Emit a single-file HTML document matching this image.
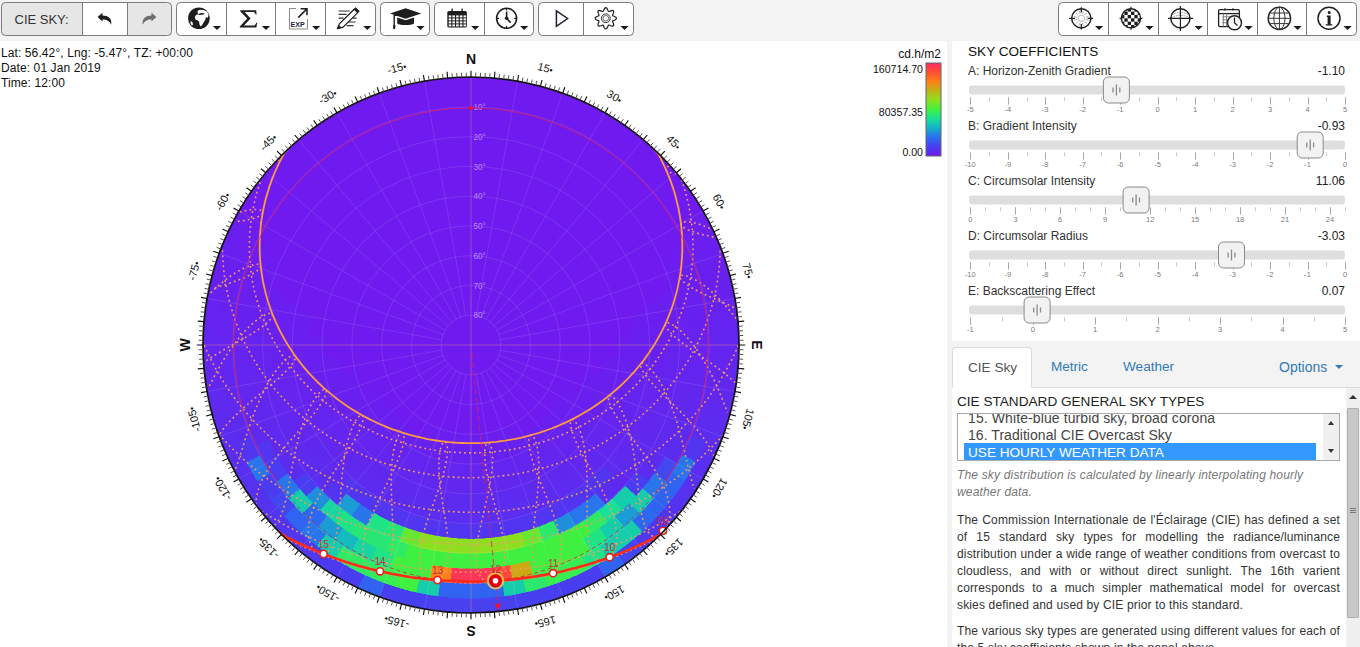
<!DOCTYPE html>
<html><head><meta charset="utf-8">
<style>
*{box-sizing:border-box}
html,body{margin:0;padding:0;width:1360px;height:647px;overflow:hidden;background:#fff;font-family:"Liberation Sans",sans-serif;color:#222}
#tb{position:absolute;left:0;top:0;width:1360px;height:41px;background:#f2f2f2}
.grp{position:absolute;top:2px;height:34px;border:1px solid #7c7c7c;border-radius:4px;background:#fff;overflow:hidden}
.btn{position:absolute;top:0;height:32px;border-left:1px solid #7c7c7c}
.btn.first{border-left:none}
.btn svg{position:absolute;left:0;top:0}
.caret{position:absolute;width:0;height:0;border-left:3.5px solid transparent;border-right:3.5px solid transparent;border-top:4px solid #222;top:25px}
#info{position:absolute;left:1px;top:45.8px;font-size:12px;line-height:15px;color:#111;letter-spacing:0.1px}
#gap{position:absolute;left:947px;top:41px;width:5px;height:606px;background:#f3f3f3}
#panel{position:absolute;left:952px;top:41px;width:408px;height:606px;background:#fff}
#legend{position:absolute;left:860px;top:45px;width:85px;height:115px;font-size:11px;color:#111}

.lbl{position:absolute;font-size:12px;color:#333;white-space:nowrap;line-height:14px}
.val{position:absolute;font-size:12px;color:#222;white-space:nowrap;text-align:right;line-height:14px}
#tabs{position:absolute;left:952px;top:341px;width:408px;height:47px;background:#f3f3f3;border-bottom:1px solid #dcdcdc}
.tab{position:absolute;top:6px;height:41px;font-size:14px;line-height:16px;color:#337ab7;white-space:nowrap}
.tab.act{background:#fff;border:1px solid #dcdcdc;border-bottom:none;border-radius:4px 4px 0 0;color:#555}
#content{position:absolute;left:952px;top:388px;width:394px;height:259px;background:#fff;overflow:hidden}
#sbar{position:absolute;left:1346px;top:388px;width:14px;height:259px;background:#f0f0f0}
#lb{position:absolute;left:5px;top:25px;width:383px;height:48px;border:1px solid #a9a9a9;background:#fff;overflow:hidden}
.it{position:absolute;left:10px;font-size:14px;line-height:17px;color:#444;white-space:nowrap}
.jl{position:absolute;left:5px;width:383px;font-size:12px;line-height:17px;color:#333;text-align:justify;text-align-last:justify;letter-spacing:0.15px;white-space:nowrap}
p.j{position:absolute;left:5px;width:383px;margin:0;font-size:12px;line-height:17px;color:#333;text-align:justify;letter-spacing:0.2px}
</style></head><body>
<svg width="1360" height="41" style="position:absolute;left:0;top:0"><rect x="0" y="0" width="1360" height="41" fill="#f3f3f3"/><clipPath id="g1c"><rect x="1.5" y="2.5" width="170" height="33" rx="4"/></clipPath><g clip-path="url(#g1c)"><rect x="1.5" y="2.5" width="81" height="33" fill="#e6e6e6"/><rect x="82.5" y="2.5" width="45" height="33" fill="#fff"/><rect x="127.5" y="2.5" width="44" height="33" fill="#e6e6e6"/></g><rect x="1.5" y="2.5" width="170" height="33" rx="4" fill="none" stroke="#7c7c7c"/><line x1="82.5" y1="3" x2="82.5" y2="35" stroke="#7c7c7c"/><line x1="127.5" y1="3" x2="127.5" y2="35" stroke="#7c7c7c"/><text x="14.5" y="23.8" font-family="Liberation Sans" font-size="13" fill="#333">CIE SKY:</text><path transform="translate(97.6,12.8)" d="M0,4.3 L4.9,0 V2.6 C10.5,2.6 14.6,5.2 13.6,12 C12.3,8.6 9.6,6.6 4.9,6.6 V8.8 Z" fill="#1e1e1e"/><path transform="translate(156.4,12.8) scale(-1,1)" d="M0,4.3 L4.9,0 V2.6 C10.5,2.6 14.6,5.2 13.6,12 C12.3,8.6 9.6,6.6 4.9,6.6 V8.8 Z" fill="#6e6e6e"/><rect x="176.5" y="2.5" width="199.0" height="33" rx="4" fill="#fff" stroke="#7c7c7c" stroke-width="1"/><line x1="226.5" y1="3" x2="226.5" y2="35" stroke="#7c7c7c" stroke-width="1"/><line x1="275.5" y1="3" x2="275.5" y2="35" stroke="#7c7c7c" stroke-width="1"/><line x1="325.5" y1="3" x2="325.5" y2="35" stroke="#7c7c7c" stroke-width="1"/><circle cx="198.9" cy="18.25" r="10.8" fill="#1e1e1e"/><path d="M197.6,10.8 L200,9.8 L203.5,9.9 L207,11.6 L208.6,14.6 L208,17.4 L205.6,17.6 L205.4,19.8 L203.8,22 L202,25.2 L200.8,26.4 L199.6,24.8 L199,21.6 L197,20 L195.4,19.6 L194.8,17 L195.6,15.4 L197,14.6 L198.6,14.6 L197.6,13 Z" fill="#fff"/><path d="M198,14.2 L201.2,13 L204.6,13.2 L203.6,14.6 L199.4,14.9 Z" fill="#1e1e1e"/><path d="M190.4,21 L192.4,22 L193,24.6 L192,25.4 L190.6,23.4 Z" fill="#fff"/><path d="M212.9,25.9 L221.1,25.9 L217.0,30.1 Z" fill="#1a1a1a"/><path d="M240.2,10.3 H256.2 L256.6,14.6 H255.6 C255.2,12.6 254.2,12 252.4,12 H244.6 L250.6,18.6 L244,25.6 H253 C254.8,25.6 255.6,24.8 256.2,22.8 H257.2 L256.4,27.4 H239.8 V26.6 L247.2,18.6 L240.2,11.2 Z" fill="#1e1e1e"/><path d="M261.9,25.9 L270.1,25.9 L266.0,30.1 Z" fill="#1a1a1a"/><path d="M296,8.5 H289.5 V29 H307.5 V19" fill="none" stroke="#8a8a8a" stroke-width="1"/><path d="M298.2,17.6 L306.4,9.4 M300.6,8.8 H307 V15.2" fill="none" stroke="#1e1e1e" stroke-width="1.5"/><text x="290.6" y="26.6" font-family="Liberation Sans" font-weight="bold" font-size="7.6" fill="#1c2340" textLength="14.2" lengthAdjust="spacingAndGlyphs">EXP</text><path d="M312.1,25.9 L320.3,25.9 L316.2,30.1 Z" fill="#1a1a1a"/><g stroke="#333" stroke-width="1.2" fill="none"><path d="M338.6,11 H349.6 M338.6,14.4 H346.6 M338.6,18.2 H343.6 M352.6,18.2 H356.6 M344.6,22 H355.6 M346.6,25.6 H353.6"/></g><path d="M337.6,28.6 L339.4,23.8 L354.2,9.2 L357.8,12.6 L343,27.2 Z" fill="#fff" stroke="#1e1e1e" stroke-width="1.2"/><path d="M337.6,28.6 L338.6,25.4 L341,27.6 Z M354.2,9.2 L355.6,7.8 L359.2,11.2 L357.8,12.6 Z" fill="#1e1e1e" stroke="#1e1e1e" stroke-width="1"/><path d="M363.2,25.9 L371.4,25.9 L367.3,30.1 Z" fill="#1a1a1a"/><rect x="380.5" y="2.5" width="49.0" height="33" rx="4" fill="#fff" stroke="#7c7c7c" stroke-width="1"/><path d="M390,13.6 L405.6,8.2 L421.3,13.6 L405.6,18.8 Z" fill="#1e1e1e"/><path d="M397.2,17.4 L405.6,20.2 L414,17.4 V23.4 C411,25.4 400.2,25.4 397.2,23.4 Z" fill="#1e1e1e"/><path d="M405,13.8 L394.2,15.6 V27.6" fill="none" stroke="#1e1e1e" stroke-width="1.4"/><path d="M393.2,25 H395.4 L395.2,28.9 H393.2 Z" fill="#1e1e1e"/><path d="M416.4,25.9 L424.6,25.9 L420.5,30.1 Z" fill="#1a1a1a"/><rect x="434.5" y="2.5" width="99.0" height="33" rx="4" fill="#fff" stroke="#7c7c7c" stroke-width="1"/><line x1="484.5" y1="3" x2="484.5" y2="35" stroke="#7c7c7c" stroke-width="1"/><rect x="447.3" y="11" width="19.6" height="16.6" rx="1.6" fill="#1e1e1e"/><rect x="448.7" y="15.4" width="2.6" height="2" fill="#fff"/><rect x="452.4" y="15.4" width="2.6" height="2" fill="#fff"/><rect x="456.1" y="15.4" width="2.6" height="2" fill="#fff"/><rect x="459.8" y="15.4" width="2.6" height="2" fill="#fff"/><rect x="463.5" y="15.4" width="2.6" height="2" fill="#fff"/><rect x="448.7" y="18.4" width="2.6" height="2" fill="#fff"/><rect x="452.4" y="18.4" width="2.6" height="2" fill="#fff"/><rect x="456.1" y="18.4" width="2.6" height="2" fill="#fff"/><rect x="459.8" y="18.4" width="2.6" height="2" fill="#fff"/><rect x="463.5" y="18.4" width="2.6" height="2" fill="#fff"/><rect x="448.7" y="21.4" width="2.6" height="2" fill="#fff"/><rect x="452.4" y="21.4" width="2.6" height="2" fill="#fff"/><rect x="456.1" y="21.4" width="2.6" height="2" fill="#fff"/><rect x="459.8" y="21.4" width="2.6" height="2" fill="#fff"/><rect x="463.5" y="21.4" width="2.6" height="2" fill="#fff"/><rect x="448.7" y="24.4" width="2.6" height="2" fill="#fff"/><rect x="452.4" y="24.4" width="2.6" height="2" fill="#fff"/><rect x="456.1" y="24.4" width="2.6" height="2" fill="#fff"/><rect x="459.8" y="24.4" width="2.6" height="2" fill="#fff"/><rect x="463.5" y="24.4" width="2.6" height="2" fill="#fff"/><rect x="451.4" y="8.6" width="1.4" height="4.4" fill="#1e1e1e"/><rect x="461.4" y="8.6" width="1.4" height="4.4" fill="#1e1e1e"/><path d="M471.1,25.9 L479.3,25.9 L475.2,30.1 Z" fill="#1a1a1a"/><circle cx="506.6" cy="18.3" r="10" fill="none" stroke="#1e1e1e" stroke-width="1.6"/><path d="M506.6,8.6 V10.6 M506.6,26 V28 M497,18.3 H499 M514.2,18.3 H516.2" stroke="#1e1e1e" stroke-width="1.2"/><path d="M506.6,11.6 V18.3 L510.6,22.6" fill="none" stroke="#1e1e1e" stroke-width="1.6"/><circle cx="506.6" cy="18.3" r="1.8" fill="#1e1e1e"/><path d="M520.1,25.9 L528.3,25.9 L524.2,30.1 Z" fill="#1a1a1a"/><rect x="538.5" y="2.5" width="95.0" height="33" rx="4" fill="#fff" stroke="#7c7c7c" stroke-width="1"/><line x1="583.5" y1="3" x2="583.5" y2="35" stroke="#7c7c7c" stroke-width="1"/><path d="M556.4,10.8 L567.6,18.5 L556.4,26.4 Z" fill="none" stroke="#1e2030" stroke-width="1.5" stroke-linejoin="miter"/><path d="M605.80,7.70 L606.31,7.83 L606.79,8.22 L607.21,8.79 L607.56,9.47 L607.84,10.16 L608.08,10.77 L608.33,11.22 L608.63,11.46 L609.02,11.50 L609.51,11.36 L610.11,11.11 L610.80,10.82 L611.53,10.58 L612.23,10.47 L612.84,10.54 L613.30,10.80 L613.56,11.26 L613.63,11.87 L613.52,12.57 L613.28,13.30 L612.99,13.99 L612.74,14.59 L612.60,15.08 L612.64,15.47 L612.88,15.77 L613.33,16.02 L613.94,16.26 L614.63,16.54 L615.31,16.89 L615.88,17.31 L616.27,17.79 L616.40,18.30 L616.27,18.81 L615.88,19.29 L615.31,19.71 L614.63,20.06 L613.94,20.34 L613.33,20.58 L612.88,20.83 L612.64,21.13 L612.60,21.52 L612.74,22.01 L612.99,22.61 L613.28,23.30 L613.52,24.03 L613.63,24.73 L613.56,25.34 L613.30,25.80 L612.84,26.06 L612.23,26.13 L611.53,26.02 L610.80,25.78 L610.11,25.49 L609.51,25.24 L609.02,25.10 L608.63,25.14 L608.33,25.38 L608.08,25.83 L607.84,26.44 L607.56,27.13 L607.21,27.81 L606.79,28.38 L606.31,28.77 L605.80,28.90 L605.29,28.77 L604.81,28.38 L604.39,27.81 L604.04,27.13 L603.76,26.44 L603.52,25.83 L603.27,25.38 L602.97,25.14 L602.58,25.10 L602.09,25.24 L601.49,25.49 L600.80,25.78 L600.07,26.02 L599.37,26.13 L598.76,26.06 L598.30,25.80 L598.04,25.34 L597.97,24.73 L598.08,24.03 L598.32,23.30 L598.61,22.61 L598.86,22.01 L599.00,21.52 L598.96,21.13 L598.72,20.83 L598.27,20.58 L597.66,20.34 L596.97,20.06 L596.29,19.71 L595.72,19.29 L595.33,18.81 L595.20,18.30 L595.33,17.79 L595.72,17.31 L596.29,16.89 L596.97,16.54 L597.66,16.26 L598.27,16.02 L598.72,15.77 L598.96,15.47 L599.00,15.08 L598.86,14.59 L598.61,13.99 L598.32,13.30 L598.08,12.57 L597.97,11.87 L598.04,11.26 L598.30,10.80 L598.76,10.54 L599.37,10.47 L600.07,10.58 L600.80,10.82 L601.49,11.11 L602.09,11.36 L602.58,11.50 L602.97,11.46 L603.27,11.22 L603.52,10.77 L603.76,10.16 L604.04,9.47 L604.39,8.79 L604.81,8.22 L605.29,7.83Z" fill="none" stroke="#1e1e1e" stroke-width="1.2"/><circle cx="605.8" cy="18.3" r="4.4" fill="none" stroke="#333" stroke-width="1"/><circle cx="605.8" cy="18.3" r="2.8" fill="none" stroke="#555" stroke-width="0.9"/><path d="M620.4,25.9 L628.6,25.9 L624.5,30.1 Z" fill="#1a1a1a"/><rect x="1058.5" y="2.5" width="298.0" height="33" rx="4" fill="#fff" stroke="#7c7c7c" stroke-width="1"/><line x1="1108.5" y1="3" x2="1108.5" y2="35" stroke="#7c7c7c" stroke-width="1"/><line x1="1158.5" y1="3" x2="1158.5" y2="35" stroke="#7c7c7c" stroke-width="1"/><line x1="1207.5" y1="3" x2="1207.5" y2="35" stroke="#7c7c7c" stroke-width="1"/><line x1="1257.5" y1="3" x2="1257.5" y2="35" stroke="#7c7c7c" stroke-width="1"/><line x1="1306.5" y1="3" x2="1306.5" y2="35" stroke="#7c7c7c" stroke-width="1"/><path d="M1082.49,13.86 L1083.22,11.15 M1084.55,15.05 L1086.53,13.07 M1085.74,17.11 L1088.45,16.38 M1085.74,19.49 L1088.45,20.22 M1084.55,21.55 L1086.53,23.53 M1082.49,22.74 L1083.22,25.45 M1080.11,22.74 L1079.38,25.45 M1078.05,21.55 L1076.07,23.53 M1076.86,19.49 L1074.15,20.22 M1076.86,17.11 L1074.15,16.38 M1078.05,15.05 L1076.07,13.07 M1080.11,13.86 L1079.38,11.15" stroke="#999" stroke-width="0.8"/><circle cx="1081.3" cy="18.3" r="3.2" fill="none" stroke="#aaa" stroke-width="0.9"/><circle cx="1081.3" cy="18.3" r="9.6" fill="none" stroke="#222" stroke-width="1.5"/><path d="M1081.3,7.2 V12.6 M1081.3,24 V29.4 M1069.2,18.3 H1075 M1087.6,18.3 H1093" stroke="#222" stroke-width="1.3"/><path d="M1095.0,25.9 L1103.2,25.9 L1099.1,30.1 Z" fill="#1a1a1a"/><clipPath id="chk"><circle cx="1131.0" cy="18.3" r="9.6"/></clipPath><g clip-path="url(#chk)"><rect x="1121.0" y="8.3" width="20" height="20" fill="#fff"/><rect x="1121.00" y="8.30" width="3.34" height="3.34" fill="#1e1e1e"/><rect x="1127.68" y="8.30" width="3.34" height="3.34" fill="#1e1e1e"/><rect x="1134.36" y="8.30" width="3.34" height="3.34" fill="#1e1e1e"/><rect x="1124.34" y="11.64" width="3.34" height="3.34" fill="#1e1e1e"/><rect x="1131.02" y="11.64" width="3.34" height="3.34" fill="#1e1e1e"/><rect x="1137.70" y="11.64" width="3.34" height="3.34" fill="#1e1e1e"/><rect x="1121.00" y="14.98" width="3.34" height="3.34" fill="#1e1e1e"/><rect x="1127.68" y="14.98" width="3.34" height="3.34" fill="#1e1e1e"/><rect x="1134.36" y="14.98" width="3.34" height="3.34" fill="#1e1e1e"/><rect x="1124.34" y="18.32" width="3.34" height="3.34" fill="#1e1e1e"/><rect x="1131.02" y="18.32" width="3.34" height="3.34" fill="#1e1e1e"/><rect x="1137.70" y="18.32" width="3.34" height="3.34" fill="#1e1e1e"/><rect x="1121.00" y="21.66" width="3.34" height="3.34" fill="#1e1e1e"/><rect x="1127.68" y="21.66" width="3.34" height="3.34" fill="#1e1e1e"/><rect x="1134.36" y="21.66" width="3.34" height="3.34" fill="#1e1e1e"/><rect x="1124.34" y="25.00" width="3.34" height="3.34" fill="#1e1e1e"/><rect x="1131.02" y="25.00" width="3.34" height="3.34" fill="#1e1e1e"/><rect x="1137.70" y="25.00" width="3.34" height="3.34" fill="#1e1e1e"/></g><circle cx="1131.0" cy="18.3" r="9.6" fill="none" stroke="#222" stroke-width="1.4"/><path d="M1131.0,6.8 V9 M1131.0,27.6 V29.8 M1119.6,18.3 H1122 M1140,18.3 H1142.4" stroke="#222" stroke-width="1.2"/><path d="M1145.4,25.9 L1153.6,25.9 L1149.5,30.1 Z" fill="#1a1a1a"/><path d="M1171.8000000000002,15 Q1180.4,9.4 1189.0,15 M1171.2,18 Q1180.4,12.4 1189.6000000000001,18" fill="none" stroke="#888" stroke-width="0.9" stroke-dasharray="1.6,1"/><circle cx="1180.4" cy="18.3" r="9.6" fill="none" stroke="#222" stroke-width="1.5"/><path d="M1180.4,6 V31 M1168,18.3 H1193" stroke="#222" stroke-width="1.2"/><path d="M1194.5,25.9 L1202.7,25.9 L1198.6,30.1 Z" fill="#1a1a1a"/><rect x="1218.6" y="9.6" width="20.8" height="17" rx="1.4" fill="none" stroke="#222" stroke-width="1.3"/><path d="M1218.6,13.6 H1239.4" stroke="#222" stroke-width="1.3"/><path d="M1222.2,16.8 H1231 M1222.2,19.8 H1229 M1222.2,22.8 H1228 M1223.4,13.6 V26.4 M1226.6,13.6 V26.4" stroke="#777" stroke-width="0.9"/><path d="M1225,8.2 V10.6 M1233,8.2 V10.6" stroke="#222" stroke-width="1.3"/><circle cx="1234.5" cy="22.8" r="7" fill="#fff" stroke="#222" stroke-width="1.4"/><path d="M1234.5,17.6 V22.8 L1237.4,25.4" fill="none" stroke="#222" stroke-width="1.3"/><path d="M1244.5,25.9 L1252.7,25.9 L1248.6,30.1 Z" fill="#1a1a1a"/><circle cx="1279.4" cy="18.3" r="11.2" fill="none" stroke="#222" stroke-width="1.4"/><ellipse cx="1279.4" cy="18.3" rx="5.6" ry="11.2" fill="none" stroke="#333" stroke-width="1"/><path d="M1279.4,7.1 V29.5 M1268.2,18.3 H1290.6 M1270.4,13 H1288.4 M1270.4,23.6 H1288.4" stroke="#333" stroke-width="1"/><path d="M1293.5,25.9 L1301.7,25.9 L1297.6,30.1 Z" fill="#1a1a1a"/><circle cx="1329.0" cy="18.3" r="11" fill="none" stroke="#222" stroke-width="1.5"/><circle cx="1329.2" cy="12.4" r="1.5" fill="#1e1e1e"/><path d="M1326.8,15.6 H1330.6 V24.2 H1332.2 V25.6 H1325.8 V24.2 H1327.6 V17 H1326.8 Z" fill="#1e1e1e"/><path d="M1343.5,25.9 L1351.7,25.9 L1347.6,30.1 Z" fill="#1a1a1a"/></svg>
<div id="info">Lat: 56.42°, Lng: -5.47°, TZ: +00:00<br>Date: 01 Jan 2019<br>Time: 12:00</div>
<svg width="1360" height="647" style="position:absolute;left:0;top:0">
<defs><clipPath id="dc"><circle cx="471.0" cy="345.0" r="268.0"/></clipPath></defs>
<circle cx="471.0" cy="345.0" r="268.0" fill="#6f1aef"/>
<g clip-path="url(#dc)" shape-rendering="crispEdges">
<path d="M703.1,211.0 L706.0,216.1 L708.7,221.3 L711.4,226.5 L713.9,231.7 L700.4,238.0 L698.0,233.1 L695.5,228.1 L692.9,223.3 L690.2,218.4Z" fill="#6b1eef" stroke="#6b1eef" stroke-width="0.6"/>
<path d="M713.9,231.7 L716.3,237.1 L718.6,242.4 L720.8,247.9 L722.8,253.3 L708.8,258.4 L706.9,253.3 L704.8,248.1 L702.7,243.1 L700.4,238.0Z" fill="#691fef" stroke="#691fef" stroke-width="0.6"/>
<path d="M722.8,253.3 L724.8,258.9 L726.6,264.4 L728.3,270.0 L729.9,275.6 L715.5,279.5 L714.0,274.2 L712.4,268.9 L710.7,263.6 L708.8,258.4Z" fill="#6920ef" stroke="#6920ef" stroke-width="0.6"/>
<path d="M729.9,275.6 L731.3,281.3 L732.6,287.0 L733.9,292.7 L734.9,298.5 L720.3,301.0 L719.2,295.6 L718.1,290.2 L716.9,284.8 L715.5,279.5Z" fill="#6721ef" stroke="#6721ef" stroke-width="0.6"/>
<path d="M734.9,298.5 L735.9,304.2 L736.7,310.0 L737.4,315.8 L738.0,321.6 L723.1,322.9 L722.6,317.4 L721.9,312.0 L721.2,306.5 L720.3,301.0Z" fill="#6622ef" stroke="#6622ef" stroke-width="0.6"/>
<path d="M738.0,321.6 L738.4,327.5 L738.7,333.3 L738.9,339.2 L739.0,345.0 L724.1,345.0 L724.1,339.5 L723.9,334.0 L723.6,328.4 L723.1,322.9Z" fill="#6424ef" stroke="#6424ef" stroke-width="0.6"/>
<path d="M739.0,345.0 L738.9,350.8 L738.7,356.7 L738.4,362.5 L738.0,368.4 L723.1,367.1 L723.6,361.6 L723.9,356.0 L724.1,350.5 L724.1,345.0Z" fill="#6325ef" stroke="#6325ef" stroke-width="0.6"/>
<path d="M738.0,368.4 L737.4,374.2 L736.7,380.0 L735.9,385.8 L734.9,391.5 L720.3,389.0 L721.2,383.5 L721.9,378.0 L722.6,372.6 L723.1,367.1Z" fill="#6127ef" stroke="#6127ef" stroke-width="0.6"/>
<path d="M734.9,391.5 L733.9,397.3 L732.6,403.0 L731.3,408.7 L729.9,414.4 L715.5,410.5 L716.9,405.2 L718.1,399.8 L719.2,394.4 L720.3,389.0Z" fill="#5f29ef" stroke="#5f29ef" stroke-width="0.6"/>
<path d="M729.9,414.4 L728.3,420.0 L726.6,425.6 L724.8,431.1 L722.8,436.7 L708.8,431.6 L710.7,426.4 L712.4,421.1 L714.0,415.8 L715.5,410.5Z" fill="#5d2bef" stroke="#5d2bef" stroke-width="0.6"/>
<path d="M722.8,436.7 L720.8,442.1 L718.6,447.6 L716.3,452.9 L713.9,458.3 L700.4,452.0 L702.7,446.9 L704.8,441.9 L706.9,436.7 L708.8,431.6Z" fill="#5b2df0" stroke="#5b2df0" stroke-width="0.6"/>
<path d="M713.9,458.3 L711.4,463.5 L708.7,468.7 L706.0,473.9 L703.1,479.0 L690.2,471.6 L692.9,466.7 L695.5,461.9 L698.0,456.9 L700.4,452.0Z" fill="#582ff0" stroke="#582ff0" stroke-width="0.6"/>
<path d="M703.1,479.0 L700.1,484.0 L697.0,489.0 L693.8,493.9 L690.5,498.7 L678.3,490.2 L681.5,485.6 L684.5,481.0 L687.4,476.3 L690.2,471.6Z" fill="#5631f0" stroke="#5631f0" stroke-width="0.6"/>
<path d="M690.5,498.7 L687.1,503.5 L683.6,508.1 L680.0,512.7 L676.3,517.3 L664.9,507.7 L668.4,503.4 L671.8,499.1 L675.1,494.7 L678.3,490.2Z" fill="#5433f0" stroke="#5433f0" stroke-width="0.6"/>
<path d="M676.3,517.3 L672.5,521.7 L668.6,526.1 L664.6,530.3 L660.5,534.5 L650.0,524.0 L653.8,520.0 L657.6,516.0 L661.3,511.9 L664.9,507.7Z" fill="#5235f0" stroke="#5235f0" stroke-width="0.6"/>
<path d="M660.5,534.5 L656.3,538.6 L652.1,542.6 L647.7,546.5 L643.3,550.3 L633.7,538.9 L637.9,535.3 L642.0,531.6 L646.0,527.8 L650.0,524.0Z" fill="#5037f0" stroke="#5037f0" stroke-width="0.6"/>
<path d="M643.3,550.3 L638.7,554.0 L634.1,557.6 L629.5,561.1 L624.7,564.5 L616.2,552.3 L620.7,549.1 L625.1,545.8 L629.4,542.4 L633.7,538.9Z" fill="#4446f0" stroke="#4446f0" stroke-width="0.6"/>
<path d="M624.7,564.5 L619.9,567.8 L615.0,571.0 L610.0,574.1 L605.0,577.1 L597.6,564.2 L602.3,561.4 L607.0,558.5 L611.6,555.5 L616.2,552.3Z" fill="#3064f0" stroke="#3064f0" stroke-width="0.6"/>
<path d="M605.0,577.1 L599.9,580.0 L594.7,582.7 L589.5,585.4 L584.3,587.9 L578.0,574.4 L582.9,572.0 L587.9,569.5 L592.7,566.9 L597.6,564.2Z" fill="#4a3cf0" stroke="#4a3cf0" stroke-width="0.6"/>
<path d="M584.3,587.9 L578.9,590.3 L573.6,592.6 L568.1,594.8 L562.7,596.8 L557.6,582.8 L562.7,580.9 L567.9,578.8 L572.9,576.7 L578.0,574.4Z" fill="#493df0" stroke="#493df0" stroke-width="0.6"/>
<path d="M562.7,596.8 L557.1,598.8 L551.6,600.6 L546.0,602.3 L540.4,603.9 L536.5,589.5 L541.8,588.0 L547.1,586.4 L552.4,584.7 L557.6,582.8Z" fill="#483ff0" stroke="#483ff0" stroke-width="0.6"/>
<path d="M540.4,603.9 L534.7,605.3 L529.0,606.6 L523.3,607.9 L517.5,608.9 L515.0,594.3 L520.4,593.2 L525.8,592.1 L531.2,590.9 L536.5,589.5Z" fill="#4740f0" stroke="#4740f0" stroke-width="0.6"/>
<path d="M517.5,608.9 L511.8,609.9 L506.0,610.7 L500.2,611.4 L494.4,612.0 L493.1,597.1 L498.6,596.6 L504.0,595.9 L509.5,595.2 L515.0,594.3Z" fill="#4741f0" stroke="#4741f0" stroke-width="0.6"/>
<path d="M494.4,612.0 L488.5,612.4 L482.7,612.7 L476.8,612.9 L471.0,613.0 L471.0,598.1 L476.5,598.1 L482.0,597.9 L487.6,597.6 L493.1,597.1Z" fill="#4741f0" stroke="#4741f0" stroke-width="0.6"/>
<path d="M471.0,613.0 L465.2,612.9 L459.3,612.7 L453.5,612.4 L447.6,612.0 L448.9,597.1 L454.4,597.6 L460.0,597.9 L465.5,598.1 L471.0,598.1Z" fill="#4741f0" stroke="#4741f0" stroke-width="0.6"/>
<path d="M447.6,612.0 L441.8,611.4 L436.0,610.7 L430.2,609.9 L424.5,608.9 L427.0,594.3 L432.5,595.2 L438.0,595.9 L443.4,596.6 L448.9,597.1Z" fill="#4741f0" stroke="#4741f0" stroke-width="0.6"/>
<path d="M424.5,608.9 L418.7,607.9 L413.0,606.6 L407.3,605.3 L401.6,603.9 L405.5,589.5 L410.8,590.9 L416.2,592.1 L421.6,593.2 L427.0,594.3Z" fill="#4740f0" stroke="#4740f0" stroke-width="0.6"/>
<path d="M401.6,603.9 L396.0,602.3 L390.4,600.6 L384.9,598.8 L379.3,596.8 L384.4,582.8 L389.6,584.7 L394.9,586.4 L400.2,588.0 L405.5,589.5Z" fill="#483ff0" stroke="#483ff0" stroke-width="0.6"/>
<path d="M379.3,596.8 L373.9,594.8 L368.4,592.6 L363.1,590.3 L357.7,587.9 L364.0,574.4 L369.1,576.7 L374.1,578.8 L379.3,580.9 L384.4,582.8Z" fill="#3064f0" stroke="#3064f0" stroke-width="0.6"/>
<path d="M357.7,587.9 L352.5,585.4 L347.3,582.7 L342.1,580.0 L337.0,577.1 L344.4,564.2 L349.3,566.9 L354.1,569.5 L359.1,572.0 L364.0,574.4Z" fill="#4a3cf0" stroke="#4a3cf0" stroke-width="0.6"/>
<path d="M337.0,577.1 L332.0,574.1 L327.0,571.0 L322.1,567.8 L317.3,564.5 L325.8,552.3 L330.4,555.5 L335.0,558.5 L339.7,561.4 L344.4,564.2Z" fill="#4c3af0" stroke="#4c3af0" stroke-width="0.6"/>
<path d="M317.3,564.5 L312.5,561.1 L307.9,557.6 L303.3,554.0 L298.7,550.3 L308.3,538.9 L312.6,542.4 L316.9,545.8 L321.3,549.1 L325.8,552.3Z" fill="#4e39f0" stroke="#4e39f0" stroke-width="0.6"/>
<path d="M298.7,550.3 L294.3,546.5 L289.9,542.6 L285.7,538.6 L281.5,534.5 L292.0,524.0 L296.0,527.8 L300.0,531.6 L304.1,535.3 L308.3,538.9Z" fill="#5037f0" stroke="#5037f0" stroke-width="0.6"/>
<path d="M281.5,534.5 L277.4,530.3 L273.4,526.1 L269.5,521.7 L265.7,517.3 L277.1,507.7 L280.7,511.9 L284.4,516.0 L288.2,520.0 L292.0,524.0Z" fill="#5235f0" stroke="#5235f0" stroke-width="0.6"/>
<path d="M265.7,517.3 L262.0,512.7 L258.4,508.1 L254.9,503.5 L251.5,498.7 L263.7,490.2 L266.9,494.7 L270.2,499.1 L273.6,503.4 L277.1,507.7Z" fill="#5433f0" stroke="#5433f0" stroke-width="0.6"/>
<path d="M251.5,498.7 L248.2,493.9 L245.0,489.0 L241.9,484.0 L238.9,479.0 L251.8,471.6 L254.6,476.3 L257.5,481.0 L260.5,485.6 L263.7,490.2Z" fill="#5631f0" stroke="#5631f0" stroke-width="0.6"/>
<path d="M238.9,479.0 L236.0,473.9 L233.3,468.7 L230.6,463.5 L228.1,458.3 L241.6,452.0 L244.0,456.9 L246.5,461.9 L249.1,466.7 L251.8,471.6Z" fill="#582ff0" stroke="#582ff0" stroke-width="0.6"/>
<path d="M228.1,458.3 L225.7,452.9 L223.4,447.6 L221.2,442.1 L219.2,436.7 L233.2,431.6 L235.1,436.7 L237.2,441.9 L239.3,446.9 L241.6,452.0Z" fill="#5b2df0" stroke="#5b2df0" stroke-width="0.6"/>
<path d="M219.2,436.7 L217.2,431.1 L215.4,425.6 L213.7,420.0 L212.1,414.4 L226.5,410.5 L228.0,415.8 L229.6,421.1 L231.3,426.4 L233.2,431.6Z" fill="#5d2bef" stroke="#5d2bef" stroke-width="0.6"/>
<path d="M212.1,414.4 L210.7,408.7 L209.4,403.0 L208.1,397.3 L207.1,391.5 L221.7,389.0 L222.8,394.4 L223.9,399.8 L225.1,405.2 L226.5,410.5Z" fill="#5f29ef" stroke="#5f29ef" stroke-width="0.6"/>
<path d="M207.1,391.5 L206.1,385.8 L205.3,380.0 L204.6,374.2 L204.0,368.4 L218.9,367.1 L219.4,372.6 L220.1,378.0 L220.8,383.5 L221.7,389.0Z" fill="#6127ef" stroke="#6127ef" stroke-width="0.6"/>
<path d="M204.0,368.4 L203.6,362.5 L203.3,356.7 L203.1,350.8 L203.0,345.0 L217.9,345.0 L217.9,350.5 L218.1,356.0 L218.4,361.6 L218.9,367.1Z" fill="#6325ef" stroke="#6325ef" stroke-width="0.6"/>
<path d="M203.0,345.0 L203.1,339.2 L203.3,333.3 L203.6,327.5 L204.0,321.6 L218.9,322.9 L218.4,328.4 L218.1,334.0 L217.9,339.5 L217.9,345.0Z" fill="#6424ef" stroke="#6424ef" stroke-width="0.6"/>
<path d="M204.0,321.6 L204.6,315.8 L205.3,310.0 L206.1,304.2 L207.1,298.5 L221.7,301.0 L220.8,306.5 L220.1,312.0 L219.4,317.4 L218.9,322.9Z" fill="#6622ef" stroke="#6622ef" stroke-width="0.6"/>
<path d="M207.1,298.5 L208.1,292.7 L209.4,287.0 L210.7,281.3 L212.1,275.6 L226.5,279.5 L225.1,284.8 L223.9,290.2 L222.8,295.6 L221.7,301.0Z" fill="#6721ef" stroke="#6721ef" stroke-width="0.6"/>
<path d="M212.1,275.6 L213.7,270.0 L215.4,264.4 L217.2,258.9 L219.2,253.3 L233.2,258.4 L231.3,263.6 L229.6,268.9 L228.0,274.2 L226.5,279.5Z" fill="#6920ef" stroke="#6920ef" stroke-width="0.6"/>
<path d="M219.2,253.3 L221.2,247.9 L223.4,242.4 L225.7,237.1 L228.1,231.7 L241.6,238.0 L239.3,243.1 L237.2,248.1 L235.1,253.3 L233.2,258.4Z" fill="#691fef" stroke="#691fef" stroke-width="0.6"/>
<path d="M228.1,231.7 L230.6,226.5 L233.3,221.3 L236.0,216.1 L238.9,211.0 L251.8,218.4 L249.1,223.3 L246.5,228.1 L244.0,233.1 L241.6,238.0Z" fill="#6b1eef" stroke="#6b1eef" stroke-width="0.6"/>
<path d="M695.5,228.1 L698.0,233.1 L700.4,238.0 L702.7,243.1 L704.8,248.1 L691.1,253.8 L689.0,249.1 L686.9,244.3 L684.7,239.6 L682.3,235.0Z" fill="#6b1eef" stroke="#6b1eef" stroke-width="0.6"/>
<path d="M704.8,248.1 L706.9,253.3 L708.8,258.4 L710.7,263.6 L712.4,268.9 L698.2,273.4 L696.6,268.4 L694.9,263.5 L693.0,258.7 L691.1,253.8Z" fill="#691fef" stroke="#691fef" stroke-width="0.6"/>
<path d="M712.4,268.9 L714.0,274.2 L715.5,279.5 L716.9,284.8 L718.1,290.2 L703.6,293.4 L702.4,288.4 L701.1,283.3 L699.7,278.3 L698.2,273.4Z" fill="#6920ef" stroke="#6920ef" stroke-width="0.6"/>
<path d="M718.1,290.2 L719.2,295.6 L720.3,301.0 L721.2,306.5 L721.9,312.0 L707.2,313.9 L706.4,308.8 L705.6,303.6 L704.6,298.5 L703.6,293.4Z" fill="#6721ef" stroke="#6721ef" stroke-width="0.6"/>
<path d="M721.9,312.0 L722.6,317.4 L723.1,322.9 L723.6,328.4 L723.9,334.0 L709.0,334.6 L708.7,329.4 L708.3,324.2 L707.8,319.1 L707.2,313.9Z" fill="#6622ef" stroke="#6622ef" stroke-width="0.6"/>
<path d="M723.9,334.0 L724.1,339.5 L724.1,345.0 L724.1,350.5 L723.9,356.0 L709.0,355.4 L709.2,350.2 L709.2,345.0 L709.2,339.8 L709.0,334.6Z" fill="#6524ef" stroke="#6524ef" stroke-width="0.6"/>
<path d="M723.9,356.0 L723.6,361.6 L723.1,367.1 L722.6,372.6 L721.9,378.0 L707.2,376.1 L707.8,370.9 L708.3,365.8 L708.7,360.6 L709.0,355.4Z" fill="#6325ef" stroke="#6325ef" stroke-width="0.6"/>
<path d="M721.9,378.0 L721.2,383.5 L720.3,389.0 L719.2,394.4 L718.1,399.8 L703.6,396.6 L704.6,391.5 L705.6,386.4 L706.4,381.2 L707.2,376.1Z" fill="#6127ef" stroke="#6127ef" stroke-width="0.6"/>
<path d="M718.1,399.8 L716.9,405.2 L715.5,410.5 L714.0,415.8 L712.4,421.1 L698.2,416.6 L699.7,411.7 L701.1,406.7 L702.4,401.6 L703.6,396.6Z" fill="#5f29ef" stroke="#5f29ef" stroke-width="0.6"/>
<path d="M712.4,421.1 L710.7,426.4 L708.8,431.6 L706.9,436.7 L704.8,441.9 L691.1,436.2 L693.0,431.3 L694.9,426.5 L696.6,421.6 L698.2,416.6Z" fill="#5d2aef" stroke="#5d2aef" stroke-width="0.6"/>
<path d="M704.8,441.9 L702.7,446.9 L700.4,452.0 L698.0,456.9 L695.5,461.9 L682.3,455.0 L684.7,450.4 L686.9,445.7 L689.0,440.9 L691.1,436.2Z" fill="#5135f0" stroke="#5135f0" stroke-width="0.6"/>
<path d="M695.5,461.9 L692.9,466.7 L690.2,471.6 L687.4,476.3 L684.5,481.0 L671.9,473.0 L674.7,468.6 L677.3,464.1 L679.9,459.6 L682.3,455.0Z" fill="#2875ec" stroke="#2875ec" stroke-width="0.6"/>
<path d="M684.5,481.0 L681.5,485.6 L678.3,490.2 L675.1,494.7 L671.8,499.1 L660.0,490.0 L663.1,485.9 L666.1,481.6 L669.1,477.3 L671.9,473.0Z" fill="#3064f0" stroke="#3064f0" stroke-width="0.6"/>
<path d="M671.8,499.1 L668.4,503.4 L664.9,507.7 L661.3,511.9 L657.6,516.0 L646.6,505.9 L650.1,502.1 L653.5,498.1 L656.8,494.1 L660.0,490.0Z" fill="#3064f0" stroke="#3064f0" stroke-width="0.6"/>
<path d="M657.6,516.0 L653.8,520.0 L650.0,524.0 L646.0,527.8 L642.0,531.6 L631.9,520.6 L635.7,517.1 L639.4,513.4 L643.1,509.7 L646.6,505.9Z" fill="#2d69f0" stroke="#2d69f0" stroke-width="0.6"/>
<path d="M642.0,531.6 L637.9,535.3 L633.7,538.9 L629.4,542.4 L625.1,545.8 L616.0,534.0 L620.1,530.8 L624.1,527.5 L628.1,524.1 L631.9,520.6Z" fill="#16cdab" stroke="#16cdab" stroke-width="0.6"/>
<path d="M625.1,545.8 L620.7,549.1 L616.2,552.3 L611.6,555.5 L607.0,558.5 L599.0,545.9 L603.3,543.1 L607.6,540.1 L611.9,537.1 L616.0,534.0Z" fill="#16cdab" stroke="#16cdab" stroke-width="0.6"/>
<path d="M607.0,558.5 L602.3,561.4 L597.6,564.2 L592.7,566.9 L587.9,569.5 L581.0,556.3 L585.6,553.9 L590.1,551.3 L594.6,548.7 L599.0,545.9Z" fill="#20e386" stroke="#20e386" stroke-width="0.6"/>
<path d="M587.9,569.5 L582.9,572.0 L578.0,574.4 L572.9,576.7 L567.9,578.8 L562.2,565.1 L566.9,563.0 L571.7,560.9 L576.4,558.7 L581.0,556.3Z" fill="#38ed52" stroke="#38ed52" stroke-width="0.6"/>
<path d="M567.9,578.8 L562.7,580.9 L557.6,582.8 L552.4,584.7 L547.1,586.4 L542.6,572.2 L547.6,570.6 L552.5,568.9 L557.3,567.0 L562.2,565.1Z" fill="#38ed52" stroke="#38ed52" stroke-width="0.6"/>
<path d="M547.1,586.4 L541.8,588.0 L536.5,589.5 L531.2,590.9 L525.8,592.1 L522.6,577.6 L527.6,576.4 L532.7,575.1 L537.7,573.7 L542.6,572.2Z" fill="#2ce86c" stroke="#2ce86c" stroke-width="0.6"/>
<path d="M525.8,592.1 L520.4,593.2 L515.0,594.3 L509.5,595.2 L504.0,595.9 L502.1,581.2 L507.2,580.4 L512.4,579.6 L517.5,578.6 L522.6,577.6Z" fill="#16cdab" stroke="#16cdab" stroke-width="0.6"/>
<path d="M504.0,595.9 L498.6,596.6 L493.1,597.1 L487.6,597.6 L482.0,597.9 L481.4,583.0 L486.6,582.7 L491.8,582.3 L496.9,581.8 L502.1,581.2Z" fill="#3064f0" stroke="#3064f0" stroke-width="0.6"/>
<path d="M482.0,597.9 L476.5,598.1 L471.0,598.1 L465.5,598.1 L460.0,597.9 L460.6,583.0 L465.8,583.2 L471.0,583.2 L476.2,583.2 L481.4,583.0Z" fill="#3064f0" stroke="#3064f0" stroke-width="0.6"/>
<path d="M460.0,597.9 L454.4,597.6 L448.9,597.1 L443.4,596.6 L438.0,595.9 L439.9,581.2 L445.1,581.8 L450.2,582.3 L455.4,582.7 L460.6,583.0Z" fill="#3064f0" stroke="#3064f0" stroke-width="0.6"/>
<path d="M438.0,595.9 L432.5,595.2 L427.0,594.3 L421.6,593.2 L416.2,592.1 L419.4,577.6 L424.5,578.6 L429.6,579.6 L434.8,580.4 L439.9,581.2Z" fill="#16cdab" stroke="#16cdab" stroke-width="0.6"/>
<path d="M416.2,592.1 L410.8,590.9 L405.5,589.5 L400.2,588.0 L394.9,586.4 L399.4,572.2 L404.3,573.7 L409.3,575.1 L414.4,576.4 L419.4,577.6Z" fill="#40f040" stroke="#40f040" stroke-width="0.6"/>
<path d="M394.9,586.4 L389.6,584.7 L384.4,582.8 L379.3,580.9 L374.1,578.8 L379.8,565.1 L384.7,567.0 L389.5,568.9 L394.4,570.6 L399.4,572.2Z" fill="#38ed52" stroke="#38ed52" stroke-width="0.6"/>
<path d="M374.1,578.8 L369.1,576.7 L364.0,574.4 L359.1,572.0 L354.1,569.5 L361.0,556.3 L365.6,558.7 L370.3,560.9 L375.1,563.0 L379.8,565.1Z" fill="#30ea63" stroke="#30ea63" stroke-width="0.6"/>
<path d="M354.1,569.5 L349.3,566.9 L344.4,564.2 L339.7,561.4 L335.0,558.5 L343.0,545.9 L347.4,548.7 L351.9,551.3 L356.4,553.9 L361.0,556.3Z" fill="#30ea63" stroke="#30ea63" stroke-width="0.6"/>
<path d="M335.0,558.5 L330.4,555.5 L325.8,552.3 L321.3,549.1 L316.9,545.8 L326.0,534.0 L330.1,537.1 L334.4,540.1 L338.7,543.1 L343.0,545.9Z" fill="#16cdab" stroke="#16cdab" stroke-width="0.6"/>
<path d="M316.9,545.8 L312.6,542.4 L308.3,538.9 L304.1,535.3 L300.0,531.6 L310.1,520.6 L313.9,524.1 L317.9,527.5 L321.9,530.8 L326.0,534.0Z" fill="#2875ec" stroke="#2875ec" stroke-width="0.6"/>
<path d="M300.0,531.6 L296.0,527.8 L292.0,524.0 L288.2,520.0 L284.4,516.0 L295.4,505.9 L298.9,509.7 L302.6,513.4 L306.3,517.1 L310.1,520.6Z" fill="#3064f0" stroke="#3064f0" stroke-width="0.6"/>
<path d="M284.4,516.0 L280.7,511.9 L277.1,507.7 L273.6,503.4 L270.2,499.1 L282.0,490.0 L285.2,494.1 L288.5,498.1 L291.9,502.1 L295.4,505.9Z" fill="#4446f0" stroke="#4446f0" stroke-width="0.6"/>
<path d="M270.2,499.1 L266.9,494.7 L263.7,490.2 L260.5,485.6 L257.5,481.0 L270.1,473.0 L272.9,477.3 L275.9,481.6 L278.9,485.9 L282.0,490.0Z" fill="#4a3cf0" stroke="#4a3cf0" stroke-width="0.6"/>
<path d="M257.5,481.0 L254.6,476.3 L251.8,471.6 L249.1,466.7 L246.5,461.9 L259.7,455.0 L262.1,459.6 L264.7,464.1 L267.3,468.6 L270.1,473.0Z" fill="#2875ec" stroke="#2875ec" stroke-width="0.6"/>
<path d="M246.5,461.9 L244.0,456.9 L241.6,452.0 L239.3,446.9 L237.2,441.9 L250.9,436.2 L253.0,440.9 L255.1,445.7 L257.3,450.4 L259.7,455.0Z" fill="#5135f0" stroke="#5135f0" stroke-width="0.6"/>
<path d="M237.2,441.9 L235.1,436.7 L233.2,431.6 L231.3,426.4 L229.6,421.1 L243.8,416.6 L245.4,421.6 L247.1,426.5 L249.0,431.3 L250.9,436.2Z" fill="#5d2aef" stroke="#5d2aef" stroke-width="0.6"/>
<path d="M229.6,421.1 L228.0,415.8 L226.5,410.5 L225.1,405.2 L223.9,399.8 L238.4,396.6 L239.6,401.6 L240.9,406.7 L242.3,411.7 L243.8,416.6Z" fill="#5f29ef" stroke="#5f29ef" stroke-width="0.6"/>
<path d="M223.9,399.8 L222.8,394.4 L221.7,389.0 L220.8,383.5 L220.1,378.0 L234.8,376.1 L235.6,381.2 L236.4,386.4 L237.4,391.5 L238.4,396.6Z" fill="#6127ef" stroke="#6127ef" stroke-width="0.6"/>
<path d="M220.1,378.0 L219.4,372.6 L218.9,367.1 L218.4,361.6 L218.1,356.0 L233.0,355.4 L233.3,360.6 L233.7,365.8 L234.2,370.9 L234.8,376.1Z" fill="#6325ef" stroke="#6325ef" stroke-width="0.6"/>
<path d="M218.1,356.0 L217.9,350.5 L217.9,345.0 L217.9,339.5 L218.1,334.0 L233.0,334.6 L232.8,339.8 L232.8,345.0 L232.8,350.2 L233.0,355.4Z" fill="#6524ef" stroke="#6524ef" stroke-width="0.6"/>
<path d="M218.1,334.0 L218.4,328.4 L218.9,322.9 L219.4,317.4 L220.1,312.0 L234.8,313.9 L234.2,319.1 L233.7,324.2 L233.3,329.4 L233.0,334.6Z" fill="#6622ef" stroke="#6622ef" stroke-width="0.6"/>
<path d="M220.1,312.0 L220.8,306.5 L221.7,301.0 L222.8,295.6 L223.9,290.2 L238.4,293.4 L237.4,298.5 L236.4,303.6 L235.6,308.8 L234.8,313.9Z" fill="#6721ef" stroke="#6721ef" stroke-width="0.6"/>
<path d="M223.9,290.2 L225.1,284.8 L226.5,279.5 L228.0,274.2 L229.6,268.9 L243.8,273.4 L242.3,278.3 L240.9,283.3 L239.6,288.4 L238.4,293.4Z" fill="#6920ef" stroke="#6920ef" stroke-width="0.6"/>
<path d="M229.6,268.9 L231.3,263.6 L233.2,258.4 L235.1,253.3 L237.2,248.1 L250.9,253.8 L249.0,258.7 L247.1,263.5 L245.4,268.4 L243.8,273.4Z" fill="#691fef" stroke="#691fef" stroke-width="0.6"/>
<path d="M237.2,248.1 L239.3,243.1 L241.6,238.0 L244.0,233.1 L246.5,228.1 L259.7,235.0 L257.3,239.6 L255.1,244.3 L253.0,249.1 L250.9,253.8Z" fill="#6b1eef" stroke="#6b1eef" stroke-width="0.6"/>
<path d="M686.9,244.3 L689.0,249.1 L691.1,253.8 L693.0,258.7 L694.9,263.5 L680.9,268.6 L679.1,264.1 L677.3,259.5 L675.4,255.1 L673.4,250.6Z" fill="#6b1eef" stroke="#6b1eef" stroke-width="0.6"/>
<path d="M694.9,263.5 L696.6,268.4 L698.2,273.4 L699.7,278.3 L701.1,283.3 L686.7,287.2 L685.4,282.5 L684.0,277.8 L682.5,273.2 L680.9,268.6Z" fill="#691fef" stroke="#691fef" stroke-width="0.6"/>
<path d="M701.1,283.3 L702.4,288.4 L703.6,293.4 L704.6,298.5 L705.6,303.6 L690.9,306.2 L690.0,301.4 L689.0,296.7 L687.9,291.9 L686.7,287.2Z" fill="#6920ef" stroke="#6920ef" stroke-width="0.6"/>
<path d="M705.6,303.6 L706.4,308.8 L707.2,313.9 L707.8,319.1 L708.3,324.2 L693.5,325.5 L693.0,320.7 L692.4,315.8 L691.7,311.0 L690.9,306.2Z" fill="#6721ef" stroke="#6721ef" stroke-width="0.6"/>
<path d="M708.3,324.2 L708.7,329.4 L709.0,334.6 L709.2,339.8 L709.2,345.0 L694.3,345.0 L694.3,340.1 L694.1,335.3 L693.9,330.4 L693.5,325.5Z" fill="#6622ef" stroke="#6622ef" stroke-width="0.6"/>
<path d="M709.2,345.0 L709.2,350.2 L709.0,355.4 L708.7,360.6 L708.3,365.8 L693.5,364.5 L693.9,359.6 L694.1,354.7 L694.3,349.9 L694.3,345.0Z" fill="#6524ef" stroke="#6524ef" stroke-width="0.6"/>
<path d="M708.3,365.8 L707.8,370.9 L707.2,376.1 L706.4,381.2 L705.6,386.4 L690.9,383.8 L691.7,379.0 L692.4,374.2 L693.0,369.3 L693.5,364.5Z" fill="#6325ef" stroke="#6325ef" stroke-width="0.6"/>
<path d="M705.6,386.4 L704.6,391.5 L703.6,396.6 L702.4,401.6 L701.1,406.7 L686.7,402.8 L687.9,398.1 L689.0,393.3 L690.0,388.6 L690.9,383.8Z" fill="#6127ef" stroke="#6127ef" stroke-width="0.6"/>
<path d="M701.1,406.7 L699.7,411.7 L698.2,416.6 L696.6,421.6 L694.9,426.5 L680.9,421.4 L682.5,416.8 L684.0,412.2 L685.4,407.5 L686.7,402.8Z" fill="#6028ef" stroke="#6028ef" stroke-width="0.6"/>
<path d="M694.9,426.5 L693.0,431.3 L691.1,436.2 L689.0,440.9 L686.9,445.7 L673.4,439.4 L675.4,434.9 L677.3,430.5 L679.1,425.9 L680.9,421.4Z" fill="#5e2aef" stroke="#5e2aef" stroke-width="0.6"/>
<path d="M686.9,445.7 L684.7,450.4 L682.3,455.0 L679.9,459.6 L677.3,464.1 L664.4,456.7 L666.8,452.4 L669.1,448.1 L671.3,443.8 L673.4,439.4Z" fill="#5c2bf0" stroke="#5c2bf0" stroke-width="0.6"/>
<path d="M677.3,464.1 L674.7,468.6 L671.9,473.0 L669.1,477.3 L666.1,481.6 L653.9,473.1 L656.7,469.1 L659.4,465.0 L661.9,460.9 L664.4,456.7Z" fill="#4446f0" stroke="#4446f0" stroke-width="0.6"/>
<path d="M666.1,481.6 L663.1,485.9 L660.0,490.0 L656.8,494.1 L653.5,498.1 L642.1,488.6 L645.2,484.8 L648.2,481.0 L651.1,477.1 L653.9,473.1Z" fill="#2875ec" stroke="#2875ec" stroke-width="0.6"/>
<path d="M653.5,498.1 L650.1,502.1 L646.6,505.9 L643.1,509.7 L639.4,513.4 L628.9,502.9 L632.3,499.4 L635.7,495.9 L638.9,492.3 L642.1,488.6Z" fill="#16cdab" stroke="#16cdab" stroke-width="0.6"/>
<path d="M639.4,513.4 L635.7,517.1 L631.9,520.6 L628.1,524.1 L624.1,527.5 L614.6,516.1 L618.3,512.9 L621.9,509.7 L625.4,506.3 L628.9,502.9Z" fill="#1b9cd4" stroke="#1b9cd4" stroke-width="0.6"/>
<path d="M624.1,527.5 L620.1,530.8 L616.0,534.0 L611.9,537.1 L607.6,540.1 L599.1,527.9 L603.1,525.1 L607.0,522.2 L610.8,519.2 L614.6,516.1Z" fill="#16cdab" stroke="#16cdab" stroke-width="0.6"/>
<path d="M607.6,540.1 L603.3,543.1 L599.0,545.9 L594.6,548.7 L590.1,551.3 L582.7,538.4 L586.9,535.9 L591.0,533.4 L595.1,530.7 L599.1,527.9Z" fill="#20e386" stroke="#20e386" stroke-width="0.6"/>
<path d="M590.1,551.3 L585.6,553.9 L581.0,556.3 L576.4,558.7 L571.7,560.9 L565.4,547.4 L569.8,545.3 L574.1,543.1 L578.4,540.8 L582.7,538.4Z" fill="#40f040" stroke="#40f040" stroke-width="0.6"/>
<path d="M571.7,560.9 L566.9,563.0 L562.2,565.1 L557.3,567.0 L552.5,568.9 L547.4,554.9 L551.9,553.1 L556.5,551.3 L560.9,549.4 L565.4,547.4Z" fill="#40f040" stroke="#40f040" stroke-width="0.6"/>
<path d="M552.5,568.9 L547.6,570.6 L542.6,572.2 L537.7,573.7 L532.7,575.1 L528.8,560.7 L533.5,559.4 L538.2,558.0 L542.8,556.5 L547.4,554.9Z" fill="#40f040" stroke="#40f040" stroke-width="0.6"/>
<path d="M532.7,575.1 L527.6,576.4 L522.6,577.6 L517.5,578.6 L512.4,579.6 L509.8,564.9 L514.6,564.0 L519.3,563.0 L524.1,561.9 L528.8,560.7Z" fill="#cdaa15" stroke="#cdaa15" stroke-width="0.6"/>
<path d="M512.4,579.6 L507.2,580.4 L502.1,581.2 L496.9,581.8 L491.8,582.3 L490.5,567.5 L495.3,567.0 L500.2,566.4 L505.0,565.7 L509.8,564.9Z" fill="#ff483c" stroke="#ff483c" stroke-width="0.6"/>
<path d="M491.8,582.3 L486.6,582.7 L481.4,583.0 L476.2,583.2 L471.0,583.2 L471.0,568.3 L475.9,568.3 L480.7,568.1 L485.6,567.9 L490.5,567.5Z" fill="#ff3559" stroke="#ff3559" stroke-width="0.6"/>
<path d="M471.0,583.2 L465.8,583.2 L460.6,583.0 L455.4,582.7 L450.2,582.3 L451.5,567.5 L456.4,567.9 L461.3,568.1 L466.1,568.3 L471.0,568.3Z" fill="#ff3559" stroke="#ff3559" stroke-width="0.6"/>
<path d="M450.2,582.3 L445.1,581.8 L439.9,581.2 L434.8,580.4 L429.6,579.6 L432.2,564.9 L437.0,565.7 L441.8,566.4 L446.7,567.0 L451.5,567.5Z" fill="#ff8018" stroke="#ff8018" stroke-width="0.6"/>
<path d="M429.6,579.6 L424.5,578.6 L419.4,577.6 L414.4,576.4 L409.3,575.1 L413.2,560.7 L417.9,561.9 L422.7,563.0 L427.4,564.0 L432.2,564.9Z" fill="#40f040" stroke="#40f040" stroke-width="0.6"/>
<path d="M409.3,575.1 L404.3,573.7 L399.4,572.2 L394.4,570.6 L389.5,568.9 L394.6,554.9 L399.2,556.5 L403.8,558.0 L408.5,559.4 L413.2,560.7Z" fill="#40f040" stroke="#40f040" stroke-width="0.6"/>
<path d="M389.5,568.9 L384.7,567.0 L379.8,565.1 L375.1,563.0 L370.3,560.9 L376.6,547.4 L381.1,549.4 L385.5,551.3 L390.1,553.1 L394.6,554.9Z" fill="#20e386" stroke="#20e386" stroke-width="0.6"/>
<path d="M370.3,560.9 L365.6,558.7 L361.0,556.3 L356.4,553.9 L351.9,551.3 L359.3,538.4 L363.6,540.8 L367.9,543.1 L372.2,545.3 L376.6,547.4Z" fill="#17d6a2" stroke="#17d6a2" stroke-width="0.6"/>
<path d="M351.9,551.3 L347.4,548.7 L343.0,545.9 L338.7,543.1 L334.4,540.1 L342.9,527.9 L346.9,530.7 L351.0,533.4 L355.1,535.9 L359.3,538.4Z" fill="#15babe" stroke="#15babe" stroke-width="0.6"/>
<path d="M334.4,540.1 L330.1,537.1 L326.0,534.0 L321.9,530.8 L317.9,527.5 L327.4,516.1 L331.2,519.2 L335.0,522.2 L338.9,525.1 L342.9,527.9Z" fill="#1b9cd4" stroke="#1b9cd4" stroke-width="0.6"/>
<path d="M317.9,527.5 L313.9,524.1 L310.1,520.6 L306.3,517.1 L302.6,513.4 L313.1,502.9 L316.6,506.3 L320.1,509.7 L323.7,512.9 L327.4,516.1Z" fill="#2d69f0" stroke="#2d69f0" stroke-width="0.6"/>
<path d="M302.6,513.4 L298.9,509.7 L295.4,505.9 L291.9,502.1 L288.5,498.1 L299.9,488.6 L303.1,492.3 L306.3,495.9 L309.7,499.4 L313.1,502.9Z" fill="#16cdab" stroke="#16cdab" stroke-width="0.6"/>
<path d="M288.5,498.1 L285.2,494.1 L282.0,490.0 L278.9,485.9 L275.9,481.6 L288.1,473.1 L290.9,477.1 L293.8,481.0 L296.8,484.8 L299.9,488.6Z" fill="#2875ec" stroke="#2875ec" stroke-width="0.6"/>
<path d="M275.9,481.6 L272.9,477.3 L270.1,473.0 L267.3,468.6 L264.7,464.1 L277.6,456.7 L280.1,460.9 L282.6,465.0 L285.3,469.1 L288.1,473.1Z" fill="#4a3cf0" stroke="#4a3cf0" stroke-width="0.6"/>
<path d="M264.7,464.1 L262.1,459.6 L259.7,455.0 L257.3,450.4 L255.1,445.7 L268.6,439.4 L270.7,443.8 L272.9,448.1 L275.2,452.4 L277.6,456.7Z" fill="#5135f0" stroke="#5135f0" stroke-width="0.6"/>
<path d="M255.1,445.7 L253.0,440.9 L250.9,436.2 L249.0,431.3 L247.1,426.5 L261.1,421.4 L262.9,425.9 L264.7,430.5 L266.6,434.9 L268.6,439.4Z" fill="#5e2aef" stroke="#5e2aef" stroke-width="0.6"/>
<path d="M247.1,426.5 L245.4,421.6 L243.8,416.6 L242.3,411.7 L240.9,406.7 L255.3,402.8 L256.6,407.5 L258.0,412.2 L259.5,416.8 L261.1,421.4Z" fill="#6028ef" stroke="#6028ef" stroke-width="0.6"/>
<path d="M240.9,406.7 L239.6,401.6 L238.4,396.6 L237.4,391.5 L236.4,386.4 L251.1,383.8 L252.0,388.6 L253.0,393.3 L254.1,398.1 L255.3,402.8Z" fill="#6127ef" stroke="#6127ef" stroke-width="0.6"/>
<path d="M236.4,386.4 L235.6,381.2 L234.8,376.1 L234.2,370.9 L233.7,365.8 L248.5,364.5 L249.0,369.3 L249.6,374.2 L250.3,379.0 L251.1,383.8Z" fill="#6325ef" stroke="#6325ef" stroke-width="0.6"/>
<path d="M233.7,365.8 L233.3,360.6 L233.0,355.4 L232.8,350.2 L232.8,345.0 L247.7,345.0 L247.7,349.9 L247.9,354.7 L248.1,359.6 L248.5,364.5Z" fill="#6524ef" stroke="#6524ef" stroke-width="0.6"/>
<path d="M232.8,345.0 L232.8,339.8 L233.0,334.6 L233.3,329.4 L233.7,324.2 L248.5,325.5 L248.1,330.4 L247.9,335.3 L247.7,340.1 L247.7,345.0Z" fill="#6622ef" stroke="#6622ef" stroke-width="0.6"/>
<path d="M233.7,324.2 L234.2,319.1 L234.8,313.9 L235.6,308.8 L236.4,303.6 L251.1,306.2 L250.3,311.0 L249.6,315.8 L249.0,320.7 L248.5,325.5Z" fill="#6721ef" stroke="#6721ef" stroke-width="0.6"/>
<path d="M236.4,303.6 L237.4,298.5 L238.4,293.4 L239.6,288.4 L240.9,283.3 L255.3,287.2 L254.1,291.9 L253.0,296.7 L252.0,301.4 L251.1,306.2Z" fill="#6920ef" stroke="#6920ef" stroke-width="0.6"/>
<path d="M240.9,283.3 L242.3,278.3 L243.8,273.4 L245.4,268.4 L247.1,263.5 L261.1,268.6 L259.5,273.2 L258.0,277.8 L256.6,282.5 L255.3,287.2Z" fill="#691fef" stroke="#691fef" stroke-width="0.6"/>
<path d="M247.1,263.5 L249.0,258.7 L250.9,253.8 L253.0,249.1 L255.1,244.3 L268.6,250.6 L266.6,255.1 L264.7,259.5 L262.9,264.1 L261.1,268.6Z" fill="#6b1eef" stroke="#6b1eef" stroke-width="0.6"/>
<path d="M677.3,259.5 L679.1,264.1 L680.9,268.6 L682.5,273.2 L684.0,277.8 L669.8,282.3 L668.4,278.0 L666.9,273.7 L665.3,269.5 L663.6,265.2Z" fill="#6b1eef" stroke="#6b1eef" stroke-width="0.6"/>
<path d="M684.0,277.8 L685.4,282.5 L686.7,287.2 L687.9,291.9 L689.0,296.7 L674.5,299.9 L673.5,295.5 L672.3,291.1 L671.1,286.7 L669.8,282.3Z" fill="#6a1fef" stroke="#6a1fef" stroke-width="0.6"/>
<path d="M689.0,296.7 L690.0,301.4 L690.9,306.2 L691.7,311.0 L692.4,315.8 L677.7,317.8 L677.0,313.3 L676.3,308.8 L675.4,304.3 L674.5,299.9Z" fill="#6920ef" stroke="#6920ef" stroke-width="0.6"/>
<path d="M692.4,315.8 L693.0,320.7 L693.5,325.5 L693.9,330.4 L694.1,335.3 L679.2,335.9 L679.0,331.4 L678.7,326.8 L678.2,322.3 L677.7,317.8Z" fill="#6821ef" stroke="#6821ef" stroke-width="0.6"/>
<path d="M694.1,335.3 L694.3,340.1 L694.3,345.0 L694.3,349.9 L694.1,354.7 L679.2,354.1 L679.4,349.5 L679.4,345.0 L679.4,340.5 L679.2,335.9Z" fill="#6622ef" stroke="#6622ef" stroke-width="0.6"/>
<path d="M694.1,354.7 L693.9,359.6 L693.5,364.5 L693.0,369.3 L692.4,374.2 L677.7,372.2 L678.2,367.7 L678.7,363.2 L679.0,358.6 L679.2,354.1Z" fill="#6523ef" stroke="#6523ef" stroke-width="0.6"/>
<path d="M692.4,374.2 L691.7,379.0 L690.9,383.8 L690.0,388.6 L689.0,393.3 L674.5,390.1 L675.4,385.7 L676.3,381.2 L677.0,376.7 L677.7,372.2Z" fill="#6425ef" stroke="#6425ef" stroke-width="0.6"/>
<path d="M689.0,393.3 L687.9,398.1 L686.7,402.8 L685.4,407.5 L684.0,412.2 L669.8,407.7 L671.1,403.3 L672.3,398.9 L673.5,394.5 L674.5,390.1Z" fill="#6226ef" stroke="#6226ef" stroke-width="0.6"/>
<path d="M684.0,412.2 L682.5,416.8 L680.9,421.4 L679.1,425.9 L677.3,430.5 L663.6,424.8 L665.3,420.5 L666.9,416.3 L668.4,412.0 L669.8,407.7Z" fill="#6028ef" stroke="#6028ef" stroke-width="0.6"/>
<path d="M677.3,430.5 L675.4,434.9 L673.4,439.4 L671.3,443.8 L669.1,448.1 L655.9,441.2 L657.9,437.2 L659.9,433.1 L661.8,429.0 L663.6,424.8Z" fill="#5f29ef" stroke="#5f29ef" stroke-width="0.6"/>
<path d="M669.1,448.1 L666.8,452.4 L664.4,456.7 L661.9,460.9 L659.4,465.0 L646.8,457.0 L649.2,453.1 L651.5,449.2 L653.7,445.3 L655.9,441.2Z" fill="#5d2bef" stroke="#5d2bef" stroke-width="0.6"/>
<path d="M659.4,465.0 L656.7,469.1 L653.9,473.1 L651.1,477.1 L648.2,481.0 L636.4,471.9 L639.1,468.3 L641.7,464.6 L644.3,460.8 L646.8,457.0Z" fill="#5c2bf0" stroke="#5c2bf0" stroke-width="0.6"/>
<path d="M648.2,481.0 L645.2,484.8 L642.1,488.6 L638.9,492.3 L635.7,495.9 L624.7,485.8 L627.7,482.4 L630.7,479.0 L633.6,475.5 L636.4,471.9Z" fill="#4a3cf0" stroke="#4a3cf0" stroke-width="0.6"/>
<path d="M635.7,495.9 L632.3,499.4 L628.9,502.9 L625.4,506.3 L621.9,509.7 L611.8,498.7 L615.1,495.6 L618.4,492.4 L621.6,489.1 L624.7,485.8Z" fill="#16cdab" stroke="#16cdab" stroke-width="0.6"/>
<path d="M621.9,509.7 L618.3,512.9 L614.6,516.1 L610.8,519.2 L607.0,522.2 L597.9,510.4 L601.5,507.6 L605.0,504.7 L608.4,501.7 L611.8,498.7Z" fill="#18e098" stroke="#18e098" stroke-width="0.6"/>
<path d="M607.0,522.2 L603.1,525.1 L599.1,527.9 L595.1,530.7 L591.0,533.4 L583.0,520.8 L586.8,518.3 L590.6,515.7 L594.3,513.1 L597.9,510.4Z" fill="#30ea63" stroke="#30ea63" stroke-width="0.6"/>
<path d="M591.0,533.4 L586.9,535.9 L582.7,538.4 L578.4,540.8 L574.1,543.1 L567.2,529.9 L571.3,527.7 L575.2,525.5 L579.1,523.2 L583.0,520.8Z" fill="#40f040" stroke="#40f040" stroke-width="0.6"/>
<path d="M574.1,543.1 L569.8,545.3 L565.4,547.4 L560.9,549.4 L556.5,551.3 L550.8,537.6 L555.0,535.8 L559.1,533.9 L563.2,531.9 L567.2,529.9Z" fill="#40f040" stroke="#40f040" stroke-width="0.6"/>
<path d="M556.5,551.3 L551.9,553.1 L547.4,554.9 L542.8,556.5 L538.2,558.0 L533.7,543.8 L538.0,542.4 L542.3,540.9 L546.5,539.3 L550.8,537.6Z" fill="#40f040" stroke="#40f040" stroke-width="0.6"/>
<path d="M538.2,558.0 L533.5,559.4 L528.8,560.7 L524.1,561.9 L519.3,563.0 L516.1,548.5 L520.5,547.5 L524.9,546.3 L529.3,545.1 L533.7,543.8Z" fill="#40f040" stroke="#40f040" stroke-width="0.6"/>
<path d="M519.3,563.0 L514.6,564.0 L509.8,564.9 L505.0,565.7 L500.2,566.4 L498.2,551.7 L502.7,551.0 L507.2,550.3 L511.7,549.4 L516.1,548.5Z" fill="#40f040" stroke="#40f040" stroke-width="0.6"/>
<path d="M500.2,566.4 L495.3,567.0 L490.5,567.5 L485.6,567.9 L480.7,568.1 L480.1,553.2 L484.6,553.0 L489.2,552.7 L493.7,552.2 L498.2,551.7Z" fill="#40f040" stroke="#40f040" stroke-width="0.6"/>
<path d="M480.7,568.1 L475.9,568.3 L471.0,568.3 L466.1,568.3 L461.3,568.1 L461.9,553.2 L466.5,553.4 L471.0,553.4 L475.5,553.4 L480.1,553.2Z" fill="#40f040" stroke="#40f040" stroke-width="0.6"/>
<path d="M461.3,568.1 L456.4,567.9 L451.5,567.5 L446.7,567.0 L441.8,566.4 L443.8,551.7 L448.3,552.2 L452.8,552.7 L457.4,553.0 L461.9,553.2Z" fill="#40f040" stroke="#40f040" stroke-width="0.6"/>
<path d="M441.8,566.4 L437.0,565.7 L432.2,564.9 L427.4,564.0 L422.7,563.0 L425.9,548.5 L430.3,549.4 L434.8,550.3 L439.3,551.0 L443.8,551.7Z" fill="#40f040" stroke="#40f040" stroke-width="0.6"/>
<path d="M422.7,563.0 L417.9,561.9 L413.2,560.7 L408.5,559.4 L403.8,558.0 L408.3,543.8 L412.7,545.1 L417.1,546.3 L421.5,547.5 L425.9,548.5Z" fill="#40f040" stroke="#40f040" stroke-width="0.6"/>
<path d="M403.8,558.0 L399.2,556.5 L394.6,554.9 L390.1,553.1 L385.5,551.3 L391.2,537.6 L395.5,539.3 L399.7,540.9 L404.0,542.4 L408.3,543.8Z" fill="#30ea63" stroke="#30ea63" stroke-width="0.6"/>
<path d="M385.5,551.3 L381.1,549.4 L376.6,547.4 L372.2,545.3 L367.9,543.1 L374.8,529.9 L378.8,531.9 L382.9,533.9 L387.0,535.8 L391.2,537.6Z" fill="#28e675" stroke="#28e675" stroke-width="0.6"/>
<path d="M367.9,543.1 L363.6,540.8 L359.3,538.4 L355.1,535.9 L351.0,533.4 L359.0,520.8 L362.9,523.2 L366.8,525.5 L370.7,527.7 L374.8,529.9Z" fill="#28e675" stroke="#28e675" stroke-width="0.6"/>
<path d="M351.0,533.4 L346.9,530.7 L342.9,527.9 L338.9,525.1 L335.0,522.2 L344.1,510.4 L347.7,513.1 L351.4,515.7 L355.2,518.3 L359.0,520.8Z" fill="#20e386" stroke="#20e386" stroke-width="0.6"/>
<path d="M335.0,522.2 L331.2,519.2 L327.4,516.1 L323.7,512.9 L320.1,509.7 L330.2,498.7 L333.6,501.7 L337.0,504.7 L340.5,507.6 L344.1,510.4Z" fill="#17d6a2" stroke="#17d6a2" stroke-width="0.6"/>
<path d="M320.1,509.7 L316.6,506.3 L313.1,502.9 L309.7,499.4 L306.3,495.9 L317.3,485.8 L320.4,489.1 L323.6,492.4 L326.9,495.6 L330.2,498.7Z" fill="#1f8fdc" stroke="#1f8fdc" stroke-width="0.6"/>
<path d="M306.3,495.9 L303.1,492.3 L299.9,488.6 L296.8,484.8 L293.8,481.0 L305.6,471.9 L308.4,475.5 L311.3,479.0 L314.3,482.4 L317.3,485.8Z" fill="#4a3cf0" stroke="#4a3cf0" stroke-width="0.6"/>
<path d="M293.8,481.0 L290.9,477.1 L288.1,473.1 L285.3,469.1 L282.6,465.0 L295.2,457.0 L297.7,460.8 L300.3,464.6 L302.9,468.3 L305.6,471.9Z" fill="#5c2bf0" stroke="#5c2bf0" stroke-width="0.6"/>
<path d="M282.6,465.0 L280.1,460.9 L277.6,456.7 L275.2,452.4 L272.9,448.1 L286.1,441.2 L288.3,445.3 L290.5,449.2 L292.8,453.1 L295.2,457.0Z" fill="#5d2bef" stroke="#5d2bef" stroke-width="0.6"/>
<path d="M272.9,448.1 L270.7,443.8 L268.6,439.4 L266.6,434.9 L264.7,430.5 L278.4,424.8 L280.2,429.0 L282.1,433.1 L284.1,437.2 L286.1,441.2Z" fill="#5f29ef" stroke="#5f29ef" stroke-width="0.6"/>
<path d="M264.7,430.5 L262.9,425.9 L261.1,421.4 L259.5,416.8 L258.0,412.2 L272.2,407.7 L273.6,412.0 L275.1,416.3 L276.7,420.5 L278.4,424.8Z" fill="#6028ef" stroke="#6028ef" stroke-width="0.6"/>
<path d="M258.0,412.2 L256.6,407.5 L255.3,402.8 L254.1,398.1 L253.0,393.3 L267.5,390.1 L268.5,394.5 L269.7,398.9 L270.9,403.3 L272.2,407.7Z" fill="#6226ef" stroke="#6226ef" stroke-width="0.6"/>
<path d="M253.0,393.3 L252.0,388.6 L251.1,383.8 L250.3,379.0 L249.6,374.2 L264.3,372.2 L265.0,376.7 L265.7,381.2 L266.6,385.7 L267.5,390.1Z" fill="#6425ef" stroke="#6425ef" stroke-width="0.6"/>
<path d="M249.6,374.2 L249.0,369.3 L248.5,364.5 L248.1,359.6 L247.9,354.7 L262.8,354.1 L263.0,358.6 L263.3,363.2 L263.8,367.7 L264.3,372.2Z" fill="#6523ef" stroke="#6523ef" stroke-width="0.6"/>
<path d="M247.9,354.7 L247.7,349.9 L247.7,345.0 L247.7,340.1 L247.9,335.3 L262.8,335.9 L262.6,340.5 L262.6,345.0 L262.6,349.5 L262.8,354.1Z" fill="#6622ef" stroke="#6622ef" stroke-width="0.6"/>
<path d="M247.9,335.3 L248.1,330.4 L248.5,325.5 L249.0,320.7 L249.6,315.8 L264.3,317.8 L263.8,322.3 L263.3,326.8 L263.0,331.4 L262.8,335.9Z" fill="#6821ef" stroke="#6821ef" stroke-width="0.6"/>
<path d="M249.6,315.8 L250.3,311.0 L251.1,306.2 L252.0,301.4 L253.0,296.7 L267.5,299.9 L266.6,304.3 L265.7,308.8 L265.0,313.3 L264.3,317.8Z" fill="#6920ef" stroke="#6920ef" stroke-width="0.6"/>
<path d="M253.0,296.7 L254.1,291.9 L255.3,287.2 L256.6,282.5 L258.0,277.8 L272.2,282.3 L270.9,286.7 L269.7,291.1 L268.5,295.5 L267.5,299.9Z" fill="#6a1fef" stroke="#6a1fef" stroke-width="0.6"/>
<path d="M258.0,277.8 L259.5,273.2 L261.1,268.6 L262.9,264.1 L264.7,259.5 L278.4,265.2 L276.7,269.5 L275.1,273.7 L273.6,278.0 L272.2,282.3Z" fill="#6b1eef" stroke="#6b1eef" stroke-width="0.6"/>
<path d="M672.3,291.1 L673.5,295.5 L674.5,299.9 L675.4,304.3 L676.3,308.8 L661.6,311.4 L660.8,307.2 L660.0,303.1 L659.0,299.0 L658.0,294.9Z" fill="#6a1fef" stroke="#6a1fef" stroke-width="0.6"/>
<path d="M676.3,308.8 L677.0,313.3 L677.7,317.8 L678.2,322.3 L678.7,326.8 L663.8,328.1 L663.4,323.9 L662.9,319.7 L662.3,315.6 L661.6,311.4Z" fill="#6920ef" stroke="#6920ef" stroke-width="0.6"/>
<path d="M678.7,326.8 L679.0,331.4 L679.2,335.9 L679.4,340.5 L679.4,345.0 L664.6,345.0 L664.5,340.8 L664.4,336.6 L664.1,332.3 L663.8,328.1Z" fill="#6821ef" stroke="#6821ef" stroke-width="0.6"/>
<path d="M679.4,345.0 L679.4,349.5 L679.2,354.1 L679.0,358.6 L678.7,363.2 L663.8,361.9 L664.1,357.7 L664.4,353.4 L664.5,349.2 L664.6,345.0Z" fill="#6622ef" stroke="#6622ef" stroke-width="0.6"/>
<path d="M678.7,363.2 L678.2,367.7 L677.7,372.2 L677.0,376.7 L676.3,381.2 L661.6,378.6 L662.3,374.4 L662.9,370.3 L663.4,366.1 L663.8,361.9Z" fill="#6523ef" stroke="#6523ef" stroke-width="0.6"/>
<path d="M676.3,381.2 L675.4,385.7 L674.5,390.1 L673.5,394.5 L672.3,398.9 L658.0,395.1 L659.0,391.0 L660.0,386.9 L660.8,382.8 L661.6,378.6Z" fill="#6424ef" stroke="#6424ef" stroke-width="0.6"/>
<path d="M672.3,398.9 L671.1,403.3 L669.8,407.7 L668.4,412.0 L666.9,416.3 L652.9,411.2 L654.3,407.2 L655.6,403.2 L656.8,399.2 L658.0,395.1Z" fill="#6226ef" stroke="#6226ef" stroke-width="0.6"/>
<path d="M666.9,416.3 L665.3,420.5 L663.6,424.8 L661.8,429.0 L659.9,433.1 L646.4,426.8 L648.2,423.0 L649.8,419.1 L651.4,415.2 L652.9,411.2Z" fill="#6127ef" stroke="#6127ef" stroke-width="0.6"/>
<path d="M659.9,433.1 L657.9,437.2 L655.9,441.2 L653.7,445.3 L651.5,449.2 L638.6,441.8 L640.7,438.1 L642.7,434.4 L644.6,430.6 L646.4,426.8Z" fill="#5f28ef" stroke="#5f28ef" stroke-width="0.6"/>
<path d="M651.5,449.2 L649.2,453.1 L646.8,457.0 L644.3,460.8 L641.7,464.6 L629.6,456.0 L631.9,452.5 L634.2,449.0 L636.5,445.4 L638.6,441.8Z" fill="#5e2aef" stroke="#5e2aef" stroke-width="0.6"/>
<path d="M641.7,464.6 L639.1,468.3 L636.4,471.9 L633.6,475.5 L630.7,479.0 L619.3,469.4 L622.0,466.2 L624.6,462.8 L627.1,459.5 L629.6,456.0Z" fill="#5c2bf0" stroke="#5c2bf0" stroke-width="0.6"/>
<path d="M630.7,479.0 L627.7,482.4 L624.7,485.8 L621.6,489.1 L618.4,492.4 L607.9,481.9 L610.8,478.8 L613.7,475.8 L616.5,472.6 L619.3,469.4Z" fill="#6028ef" stroke="#6028ef" stroke-width="0.6"/>
<path d="M618.4,492.4 L615.1,495.6 L611.8,498.7 L608.4,501.7 L605.0,504.7 L595.4,493.3 L598.6,490.5 L601.8,487.7 L604.8,484.8 L607.9,481.9Z" fill="#592ef0" stroke="#592ef0" stroke-width="0.6"/>
<path d="M605.0,504.7 L601.5,507.6 L597.9,510.4 L594.3,513.1 L590.6,515.7 L582.0,503.6 L585.5,501.1 L588.8,498.6 L592.2,496.0 L595.4,493.3Z" fill="#2875ec" stroke="#2875ec" stroke-width="0.6"/>
<path d="M590.6,515.7 L586.8,518.3 L583.0,520.8 L579.1,523.2 L575.2,525.5 L567.8,512.6 L571.4,510.5 L575.0,508.2 L578.5,505.9 L582.0,503.6Z" fill="#2875ec" stroke="#2875ec" stroke-width="0.6"/>
<path d="M575.2,525.5 L571.3,527.7 L567.2,529.9 L563.2,531.9 L559.1,533.9 L552.8,520.4 L556.6,518.6 L560.4,516.7 L564.1,514.7 L567.8,512.6Z" fill="#1f8fdc" stroke="#1f8fdc" stroke-width="0.6"/>
<path d="M559.1,533.9 L555.0,535.8 L550.8,537.6 L546.5,539.3 L542.3,540.9 L537.2,526.9 L541.2,525.4 L545.1,523.8 L549.0,522.2 L552.8,520.4Z" fill="#2ce86c" stroke="#2ce86c" stroke-width="0.6"/>
<path d="M542.3,540.9 L538.0,542.4 L533.7,543.8 L529.3,545.1 L524.9,546.3 L521.1,532.0 L525.2,530.8 L529.2,529.6 L533.2,528.3 L537.2,526.9Z" fill="#66e830" stroke="#66e830" stroke-width="0.6"/>
<path d="M524.9,546.3 L520.5,547.5 L516.1,548.5 L511.7,549.4 L507.2,550.3 L504.6,535.6 L508.8,534.8 L512.9,534.0 L517.0,533.0 L521.1,532.0Z" fill="#8ce020" stroke="#8ce020" stroke-width="0.6"/>
<path d="M507.2,550.3 L502.7,551.0 L498.2,551.7 L493.7,552.2 L489.2,552.7 L487.9,537.8 L492.1,537.4 L496.3,536.9 L500.4,536.3 L504.6,535.6Z" fill="#8ce020" stroke="#8ce020" stroke-width="0.6"/>
<path d="M489.2,552.7 L484.6,553.0 L480.1,553.2 L475.5,553.4 L471.0,553.4 L471.0,538.6 L475.2,538.5 L479.4,538.4 L483.7,538.1 L487.9,537.8Z" fill="#8ce020" stroke="#8ce020" stroke-width="0.6"/>
<path d="M471.0,553.4 L466.5,553.4 L461.9,553.2 L457.4,553.0 L452.8,552.7 L454.1,537.8 L458.3,538.1 L462.6,538.4 L466.8,538.5 L471.0,538.6Z" fill="#8ce020" stroke="#8ce020" stroke-width="0.6"/>
<path d="M452.8,552.7 L448.3,552.2 L443.8,551.7 L439.3,551.0 L434.8,550.3 L437.4,535.6 L441.6,536.3 L445.7,536.9 L449.9,537.4 L454.1,537.8Z" fill="#8ce020" stroke="#8ce020" stroke-width="0.6"/>
<path d="M434.8,550.3 L430.3,549.4 L425.9,548.5 L421.5,547.5 L417.1,546.3 L420.9,532.0 L425.0,533.0 L429.1,534.0 L433.2,534.8 L437.4,535.6Z" fill="#8ce020" stroke="#8ce020" stroke-width="0.6"/>
<path d="M417.1,546.3 L412.7,545.1 L408.3,543.8 L404.0,542.4 L399.7,540.9 L404.8,526.9 L408.8,528.3 L412.8,529.6 L416.8,530.8 L420.9,532.0Z" fill="#66e830" stroke="#66e830" stroke-width="0.6"/>
<path d="M399.7,540.9 L395.5,539.3 L391.2,537.6 L387.0,535.8 L382.9,533.9 L389.2,520.4 L393.0,522.2 L396.9,523.8 L400.8,525.4 L404.8,526.9Z" fill="#28e675" stroke="#28e675" stroke-width="0.6"/>
<path d="M382.9,533.9 L378.8,531.9 L374.8,529.9 L370.7,527.7 L366.8,525.5 L374.2,512.6 L377.9,514.7 L381.6,516.7 L385.4,518.6 L389.2,520.4Z" fill="#20e386" stroke="#20e386" stroke-width="0.6"/>
<path d="M366.8,525.5 L362.9,523.2 L359.0,520.8 L355.2,518.3 L351.4,515.7 L360.0,503.6 L363.5,505.9 L367.0,508.2 L370.6,510.5 L374.2,512.6Z" fill="#2875ec" stroke="#2875ec" stroke-width="0.6"/>
<path d="M351.4,515.7 L347.7,513.1 L344.1,510.4 L340.5,507.6 L337.0,504.7 L346.6,493.3 L349.8,496.0 L353.2,498.6 L356.5,501.1 L360.0,503.6Z" fill="#1b9cd4" stroke="#1b9cd4" stroke-width="0.6"/>
<path d="M337.0,504.7 L333.6,501.7 L330.2,498.7 L326.9,495.6 L323.6,492.4 L334.1,481.9 L337.2,484.8 L340.2,487.7 L343.4,490.5 L346.6,493.3Z" fill="#5135f0" stroke="#5135f0" stroke-width="0.6"/>
<path d="M323.6,492.4 L320.4,489.1 L317.3,485.8 L314.3,482.4 L311.3,479.0 L322.7,469.4 L325.5,472.6 L328.3,475.8 L331.2,478.8 L334.1,481.9Z" fill="#592ef0" stroke="#592ef0" stroke-width="0.6"/>
<path d="M311.3,479.0 L308.4,475.5 L305.6,471.9 L302.9,468.3 L300.3,464.6 L312.4,456.0 L314.9,459.5 L317.4,462.8 L320.0,466.2 L322.7,469.4Z" fill="#5c2bf0" stroke="#5c2bf0" stroke-width="0.6"/>
<path d="M300.3,464.6 L297.7,460.8 L295.2,457.0 L292.8,453.1 L290.5,449.2 L303.4,441.8 L305.5,445.4 L307.8,449.0 L310.1,452.5 L312.4,456.0Z" fill="#5e2aef" stroke="#5e2aef" stroke-width="0.6"/>
<path d="M290.5,449.2 L288.3,445.3 L286.1,441.2 L284.1,437.2 L282.1,433.1 L295.6,426.8 L297.4,430.6 L299.3,434.4 L301.3,438.1 L303.4,441.8Z" fill="#5f28ef" stroke="#5f28ef" stroke-width="0.6"/>
<path d="M282.1,433.1 L280.2,429.0 L278.4,424.8 L276.7,420.5 L275.1,416.3 L289.1,411.2 L290.6,415.2 L292.2,419.1 L293.8,423.0 L295.6,426.8Z" fill="#6127ef" stroke="#6127ef" stroke-width="0.6"/>
<path d="M275.1,416.3 L273.6,412.0 L272.2,407.7 L270.9,403.3 L269.7,398.9 L284.0,395.1 L285.2,399.2 L286.4,403.2 L287.7,407.2 L289.1,411.2Z" fill="#6226ef" stroke="#6226ef" stroke-width="0.6"/>
<path d="M269.7,398.9 L268.5,394.5 L267.5,390.1 L266.6,385.7 L265.7,381.2 L280.4,378.6 L281.2,382.8 L282.0,386.9 L283.0,391.0 L284.0,395.1Z" fill="#6424ef" stroke="#6424ef" stroke-width="0.6"/>
<path d="M265.7,381.2 L265.0,376.7 L264.3,372.2 L263.8,367.7 L263.3,363.2 L278.2,361.9 L278.6,366.1 L279.1,370.3 L279.7,374.4 L280.4,378.6Z" fill="#6523ef" stroke="#6523ef" stroke-width="0.6"/>
<path d="M263.3,363.2 L263.0,358.6 L262.8,354.1 L262.6,349.5 L262.6,345.0 L277.4,345.0 L277.5,349.2 L277.6,353.4 L277.9,357.7 L278.2,361.9Z" fill="#6622ef" stroke="#6622ef" stroke-width="0.6"/>
<path d="M262.6,345.0 L262.6,340.5 L262.8,335.9 L263.0,331.4 L263.3,326.8 L278.2,328.1 L277.9,332.3 L277.6,336.6 L277.5,340.8 L277.4,345.0Z" fill="#6821ef" stroke="#6821ef" stroke-width="0.6"/>
<path d="M263.3,326.8 L263.8,322.3 L264.3,317.8 L265.0,313.3 L265.7,308.8 L280.4,311.4 L279.7,315.6 L279.1,319.7 L278.6,323.9 L278.2,328.1Z" fill="#6920ef" stroke="#6920ef" stroke-width="0.6"/>
<path d="M265.7,308.8 L266.6,304.3 L267.5,299.9 L268.5,295.5 L269.7,291.1 L284.0,294.9 L283.0,299.0 L282.0,303.1 L281.2,307.2 L280.4,311.4Z" fill="#6a1fef" stroke="#6a1fef" stroke-width="0.6"/>
<path d="M660.0,303.1 L660.8,307.2 L661.6,311.4 L662.3,315.6 L662.9,319.7 L648.1,321.7 L647.6,317.8 L647.0,314.0 L646.2,310.1 L645.4,306.3Z" fill="#6a1fef" stroke="#6a1fef" stroke-width="0.6"/>
<path d="M662.9,319.7 L663.4,323.9 L663.8,328.1 L664.1,332.3 L664.4,336.6 L649.5,337.2 L649.3,333.3 L649.0,329.4 L648.6,325.5 L648.1,321.7Z" fill="#691fef" stroke="#691fef" stroke-width="0.6"/>
<path d="M664.4,336.6 L664.5,340.8 L664.6,345.0 L664.5,349.2 L664.4,353.4 L649.5,352.8 L649.6,348.9 L649.7,345.0 L649.6,341.1 L649.5,337.2Z" fill="#6820ef" stroke="#6820ef" stroke-width="0.6"/>
<path d="M664.4,353.4 L664.1,357.7 L663.8,361.9 L663.4,366.1 L662.9,370.3 L648.1,368.3 L648.6,364.5 L649.0,360.6 L649.3,356.7 L649.5,352.8Z" fill="#6721ef" stroke="#6721ef" stroke-width="0.6"/>
<path d="M662.9,370.3 L662.3,374.4 L661.6,378.6 L660.8,382.8 L660.0,386.9 L645.4,383.7 L646.2,379.9 L647.0,376.0 L647.6,372.2 L648.1,368.3Z" fill="#6622ef" stroke="#6622ef" stroke-width="0.6"/>
<path d="M660.0,386.9 L659.0,391.0 L658.0,395.1 L656.8,399.2 L655.6,403.2 L641.4,398.7 L642.5,395.0 L643.6,391.2 L644.5,387.5 L645.4,383.7Z" fill="#6524ef" stroke="#6524ef" stroke-width="0.6"/>
<path d="M655.6,403.2 L654.3,407.2 L652.9,411.2 L651.4,415.2 L649.8,419.1 L636.1,413.4 L637.5,409.8 L638.9,406.1 L640.2,402.4 L641.4,398.7Z" fill="#6425ef" stroke="#6425ef" stroke-width="0.6"/>
<path d="M649.8,419.1 L648.2,423.0 L646.4,426.8 L644.6,430.6 L642.7,434.4 L629.5,427.5 L631.2,424.0 L632.9,420.5 L634.5,417.0 L636.1,413.4Z" fill="#6226ef" stroke="#6226ef" stroke-width="0.6"/>
<path d="M642.7,434.4 L640.7,438.1 L638.6,441.8 L636.5,445.4 L634.2,449.0 L621.7,441.0 L623.7,437.7 L625.7,434.3 L627.6,430.9 L629.5,427.5Z" fill="#6127ef" stroke="#6127ef" stroke-width="0.6"/>
<path d="M634.2,449.0 L631.9,452.5 L629.6,456.0 L627.1,459.5 L624.6,462.8 L612.7,453.8 L615.1,450.6 L617.4,447.5 L619.6,444.3 L621.7,441.0Z" fill="#5f28ef" stroke="#5f28ef" stroke-width="0.6"/>
<path d="M624.6,462.8 L622.0,466.2 L619.3,469.4 L616.5,472.6 L613.7,475.8 L602.7,465.7 L605.3,462.8 L607.9,459.8 L610.3,456.8 L612.7,453.8Z" fill="#5e2aef" stroke="#5e2aef" stroke-width="0.6"/>
<path d="M613.7,475.8 L610.8,478.8 L607.9,481.9 L604.8,484.8 L601.8,487.7 L591.7,476.7 L594.6,474.1 L597.3,471.3 L600.1,468.6 L602.7,465.7Z" fill="#5135f0" stroke="#5135f0" stroke-width="0.6"/>
<path d="M601.8,487.7 L598.6,490.5 L595.4,493.3 L592.2,496.0 L588.8,498.6 L579.8,486.7 L582.8,484.3 L585.8,481.9 L588.8,479.3 L591.7,476.7Z" fill="#5135f0" stroke="#5135f0" stroke-width="0.6"/>
<path d="M588.8,498.6 L585.5,501.1 L582.0,503.6 L578.5,505.9 L575.0,508.2 L567.0,495.7 L570.3,493.6 L573.5,491.4 L576.6,489.1 L579.8,486.7Z" fill="#5135f0" stroke="#5135f0" stroke-width="0.6"/>
<path d="M575.0,508.2 L571.4,510.5 L567.8,512.6 L564.1,514.7 L560.4,516.7 L553.5,503.5 L556.9,501.6 L560.3,499.7 L563.7,497.7 L567.0,495.7Z" fill="#5135f0" stroke="#5135f0" stroke-width="0.6"/>
<path d="M560.4,516.7 L556.6,518.6 L552.8,520.4 L549.0,522.2 L545.1,523.8 L539.4,510.1 L543.0,508.5 L546.5,506.9 L550.0,505.2 L553.5,503.5Z" fill="#5135f0" stroke="#5135f0" stroke-width="0.6"/>
<path d="M545.1,523.8 L541.2,525.4 L537.2,526.9 L533.2,528.3 L529.2,529.6 L524.7,515.4 L528.4,514.2 L532.1,512.9 L535.8,511.5 L539.4,510.1Z" fill="#5135f0" stroke="#5135f0" stroke-width="0.6"/>
<path d="M529.2,529.6 L525.2,530.8 L521.1,532.0 L517.0,533.0 L512.9,534.0 L509.7,519.4 L513.5,518.5 L517.2,517.6 L521.0,516.5 L524.7,515.4Z" fill="#5135f0" stroke="#5135f0" stroke-width="0.6"/>
<path d="M512.9,534.0 L508.8,534.8 L504.6,535.6 L500.4,536.3 L496.3,536.9 L494.3,522.1 L498.2,521.6 L502.0,521.0 L505.9,520.2 L509.7,519.4Z" fill="#5135f0" stroke="#5135f0" stroke-width="0.6"/>
<path d="M496.3,536.9 L492.1,537.4 L487.9,537.8 L483.7,538.1 L479.4,538.4 L478.8,523.5 L482.7,523.3 L486.6,523.0 L490.5,522.6 L494.3,522.1Z" fill="#5135f0" stroke="#5135f0" stroke-width="0.6"/>
<path d="M479.4,538.4 L475.2,538.5 L471.0,538.6 L466.8,538.5 L462.6,538.4 L463.2,523.5 L467.1,523.6 L471.0,523.7 L474.9,523.6 L478.8,523.5Z" fill="#5135f0" stroke="#5135f0" stroke-width="0.6"/>
<path d="M462.6,538.4 L458.3,538.1 L454.1,537.8 L449.9,537.4 L445.7,536.9 L447.7,522.1 L451.5,522.6 L455.4,523.0 L459.3,523.3 L463.2,523.5Z" fill="#5135f0" stroke="#5135f0" stroke-width="0.6"/>
<path d="M445.7,536.9 L441.6,536.3 L437.4,535.6 L433.2,534.8 L429.1,534.0 L432.3,519.4 L436.1,520.2 L440.0,521.0 L443.8,521.6 L447.7,522.1Z" fill="#5135f0" stroke="#5135f0" stroke-width="0.6"/>
<path d="M429.1,534.0 L425.0,533.0 L420.9,532.0 L416.8,530.8 L412.8,529.6 L417.3,515.4 L421.0,516.5 L424.8,517.6 L428.5,518.5 L432.3,519.4Z" fill="#5135f0" stroke="#5135f0" stroke-width="0.6"/>
<path d="M412.8,529.6 L408.8,528.3 L404.8,526.9 L400.8,525.4 L396.9,523.8 L402.6,510.1 L406.2,511.5 L409.9,512.9 L413.6,514.2 L417.3,515.4Z" fill="#5135f0" stroke="#5135f0" stroke-width="0.6"/>
<path d="M396.9,523.8 L393.0,522.2 L389.2,520.4 L385.4,518.6 L381.6,516.7 L388.5,503.5 L392.0,505.2 L395.5,506.9 L399.0,508.5 L402.6,510.1Z" fill="#5135f0" stroke="#5135f0" stroke-width="0.6"/>
<path d="M381.6,516.7 L377.9,514.7 L374.2,512.6 L370.6,510.5 L367.0,508.2 L375.0,495.7 L378.3,497.7 L381.7,499.7 L385.1,501.6 L388.5,503.5Z" fill="#5135f0" stroke="#5135f0" stroke-width="0.6"/>
<path d="M367.0,508.2 L363.5,505.9 L360.0,503.6 L356.5,501.1 L353.2,498.6 L362.2,486.7 L365.4,489.1 L368.5,491.4 L371.7,493.6 L375.0,495.7Z" fill="#5135f0" stroke="#5135f0" stroke-width="0.6"/>
<path d="M353.2,498.6 L349.8,496.0 L346.6,493.3 L343.4,490.5 L340.2,487.7 L350.3,476.7 L353.2,479.3 L356.2,481.9 L359.2,484.3 L362.2,486.7Z" fill="#5135f0" stroke="#5135f0" stroke-width="0.6"/>
<path d="M340.2,487.7 L337.2,484.8 L334.1,481.9 L331.2,478.8 L328.3,475.8 L339.3,465.7 L341.9,468.6 L344.7,471.3 L347.4,474.1 L350.3,476.7Z" fill="#5d2bef" stroke="#5d2bef" stroke-width="0.6"/>
<path d="M328.3,475.8 L325.5,472.6 L322.7,469.4 L320.0,466.2 L317.4,462.8 L329.3,453.8 L331.7,456.8 L334.1,459.8 L336.7,462.8 L339.3,465.7Z" fill="#5e2aef" stroke="#5e2aef" stroke-width="0.6"/>
<path d="M317.4,462.8 L314.9,459.5 L312.4,456.0 L310.1,452.5 L307.8,449.0 L320.3,441.0 L322.4,444.3 L324.6,447.5 L326.9,450.6 L329.3,453.8Z" fill="#5f28ef" stroke="#5f28ef" stroke-width="0.6"/>
<path d="M307.8,449.0 L305.5,445.4 L303.4,441.8 L301.3,438.1 L299.3,434.4 L312.5,427.5 L314.4,430.9 L316.3,434.3 L318.3,437.7 L320.3,441.0Z" fill="#6127ef" stroke="#6127ef" stroke-width="0.6"/>
<path d="M299.3,434.4 L297.4,430.6 L295.6,426.8 L293.8,423.0 L292.2,419.1 L305.9,413.4 L307.5,417.0 L309.1,420.5 L310.8,424.0 L312.5,427.5Z" fill="#6226ef" stroke="#6226ef" stroke-width="0.6"/>
<path d="M292.2,419.1 L290.6,415.2 L289.1,411.2 L287.7,407.2 L286.4,403.2 L300.6,398.7 L301.8,402.4 L303.1,406.1 L304.5,409.8 L305.9,413.4Z" fill="#6425ef" stroke="#6425ef" stroke-width="0.6"/>
<path d="M286.4,403.2 L285.2,399.2 L284.0,395.1 L283.0,391.0 L282.0,386.9 L296.6,383.7 L297.5,387.5 L298.4,391.2 L299.5,395.0 L300.6,398.7Z" fill="#6524ef" stroke="#6524ef" stroke-width="0.6"/>
<path d="M282.0,386.9 L281.2,382.8 L280.4,378.6 L279.7,374.4 L279.1,370.3 L293.9,368.3 L294.4,372.2 L295.0,376.0 L295.8,379.9 L296.6,383.7Z" fill="#6622ef" stroke="#6622ef" stroke-width="0.6"/>
<path d="M279.1,370.3 L278.6,366.1 L278.2,361.9 L277.9,357.7 L277.6,353.4 L292.5,352.8 L292.7,356.7 L293.0,360.6 L293.4,364.5 L293.9,368.3Z" fill="#6721ef" stroke="#6721ef" stroke-width="0.6"/>
<path d="M277.6,353.4 L277.5,349.2 L277.4,345.0 L277.5,340.8 L277.6,336.6 L292.5,337.2 L292.4,341.1 L292.3,345.0 L292.4,348.9 L292.5,352.8Z" fill="#6820ef" stroke="#6820ef" stroke-width="0.6"/>
<path d="M277.6,336.6 L277.9,332.3 L278.2,328.1 L278.6,323.9 L279.1,319.7 L293.9,321.7 L293.4,325.5 L293.0,329.4 L292.7,333.3 L292.5,337.2Z" fill="#691fef" stroke="#691fef" stroke-width="0.6"/>
<path d="M279.1,319.7 L279.7,315.6 L280.4,311.4 L281.2,307.2 L282.0,303.1 L296.6,306.3 L295.8,310.1 L295.0,314.0 L294.4,317.8 L293.9,321.7Z" fill="#6a1fef" stroke="#6a1fef" stroke-width="0.6"/>
<path d="M647.0,314.0 L647.6,317.8 L648.1,321.7 L648.6,325.5 L649.0,329.4 L634.2,330.7 L633.8,327.2 L633.4,323.6 L632.9,320.1 L632.3,316.6Z" fill="#6a1eef" stroke="#6a1eef" stroke-width="0.6"/>
<path d="M649.0,329.4 L649.3,333.3 L649.5,337.2 L649.6,341.1 L649.7,345.0 L634.8,345.0 L634.7,341.4 L634.6,337.9 L634.4,334.3 L634.2,330.7Z" fill="#691fef" stroke="#691fef" stroke-width="0.6"/>
<path d="M649.7,345.0 L649.6,348.9 L649.5,352.8 L649.3,356.7 L649.0,360.6 L634.2,359.3 L634.4,355.7 L634.6,352.1 L634.7,348.6 L634.8,345.0Z" fill="#6920ef" stroke="#6920ef" stroke-width="0.6"/>
<path d="M649.0,360.6 L648.6,364.5 L648.1,368.3 L647.6,372.2 L647.0,376.0 L632.3,373.4 L632.9,369.9 L633.4,366.4 L633.8,362.8 L634.2,359.3Z" fill="#6821ef" stroke="#6821ef" stroke-width="0.6"/>
<path d="M647.0,376.0 L646.2,379.9 L645.4,383.7 L644.5,387.5 L643.6,391.2 L629.2,387.4 L630.1,383.9 L630.9,380.4 L631.6,377.0 L632.3,373.4Z" fill="#6622ef" stroke="#6622ef" stroke-width="0.6"/>
<path d="M643.6,391.2 L642.5,395.0 L641.4,398.7 L640.2,402.4 L638.9,406.1 L624.9,401.0 L626.1,397.6 L627.2,394.2 L628.2,390.8 L629.2,387.4Z" fill="#6523ef" stroke="#6523ef" stroke-width="0.6"/>
<path d="M638.9,406.1 L637.5,409.8 L636.1,413.4 L634.5,417.0 L632.9,420.5 L619.4,414.2 L620.9,411.0 L622.3,407.7 L623.6,404.4 L624.9,401.0Z" fill="#6424ef" stroke="#6424ef" stroke-width="0.6"/>
<path d="M632.9,420.5 L631.2,424.0 L629.5,427.5 L627.6,430.9 L625.7,434.3 L612.8,426.9 L614.6,423.8 L616.3,420.6 L617.9,417.4 L619.4,414.2Z" fill="#6325ef" stroke="#6325ef" stroke-width="0.6"/>
<path d="M625.7,434.3 L623.7,437.7 L621.7,441.0 L619.6,444.3 L617.4,447.5 L605.2,438.9 L607.2,436.0 L609.1,433.0 L611.0,430.0 L612.8,426.9Z" fill="#6226ef" stroke="#6226ef" stroke-width="0.6"/>
<path d="M617.4,447.5 L615.1,450.6 L612.7,453.8 L610.3,456.8 L607.9,459.8 L596.5,450.3 L598.7,447.5 L600.9,444.7 L603.1,441.8 L605.2,438.9Z" fill="#6127ef" stroke="#6127ef" stroke-width="0.6"/>
<path d="M607.9,459.8 L605.3,462.8 L602.7,465.7 L600.1,468.6 L597.3,471.3 L586.8,460.8 L589.3,458.3 L591.7,455.6 L594.1,453.0 L596.5,450.3Z" fill="#6028ef" stroke="#6028ef" stroke-width="0.6"/>
<path d="M597.3,471.3 L594.6,474.1 L591.7,476.7 L588.8,479.3 L585.8,481.9 L576.3,470.5 L579.0,468.1 L581.6,465.7 L584.3,463.3 L586.8,460.8Z" fill="#5f29ef" stroke="#5f29ef" stroke-width="0.6"/>
<path d="M585.8,481.9 L582.8,484.3 L579.8,486.7 L576.6,489.1 L573.5,491.4 L564.9,479.2 L567.8,477.1 L570.7,474.9 L573.5,472.7 L576.3,470.5Z" fill="#5e2aef" stroke="#5e2aef" stroke-width="0.6"/>
<path d="M573.5,491.4 L570.3,493.6 L567.0,495.7 L563.7,497.7 L560.3,499.7 L552.9,486.8 L556.0,485.0 L559.0,483.1 L562.0,481.2 L564.9,479.2Z" fill="#5d2bef" stroke="#5d2bef" stroke-width="0.6"/>
<path d="M560.3,499.7 L556.9,501.6 L553.5,503.5 L550.0,505.2 L546.5,506.9 L540.2,493.4 L543.4,491.9 L546.6,490.3 L549.8,488.6 L552.9,486.8Z" fill="#5c2bf0" stroke="#5c2bf0" stroke-width="0.6"/>
<path d="M546.5,506.9 L543.0,508.5 L539.4,510.1 L535.8,511.5 L532.1,512.9 L527.0,498.9 L530.4,497.6 L533.7,496.3 L537.0,494.9 L540.2,493.4Z" fill="#5b2cf0" stroke="#5b2cf0" stroke-width="0.6"/>
<path d="M532.1,512.9 L528.4,514.2 L524.7,515.4 L521.0,516.5 L517.2,517.6 L513.4,503.2 L516.8,502.2 L520.2,501.2 L523.6,500.1 L527.0,498.9Z" fill="#5b2df0" stroke="#5b2df0" stroke-width="0.6"/>
<path d="M517.2,517.6 L513.5,518.5 L509.7,519.4 L505.9,520.2 L502.0,521.0 L499.4,506.3 L503.0,505.6 L506.4,504.9 L509.9,504.1 L513.4,503.2Z" fill="#5a2df0" stroke="#5a2df0" stroke-width="0.6"/>
<path d="M502.0,521.0 L498.2,521.6 L494.3,522.1 L490.5,522.6 L486.6,523.0 L485.3,508.2 L488.8,507.8 L492.4,507.4 L495.9,506.9 L499.4,506.3Z" fill="#5a2df0" stroke="#5a2df0" stroke-width="0.6"/>
<path d="M486.6,523.0 L482.7,523.3 L478.8,523.5 L474.9,523.6 L471.0,523.7 L471.0,508.8 L474.6,508.7 L478.1,508.6 L481.7,508.4 L485.3,508.2Z" fill="#5a2df0" stroke="#5a2df0" stroke-width="0.6"/>
<path d="M471.0,523.7 L467.1,523.6 L463.2,523.5 L459.3,523.3 L455.4,523.0 L456.7,508.2 L460.3,508.4 L463.9,508.6 L467.4,508.7 L471.0,508.8Z" fill="#5a2df0" stroke="#5a2df0" stroke-width="0.6"/>
<path d="M455.4,523.0 L451.5,522.6 L447.7,522.1 L443.8,521.6 L440.0,521.0 L442.6,506.3 L446.1,506.9 L449.6,507.4 L453.2,507.8 L456.7,508.2Z" fill="#5a2df0" stroke="#5a2df0" stroke-width="0.6"/>
<path d="M440.0,521.0 L436.1,520.2 L432.3,519.4 L428.5,518.5 L424.8,517.6 L428.6,503.2 L432.1,504.1 L435.6,504.9 L439.0,505.6 L442.6,506.3Z" fill="#5a2df0" stroke="#5a2df0" stroke-width="0.6"/>
<path d="M424.8,517.6 L421.0,516.5 L417.3,515.4 L413.6,514.2 L409.9,512.9 L415.0,498.9 L418.4,500.1 L421.8,501.2 L425.2,502.2 L428.6,503.2Z" fill="#5b2df0" stroke="#5b2df0" stroke-width="0.6"/>
<path d="M409.9,512.9 L406.2,511.5 L402.6,510.1 L399.0,508.5 L395.5,506.9 L401.8,493.4 L405.0,494.9 L408.3,496.3 L411.6,497.6 L415.0,498.9Z" fill="#5b2cf0" stroke="#5b2cf0" stroke-width="0.6"/>
<path d="M395.5,506.9 L392.0,505.2 L388.5,503.5 L385.1,501.6 L381.7,499.7 L389.1,486.8 L392.2,488.6 L395.4,490.3 L398.6,491.9 L401.8,493.4Z" fill="#5c2bf0" stroke="#5c2bf0" stroke-width="0.6"/>
<path d="M381.7,499.7 L378.3,497.7 L375.0,495.7 L371.7,493.6 L368.5,491.4 L377.1,479.2 L380.0,481.2 L383.0,483.1 L386.0,485.0 L389.1,486.8Z" fill="#5d2bef" stroke="#5d2bef" stroke-width="0.6"/>
<path d="M368.5,491.4 L365.4,489.1 L362.2,486.7 L359.2,484.3 L356.2,481.9 L365.7,470.5 L368.5,472.7 L371.3,474.9 L374.2,477.1 L377.1,479.2Z" fill="#5e2aef" stroke="#5e2aef" stroke-width="0.6"/>
<path d="M356.2,481.9 L353.2,479.3 L350.3,476.7 L347.4,474.1 L344.7,471.3 L355.2,460.8 L357.7,463.3 L360.4,465.7 L363.0,468.1 L365.7,470.5Z" fill="#5f29ef" stroke="#5f29ef" stroke-width="0.6"/>
<path d="M344.7,471.3 L341.9,468.6 L339.3,465.7 L336.7,462.8 L334.1,459.8 L345.5,450.3 L347.9,453.0 L350.3,455.6 L352.7,458.3 L355.2,460.8Z" fill="#6028ef" stroke="#6028ef" stroke-width="0.6"/>
<path d="M334.1,459.8 L331.7,456.8 L329.3,453.8 L326.9,450.6 L324.6,447.5 L336.8,438.9 L338.9,441.8 L341.1,444.7 L343.3,447.5 L345.5,450.3Z" fill="#6127ef" stroke="#6127ef" stroke-width="0.6"/>
<path d="M324.6,447.5 L322.4,444.3 L320.3,441.0 L318.3,437.7 L316.3,434.3 L329.2,426.9 L331.0,430.0 L332.9,433.0 L334.8,436.0 L336.8,438.9Z" fill="#6226ef" stroke="#6226ef" stroke-width="0.6"/>
<path d="M316.3,434.3 L314.4,430.9 L312.5,427.5 L310.8,424.0 L309.1,420.5 L322.6,414.2 L324.1,417.4 L325.7,420.6 L327.4,423.8 L329.2,426.9Z" fill="#6325ef" stroke="#6325ef" stroke-width="0.6"/>
<path d="M309.1,420.5 L307.5,417.0 L305.9,413.4 L304.5,409.8 L303.1,406.1 L317.1,401.0 L318.4,404.4 L319.7,407.7 L321.1,411.0 L322.6,414.2Z" fill="#6424ef" stroke="#6424ef" stroke-width="0.6"/>
<path d="M303.1,406.1 L301.8,402.4 L300.6,398.7 L299.5,395.0 L298.4,391.2 L312.8,387.4 L313.8,390.8 L314.8,394.2 L315.9,397.6 L317.1,401.0Z" fill="#6523ef" stroke="#6523ef" stroke-width="0.6"/>
<path d="M298.4,391.2 L297.5,387.5 L296.6,383.7 L295.8,379.9 L295.0,376.0 L309.7,373.4 L310.4,377.0 L311.1,380.4 L311.9,383.9 L312.8,387.4Z" fill="#6622ef" stroke="#6622ef" stroke-width="0.6"/>
<path d="M295.0,376.0 L294.4,372.2 L293.9,368.3 L293.4,364.5 L293.0,360.6 L307.8,359.3 L308.2,362.8 L308.6,366.4 L309.1,369.9 L309.7,373.4Z" fill="#6821ef" stroke="#6821ef" stroke-width="0.6"/>
<path d="M293.0,360.6 L292.7,356.7 L292.5,352.8 L292.4,348.9 L292.3,345.0 L307.2,345.0 L307.3,348.6 L307.4,352.1 L307.6,355.7 L307.8,359.3Z" fill="#6920ef" stroke="#6920ef" stroke-width="0.6"/>
<path d="M292.3,345.0 L292.4,341.1 L292.5,337.2 L292.7,333.3 L293.0,329.4 L307.8,330.7 L307.6,334.3 L307.4,337.9 L307.3,341.4 L307.2,345.0Z" fill="#691fef" stroke="#691fef" stroke-width="0.6"/>
<path d="M293.0,329.4 L293.4,325.5 L293.9,321.7 L294.4,317.8 L295.0,314.0 L309.7,316.6 L309.1,320.1 L308.6,323.6 L308.2,327.2 L307.8,330.7Z" fill="#6a1eef" stroke="#6a1eef" stroke-width="0.6"/>
<path d="M634.6,337.9 L634.7,341.4 L634.8,345.0 L634.7,348.6 L634.6,352.1 L619.7,351.5 L619.9,348.2 L619.9,345.0 L619.9,341.8 L619.7,338.5Z" fill="#6a1fef" stroke="#6a1fef" stroke-width="0.6"/>
<path d="M634.6,352.1 L634.4,355.7 L634.2,359.3 L633.8,362.8 L633.4,366.4 L618.6,364.4 L619.0,361.2 L619.3,358.0 L619.6,354.7 L619.7,351.5Z" fill="#691fef" stroke="#691fef" stroke-width="0.6"/>
<path d="M633.4,366.4 L632.9,369.9 L632.3,373.4 L631.6,377.0 L630.9,380.4 L616.4,377.2 L617.0,374.0 L617.6,370.9 L618.2,367.6 L618.6,364.4Z" fill="#6820ef" stroke="#6820ef" stroke-width="0.6"/>
<path d="M630.9,380.4 L630.1,383.9 L629.2,387.4 L628.2,390.8 L627.2,394.2 L613.0,389.8 L613.9,386.7 L614.8,383.5 L615.6,380.4 L616.4,377.2Z" fill="#6821ef" stroke="#6821ef" stroke-width="0.6"/>
<path d="M627.2,394.2 L626.1,397.6 L624.9,401.0 L623.6,404.4 L622.3,407.7 L608.6,402.0 L609.8,399.0 L610.9,395.9 L612.0,392.9 L613.0,389.8Z" fill="#6622ef" stroke="#6622ef" stroke-width="0.6"/>
<path d="M622.3,407.7 L620.9,411.0 L619.4,414.2 L617.9,417.4 L616.3,420.6 L603.1,413.7 L604.5,410.9 L605.9,407.9 L607.3,405.0 L608.6,402.0Z" fill="#6523ef" stroke="#6523ef" stroke-width="0.6"/>
<path d="M616.3,420.6 L614.6,423.8 L612.8,426.9 L611.0,430.0 L609.1,433.0 L596.6,425.0 L598.3,422.2 L599.9,419.4 L601.5,416.6 L603.1,413.7Z" fill="#6524ef" stroke="#6524ef" stroke-width="0.6"/>
<path d="M609.1,433.0 L607.2,436.0 L605.2,438.9 L603.1,441.8 L600.9,444.7 L589.1,435.6 L591.1,433.0 L593.0,430.4 L594.8,427.7 L596.6,425.0Z" fill="#6425ef" stroke="#6425ef" stroke-width="0.6"/>
<path d="M600.9,444.7 L598.7,447.5 L596.5,450.3 L594.1,453.0 L591.7,455.6 L580.8,445.6 L582.9,443.2 L585.1,440.7 L587.1,438.2 L589.1,435.6Z" fill="#6325ef" stroke="#6325ef" stroke-width="0.6"/>
<path d="M591.7,455.6 L589.3,458.3 L586.8,460.8 L584.3,463.3 L581.6,465.7 L571.6,454.8 L574.0,452.6 L576.3,450.3 L578.6,448.0 L580.8,445.6Z" fill="#6226ef" stroke="#6226ef" stroke-width="0.6"/>
<path d="M581.6,465.7 L579.0,468.1 L576.3,470.5 L573.5,472.7 L570.7,474.9 L561.6,463.1 L564.2,461.1 L566.7,459.1 L569.2,456.9 L571.6,454.8Z" fill="#6127ef" stroke="#6127ef" stroke-width="0.6"/>
<path d="M570.7,474.9 L567.8,477.1 L564.9,479.2 L562.0,481.2 L559.0,483.1 L551.0,470.6 L553.7,468.8 L556.4,467.0 L559.0,465.1 L561.6,463.1Z" fill="#6028ef" stroke="#6028ef" stroke-width="0.6"/>
<path d="M559.0,483.1 L556.0,485.0 L552.9,486.8 L549.8,488.6 L546.6,490.3 L539.7,477.1 L542.6,475.5 L545.4,473.9 L548.2,472.3 L551.0,470.6Z" fill="#5f29ef" stroke="#5f29ef" stroke-width="0.6"/>
<path d="M546.6,490.3 L543.4,491.9 L540.2,493.4 L537.0,494.9 L533.7,496.3 L528.0,482.6 L531.0,481.3 L533.9,479.9 L536.9,478.5 L539.7,477.1Z" fill="#5f29ef" stroke="#5f29ef" stroke-width="0.6"/>
<path d="M533.7,496.3 L530.4,497.6 L527.0,498.9 L523.6,500.1 L520.2,501.2 L515.8,487.0 L518.9,486.0 L521.9,484.9 L525.0,483.8 L528.0,482.6Z" fill="#5e2aef" stroke="#5e2aef" stroke-width="0.6"/>
<path d="M520.2,501.2 L516.8,502.2 L513.4,503.2 L509.9,504.1 L506.4,504.9 L503.2,490.4 L506.4,489.6 L509.5,488.8 L512.7,487.9 L515.8,487.0Z" fill="#5e2aef" stroke="#5e2aef" stroke-width="0.6"/>
<path d="M506.4,504.9 L503.0,505.6 L499.4,506.3 L495.9,506.9 L492.4,507.4 L490.4,492.6 L493.6,492.2 L496.9,491.6 L500.0,491.0 L503.2,490.4Z" fill="#5d2aef" stroke="#5d2aef" stroke-width="0.6"/>
<path d="M492.4,507.4 L488.8,507.8 L485.3,508.2 L481.7,508.4 L478.1,508.6 L477.5,493.7 L480.7,493.6 L484.0,493.3 L487.2,493.0 L490.4,492.6Z" fill="#5d2aef" stroke="#5d2aef" stroke-width="0.6"/>
<path d="M478.1,508.6 L474.6,508.7 L471.0,508.8 L467.4,508.7 L463.9,508.6 L464.5,493.7 L467.8,493.9 L471.0,493.9 L474.2,493.9 L477.5,493.7Z" fill="#5d2bef" stroke="#5d2bef" stroke-width="0.6"/>
<path d="M463.9,508.6 L460.3,508.4 L456.7,508.2 L453.2,507.8 L449.6,507.4 L451.6,492.6 L454.8,493.0 L458.0,493.3 L461.3,493.6 L464.5,493.7Z" fill="#5d2aef" stroke="#5d2aef" stroke-width="0.6"/>
<path d="M449.6,507.4 L446.1,506.9 L442.6,506.3 L439.0,505.6 L435.6,504.9 L438.8,490.4 L442.0,491.0 L445.1,491.6 L448.4,492.2 L451.6,492.6Z" fill="#5d2aef" stroke="#5d2aef" stroke-width="0.6"/>
<path d="M435.6,504.9 L432.1,504.1 L428.6,503.2 L425.2,502.2 L421.8,501.2 L426.2,487.0 L429.3,487.9 L432.5,488.8 L435.6,489.6 L438.8,490.4Z" fill="#5e2aef" stroke="#5e2aef" stroke-width="0.6"/>
<path d="M421.8,501.2 L418.4,500.1 L415.0,498.9 L411.6,497.6 L408.3,496.3 L414.0,482.6 L417.0,483.8 L420.1,484.9 L423.1,486.0 L426.2,487.0Z" fill="#5e2aef" stroke="#5e2aef" stroke-width="0.6"/>
<path d="M408.3,496.3 L405.0,494.9 L401.8,493.4 L398.6,491.9 L395.4,490.3 L402.3,477.1 L405.1,478.5 L408.1,479.9 L411.0,481.3 L414.0,482.6Z" fill="#5f29ef" stroke="#5f29ef" stroke-width="0.6"/>
<path d="M395.4,490.3 L392.2,488.6 L389.1,486.8 L386.0,485.0 L383.0,483.1 L391.0,470.6 L393.8,472.3 L396.6,473.9 L399.4,475.5 L402.3,477.1Z" fill="#5f29ef" stroke="#5f29ef" stroke-width="0.6"/>
<path d="M383.0,483.1 L380.0,481.2 L377.1,479.2 L374.2,477.1 L371.3,474.9 L380.4,463.1 L383.0,465.1 L385.6,467.0 L388.3,468.8 L391.0,470.6Z" fill="#6028ef" stroke="#6028ef" stroke-width="0.6"/>
<path d="M371.3,474.9 L368.5,472.7 L365.7,470.5 L363.0,468.1 L360.4,465.7 L370.4,454.8 L372.8,456.9 L375.3,459.1 L377.8,461.1 L380.4,463.1Z" fill="#6127ef" stroke="#6127ef" stroke-width="0.6"/>
<path d="M360.4,465.7 L357.7,463.3 L355.2,460.8 L352.7,458.3 L350.3,455.6 L361.2,445.6 L363.4,448.0 L365.7,450.3 L368.0,452.6 L370.4,454.8Z" fill="#6226ef" stroke="#6226ef" stroke-width="0.6"/>
<path d="M350.3,455.6 L347.9,453.0 L345.5,450.3 L343.3,447.5 L341.1,444.7 L352.9,435.6 L354.9,438.2 L356.9,440.7 L359.1,443.2 L361.2,445.6Z" fill="#6325ef" stroke="#6325ef" stroke-width="0.6"/>
<path d="M341.1,444.7 L338.9,441.8 L336.8,438.9 L334.8,436.0 L332.9,433.0 L345.4,425.0 L347.2,427.7 L349.0,430.4 L350.9,433.0 L352.9,435.6Z" fill="#6425ef" stroke="#6425ef" stroke-width="0.6"/>
<path d="M332.9,433.0 L331.0,430.0 L329.2,426.9 L327.4,423.8 L325.7,420.6 L338.9,413.7 L340.5,416.6 L342.1,419.4 L343.7,422.2 L345.4,425.0Z" fill="#6524ef" stroke="#6524ef" stroke-width="0.6"/>
<path d="M325.7,420.6 L324.1,417.4 L322.6,414.2 L321.1,411.0 L319.7,407.7 L333.4,402.0 L334.7,405.0 L336.1,407.9 L337.5,410.9 L338.9,413.7Z" fill="#6523ef" stroke="#6523ef" stroke-width="0.6"/>
<path d="M319.7,407.7 L318.4,404.4 L317.1,401.0 L315.9,397.6 L314.8,394.2 L329.0,389.8 L330.0,392.9 L331.1,395.9 L332.2,399.0 L333.4,402.0Z" fill="#6622ef" stroke="#6622ef" stroke-width="0.6"/>
<path d="M314.8,394.2 L313.8,390.8 L312.8,387.4 L311.9,383.9 L311.1,380.4 L325.6,377.2 L326.4,380.4 L327.2,383.5 L328.1,386.7 L329.0,389.8Z" fill="#6821ef" stroke="#6821ef" stroke-width="0.6"/>
<path d="M311.1,380.4 L310.4,377.0 L309.7,373.4 L309.1,369.9 L308.6,366.4 L323.4,364.4 L323.8,367.6 L324.4,370.9 L325.0,374.0 L325.6,377.2Z" fill="#6820ef" stroke="#6820ef" stroke-width="0.6"/>
<path d="M308.6,366.4 L308.2,362.8 L307.8,359.3 L307.6,355.7 L307.4,352.1 L322.3,351.5 L322.4,354.7 L322.7,358.0 L323.0,361.2 L323.4,364.4Z" fill="#691fef" stroke="#691fef" stroke-width="0.6"/>
<path d="M307.4,352.1 L307.3,348.6 L307.2,345.0 L307.3,341.4 L307.4,337.9 L322.3,338.5 L322.1,341.8 L322.1,345.0 L322.1,348.2 L322.3,351.5Z" fill="#6a1fef" stroke="#6a1fef" stroke-width="0.6"/>
<path d="M619.3,358.0 L619.0,361.2 L618.6,364.4 L618.2,367.6 L617.6,370.9 L603.0,368.3 L603.4,365.4 L603.9,362.5 L604.2,359.6 L604.5,356.7Z" fill="#6a1fef" stroke="#6a1fef" stroke-width="0.6"/>
<path d="M617.6,370.9 L617.0,374.0 L616.4,377.2 L615.6,380.4 L614.8,383.5 L600.4,379.7 L601.2,376.8 L601.8,374.0 L602.4,371.1 L603.0,368.3Z" fill="#691fef" stroke="#691fef" stroke-width="0.6"/>
<path d="M614.8,383.5 L613.9,386.7 L613.0,389.8 L612.0,392.9 L610.9,395.9 L596.9,390.8 L597.9,388.1 L598.8,385.3 L599.6,382.5 L600.4,379.7Z" fill="#6820ef" stroke="#6820ef" stroke-width="0.6"/>
<path d="M610.9,395.9 L609.8,399.0 L608.6,402.0 L607.3,405.0 L605.9,407.9 L592.4,401.6 L593.7,399.0 L594.8,396.3 L595.9,393.6 L596.9,390.8Z" fill="#6821ef" stroke="#6821ef" stroke-width="0.6"/>
<path d="M605.9,407.9 L604.5,410.9 L603.1,413.7 L601.5,416.6 L599.9,419.4 L587.0,412.0 L588.5,409.5 L589.9,406.9 L591.2,404.3 L592.4,401.6Z" fill="#6721ef" stroke="#6721ef" stroke-width="0.6"/>
<path d="M599.9,419.4 L598.3,422.2 L596.6,425.0 L594.8,427.7 L593.0,430.4 L580.8,421.9 L582.4,419.4 L584.0,417.0 L585.6,414.5 L587.0,412.0Z" fill="#6622ef" stroke="#6622ef" stroke-width="0.6"/>
<path d="M593.0,430.4 L591.1,433.0 L589.1,435.6 L587.1,438.2 L585.1,440.7 L573.6,431.1 L575.5,428.9 L577.3,426.6 L579.1,424.2 L580.8,421.9Z" fill="#6523ef" stroke="#6523ef" stroke-width="0.6"/>
<path d="M585.1,440.7 L582.9,443.2 L580.8,445.6 L578.6,448.0 L576.3,450.3 L565.8,439.8 L567.8,437.7 L569.8,435.5 L571.7,433.4 L573.6,431.1Z" fill="#6524ef" stroke="#6524ef" stroke-width="0.6"/>
<path d="M576.3,450.3 L574.0,452.6 L571.6,454.8 L569.2,456.9 L566.7,459.1 L557.1,447.6 L559.4,445.7 L561.5,443.8 L563.7,441.8 L565.8,439.8Z" fill="#6424ef" stroke="#6424ef" stroke-width="0.6"/>
<path d="M566.7,459.1 L564.2,461.1 L561.6,463.1 L559.0,465.1 L556.4,467.0 L547.9,454.8 L550.2,453.1 L552.6,451.3 L554.9,449.5 L557.1,447.6Z" fill="#6325ef" stroke="#6325ef" stroke-width="0.6"/>
<path d="M556.4,467.0 L553.7,468.8 L551.0,470.6 L548.2,472.3 L545.4,473.9 L538.0,461.0 L540.5,459.6 L543.0,458.0 L545.4,456.4 L547.9,454.8Z" fill="#6226ef" stroke="#6226ef" stroke-width="0.6"/>
<path d="M545.4,473.9 L542.6,475.5 L539.7,477.1 L536.9,478.5 L533.9,479.9 L527.6,466.4 L530.3,465.2 L532.9,463.9 L535.5,462.5 L538.0,461.0Z" fill="#6226ef" stroke="#6226ef" stroke-width="0.6"/>
<path d="M533.9,479.9 L531.0,481.3 L528.0,482.6 L525.0,483.8 L521.9,484.9 L516.8,470.9 L519.6,469.9 L522.3,468.8 L525.0,467.7 L527.6,466.4Z" fill="#6127ef" stroke="#6127ef" stroke-width="0.6"/>
<path d="M521.9,484.9 L518.9,486.0 L515.8,487.0 L512.7,487.9 L509.5,488.8 L505.7,474.4 L508.5,473.6 L511.3,472.8 L514.1,471.9 L516.8,470.9Z" fill="#6127ef" stroke="#6127ef" stroke-width="0.6"/>
<path d="M509.5,488.8 L506.4,489.6 L503.2,490.4 L500.0,491.0 L496.9,491.6 L494.3,477.0 L497.1,476.4 L500.0,475.8 L502.8,475.2 L505.7,474.4Z" fill="#6127ef" stroke="#6127ef" stroke-width="0.6"/>
<path d="M496.9,491.6 L493.6,492.2 L490.4,492.6 L487.2,493.0 L484.0,493.3 L482.7,478.5 L485.6,478.2 L488.5,477.9 L491.4,477.4 L494.3,477.0Z" fill="#6127ef" stroke="#6127ef" stroke-width="0.6"/>
<path d="M484.0,493.3 L480.7,493.6 L477.5,493.7 L474.2,493.9 L471.0,493.9 L471.0,479.0 L473.9,479.0 L476.8,478.9 L479.8,478.7 L482.7,478.5Z" fill="#6028ef" stroke="#6028ef" stroke-width="0.6"/>
<path d="M471.0,493.9 L467.8,493.9 L464.5,493.7 L461.3,493.6 L458.0,493.3 L459.3,478.5 L462.2,478.7 L465.2,478.9 L468.1,479.0 L471.0,479.0Z" fill="#6028ef" stroke="#6028ef" stroke-width="0.6"/>
<path d="M458.0,493.3 L454.8,493.0 L451.6,492.6 L448.4,492.2 L445.1,491.6 L447.7,477.0 L450.6,477.4 L453.5,477.9 L456.4,478.2 L459.3,478.5Z" fill="#6127ef" stroke="#6127ef" stroke-width="0.6"/>
<path d="M445.1,491.6 L442.0,491.0 L438.8,490.4 L435.6,489.6 L432.5,488.8 L436.3,474.4 L439.2,475.2 L442.0,475.8 L444.9,476.4 L447.7,477.0Z" fill="#6127ef" stroke="#6127ef" stroke-width="0.6"/>
<path d="M432.5,488.8 L429.3,487.9 L426.2,487.0 L423.1,486.0 L420.1,484.9 L425.2,470.9 L427.9,471.9 L430.7,472.8 L433.5,473.6 L436.3,474.4Z" fill="#6127ef" stroke="#6127ef" stroke-width="0.6"/>
<path d="M420.1,484.9 L417.0,483.8 L414.0,482.6 L411.0,481.3 L408.1,479.9 L414.4,466.4 L417.0,467.7 L419.7,468.8 L422.4,469.9 L425.2,470.9Z" fill="#6127ef" stroke="#6127ef" stroke-width="0.6"/>
<path d="M408.1,479.9 L405.1,478.5 L402.3,477.1 L399.4,475.5 L396.6,473.9 L404.0,461.0 L406.5,462.5 L409.1,463.9 L411.7,465.2 L414.4,466.4Z" fill="#6226ef" stroke="#6226ef" stroke-width="0.6"/>
<path d="M396.6,473.9 L393.8,472.3 L391.0,470.6 L388.3,468.8 L385.6,467.0 L394.1,454.8 L396.6,456.4 L399.0,458.0 L401.5,459.6 L404.0,461.0Z" fill="#6226ef" stroke="#6226ef" stroke-width="0.6"/>
<path d="M385.6,467.0 L383.0,465.1 L380.4,463.1 L377.8,461.1 L375.3,459.1 L384.9,447.6 L387.1,449.5 L389.4,451.3 L391.8,453.1 L394.1,454.8Z" fill="#6325ef" stroke="#6325ef" stroke-width="0.6"/>
<path d="M375.3,459.1 L372.8,456.9 L370.4,454.8 L368.0,452.6 L365.7,450.3 L376.2,439.8 L378.3,441.8 L380.5,443.8 L382.6,445.7 L384.9,447.6Z" fill="#6424ef" stroke="#6424ef" stroke-width="0.6"/>
<path d="M365.7,450.3 L363.4,448.0 L361.2,445.6 L359.1,443.2 L356.9,440.7 L368.4,431.1 L370.3,433.4 L372.2,435.5 L374.2,437.7 L376.2,439.8Z" fill="#6524ef" stroke="#6524ef" stroke-width="0.6"/>
<path d="M356.9,440.7 L354.9,438.2 L352.9,435.6 L350.9,433.0 L349.0,430.4 L361.2,421.9 L362.9,424.2 L364.7,426.6 L366.5,428.9 L368.4,431.1Z" fill="#6523ef" stroke="#6523ef" stroke-width="0.6"/>
<path d="M349.0,430.4 L347.2,427.7 L345.4,425.0 L343.7,422.2 L342.1,419.4 L355.0,412.0 L356.4,414.5 L358.0,417.0 L359.6,419.4 L361.2,421.9Z" fill="#6622ef" stroke="#6622ef" stroke-width="0.6"/>
<path d="M342.1,419.4 L340.5,416.6 L338.9,413.7 L337.5,410.9 L336.1,407.9 L349.6,401.6 L350.8,404.3 L352.1,406.9 L353.5,409.5 L355.0,412.0Z" fill="#6721ef" stroke="#6721ef" stroke-width="0.6"/>
<path d="M336.1,407.9 L334.7,405.0 L333.4,402.0 L332.2,399.0 L331.1,395.9 L345.1,390.8 L346.1,393.6 L347.2,396.3 L348.3,399.0 L349.6,401.6Z" fill="#6821ef" stroke="#6821ef" stroke-width="0.6"/>
<path d="M331.1,395.9 L330.0,392.9 L329.0,389.8 L328.1,386.7 L327.2,383.5 L341.6,379.7 L342.4,382.5 L343.2,385.3 L344.1,388.1 L345.1,390.8Z" fill="#6820ef" stroke="#6820ef" stroke-width="0.6"/>
<path d="M327.2,383.5 L326.4,380.4 L325.6,377.2 L325.0,374.0 L324.4,370.9 L339.0,368.3 L339.6,371.1 L340.2,374.0 L340.8,376.8 L341.6,379.7Z" fill="#691fef" stroke="#691fef" stroke-width="0.6"/>
<path d="M324.4,370.9 L323.8,367.6 L323.4,364.4 L323.0,361.2 L322.7,358.0 L337.5,356.7 L337.8,359.6 L338.1,362.5 L338.6,365.4 L339.0,368.3Z" fill="#6a1fef" stroke="#6a1fef" stroke-width="0.6"/>
<path d="M601.8,374.0 L601.2,376.8 L600.4,379.7 L599.6,382.5 L598.8,385.3 L584.6,380.8 L585.4,378.3 L586.1,375.8 L586.7,373.3 L587.3,370.8Z" fill="#6a1eef" stroke="#6a1eef" stroke-width="0.6"/>
<path d="M598.8,385.3 L597.9,388.1 L596.9,390.8 L595.9,393.6 L594.8,396.3 L581.0,390.6 L582.0,388.2 L582.9,385.7 L583.8,383.3 L584.6,380.8Z" fill="#691fef" stroke="#691fef" stroke-width="0.6"/>
<path d="M594.8,396.3 L593.7,399.0 L592.4,401.6 L591.2,404.3 L589.9,406.9 L576.7,400.0 L577.8,397.7 L579.0,395.3 L580.0,393.0 L581.0,390.6Z" fill="#691fef" stroke="#691fef" stroke-width="0.6"/>
<path d="M589.9,406.9 L588.5,409.5 L587.0,412.0 L585.6,414.5 L584.0,417.0 L571.5,409.0 L572.8,406.8 L574.2,404.6 L575.4,402.3 L576.7,400.0Z" fill="#6820ef" stroke="#6820ef" stroke-width="0.6"/>
<path d="M584.0,417.0 L582.4,419.4 L580.8,421.9 L579.1,424.2 L577.3,426.6 L565.5,417.5 L567.1,415.4 L568.6,413.3 L570.0,411.2 L571.5,409.0Z" fill="#6821ef" stroke="#6821ef" stroke-width="0.6"/>
<path d="M577.3,426.6 L575.5,428.9 L573.6,431.1 L571.7,433.4 L569.8,435.5 L558.8,425.5 L560.6,423.5 L562.2,421.6 L563.9,419.6 L565.5,417.5Z" fill="#6721ef" stroke="#6721ef" stroke-width="0.6"/>
<path d="M569.8,435.5 L567.8,437.7 L565.8,439.8 L563.7,441.8 L561.5,443.8 L551.5,432.8 L553.4,431.0 L555.2,429.2 L557.0,427.4 L558.8,425.5Z" fill="#6622ef" stroke="#6622ef" stroke-width="0.6"/>
<path d="M561.5,443.8 L559.4,445.7 L557.1,447.6 L554.9,449.5 L552.6,451.3 L543.5,439.5 L545.6,437.9 L547.6,436.2 L549.5,434.6 L551.5,432.8Z" fill="#6622ef" stroke="#6622ef" stroke-width="0.6"/>
<path d="M552.6,451.3 L550.2,453.1 L547.9,454.8 L545.4,456.4 L543.0,458.0 L535.0,445.5 L537.2,444.0 L539.3,442.6 L541.4,441.1 L543.5,439.5Z" fill="#6523ef" stroke="#6523ef" stroke-width="0.6"/>
<path d="M543.0,458.0 L540.5,459.6 L538.0,461.0 L535.5,462.5 L532.9,463.9 L526.0,450.7 L528.3,449.4 L530.6,448.2 L532.8,446.8 L535.0,445.5Z" fill="#6523ef" stroke="#6523ef" stroke-width="0.6"/>
<path d="M532.9,463.9 L530.3,465.2 L527.6,466.4 L525.0,467.7 L522.3,468.8 L516.6,455.0 L519.0,454.0 L521.3,453.0 L523.7,451.8 L526.0,450.7Z" fill="#6524ef" stroke="#6524ef" stroke-width="0.6"/>
<path d="M522.3,468.8 L519.6,469.9 L516.8,470.9 L514.1,471.9 L511.3,472.8 L506.8,458.6 L509.3,457.8 L511.7,456.9 L514.2,456.0 L516.6,455.0Z" fill="#6424ef" stroke="#6424ef" stroke-width="0.6"/>
<path d="M511.3,472.8 L508.5,473.6 L505.7,474.4 L502.8,475.2 L500.0,475.8 L496.8,461.3 L499.3,460.7 L501.8,460.1 L504.3,459.4 L506.8,458.6Z" fill="#6424ef" stroke="#6424ef" stroke-width="0.6"/>
<path d="M500.0,475.8 L497.1,476.4 L494.3,477.0 L491.4,477.4 L488.5,477.9 L486.5,463.1 L489.1,462.7 L491.7,462.3 L494.2,461.8 L496.8,461.3Z" fill="#6425ef" stroke="#6425ef" stroke-width="0.6"/>
<path d="M488.5,477.9 L485.6,478.2 L482.7,478.5 L479.8,478.7 L476.8,478.9 L476.2,464.0 L478.8,463.9 L481.4,463.7 L484.0,463.4 L486.5,463.1Z" fill="#6425ef" stroke="#6425ef" stroke-width="0.6"/>
<path d="M476.8,478.9 L473.9,479.0 L471.0,479.0 L468.1,479.0 L465.2,478.9 L465.8,464.0 L468.4,464.1 L471.0,464.1 L473.6,464.1 L476.2,464.0Z" fill="#6425ef" stroke="#6425ef" stroke-width="0.6"/>
<path d="M465.2,478.9 L462.2,478.7 L459.3,478.5 L456.4,478.2 L453.5,477.9 L455.5,463.1 L458.0,463.4 L460.6,463.7 L463.2,463.9 L465.8,464.0Z" fill="#6425ef" stroke="#6425ef" stroke-width="0.6"/>
<path d="M453.5,477.9 L450.6,477.4 L447.7,477.0 L444.9,476.4 L442.0,475.8 L445.2,461.3 L447.8,461.8 L450.3,462.3 L452.9,462.7 L455.5,463.1Z" fill="#6425ef" stroke="#6425ef" stroke-width="0.6"/>
<path d="M442.0,475.8 L439.2,475.2 L436.3,474.4 L433.5,473.6 L430.7,472.8 L435.2,458.6 L437.7,459.4 L440.2,460.1 L442.7,460.7 L445.2,461.3Z" fill="#6424ef" stroke="#6424ef" stroke-width="0.6"/>
<path d="M430.7,472.8 L427.9,471.9 L425.2,470.9 L422.4,469.9 L419.7,468.8 L425.4,455.0 L427.8,456.0 L430.3,456.9 L432.7,457.8 L435.2,458.6Z" fill="#6424ef" stroke="#6424ef" stroke-width="0.6"/>
<path d="M419.7,468.8 L417.0,467.7 L414.4,466.4 L411.7,465.2 L409.1,463.9 L416.0,450.7 L418.3,451.8 L420.7,453.0 L423.0,454.0 L425.4,455.0Z" fill="#6524ef" stroke="#6524ef" stroke-width="0.6"/>
<path d="M409.1,463.9 L406.5,462.5 L404.0,461.0 L401.5,459.6 L399.0,458.0 L407.0,445.5 L409.2,446.8 L411.4,448.2 L413.7,449.4 L416.0,450.7Z" fill="#6523ef" stroke="#6523ef" stroke-width="0.6"/>
<path d="M399.0,458.0 L396.6,456.4 L394.1,454.8 L391.8,453.1 L389.4,451.3 L398.5,439.5 L400.6,441.1 L402.7,442.6 L404.8,444.0 L407.0,445.5Z" fill="#6523ef" stroke="#6523ef" stroke-width="0.6"/>
<path d="M389.4,451.3 L387.1,449.5 L384.9,447.6 L382.6,445.7 L380.5,443.8 L390.5,432.8 L392.5,434.6 L394.4,436.2 L396.4,437.9 L398.5,439.5Z" fill="#6622ef" stroke="#6622ef" stroke-width="0.6"/>
<path d="M380.5,443.8 L378.3,441.8 L376.2,439.8 L374.2,437.7 L372.2,435.5 L383.2,425.5 L385.0,427.4 L386.8,429.2 L388.6,431.0 L390.5,432.8Z" fill="#6622ef" stroke="#6622ef" stroke-width="0.6"/>
<path d="M372.2,435.5 L370.3,433.4 L368.4,431.1 L366.5,428.9 L364.7,426.6 L376.5,417.5 L378.1,419.6 L379.8,421.6 L381.4,423.5 L383.2,425.5Z" fill="#6721ef" stroke="#6721ef" stroke-width="0.6"/>
<path d="M364.7,426.6 L362.9,424.2 L361.2,421.9 L359.6,419.4 L358.0,417.0 L370.5,409.0 L372.0,411.2 L373.4,413.3 L374.9,415.4 L376.5,417.5Z" fill="#6821ef" stroke="#6821ef" stroke-width="0.6"/>
<path d="M358.0,417.0 L356.4,414.5 L355.0,412.0 L353.5,409.5 L352.1,406.9 L365.3,400.0 L366.6,402.3 L367.8,404.6 L369.2,406.8 L370.5,409.0Z" fill="#6820ef" stroke="#6820ef" stroke-width="0.6"/>
<path d="M352.1,406.9 L350.8,404.3 L349.6,401.6 L348.3,399.0 L347.2,396.3 L361.0,390.6 L362.0,393.0 L363.0,395.3 L364.2,397.7 L365.3,400.0Z" fill="#691fef" stroke="#691fef" stroke-width="0.6"/>
<path d="M347.2,396.3 L346.1,393.6 L345.1,390.8 L344.1,388.1 L343.2,385.3 L357.4,380.8 L358.2,383.3 L359.1,385.7 L360.0,388.2 L361.0,390.6Z" fill="#691fef" stroke="#691fef" stroke-width="0.6"/>
<path d="M343.2,385.3 L342.4,382.5 L341.6,379.7 L340.8,376.8 L340.2,374.0 L354.7,370.8 L355.3,373.3 L355.9,375.8 L356.6,378.3 L357.4,380.8Z" fill="#6a1eef" stroke="#6a1eef" stroke-width="0.6"/>
<path d="M579.0,395.3 L577.8,397.7 L576.7,400.0 L575.4,402.3 L574.2,404.6 L561.3,397.1 L562.4,395.1 L563.4,393.1 L564.5,391.1 L565.5,389.0Z" fill="#6b1eef" stroke="#6b1eef" stroke-width="0.6"/>
<path d="M574.2,404.6 L572.8,406.8 L571.5,409.0 L570.0,411.2 L568.6,413.3 L556.4,404.8 L557.7,402.9 L558.9,401.0 L560.1,399.1 L561.3,397.1Z" fill="#6a1eef" stroke="#6a1eef" stroke-width="0.6"/>
<path d="M568.6,413.3 L567.1,415.4 L565.5,417.5 L563.9,419.6 L562.2,421.6 L550.8,412.0 L552.3,410.2 L553.7,408.4 L555.0,406.6 L556.4,404.8Z" fill="#691fef" stroke="#691fef" stroke-width="0.6"/>
<path d="M562.2,421.6 L560.6,423.5 L558.8,425.5 L557.0,427.4 L555.2,429.2 L544.7,418.7 L546.3,417.1 L547.8,415.4 L549.4,413.7 L550.8,412.0Z" fill="#691fef" stroke="#691fef" stroke-width="0.6"/>
<path d="M555.2,429.2 L553.4,431.0 L551.5,432.8 L549.5,434.6 L547.6,436.2 L538.0,424.8 L539.7,423.4 L541.4,421.8 L543.1,420.3 L544.7,418.7Z" fill="#6920ef" stroke="#6920ef" stroke-width="0.6"/>
<path d="M547.6,436.2 L545.6,437.9 L543.5,439.5 L541.4,441.1 L539.3,442.6 L530.8,430.4 L532.6,429.0 L534.4,427.7 L536.2,426.3 L538.0,424.8Z" fill="#6820ef" stroke="#6820ef" stroke-width="0.6"/>
<path d="M539.3,442.6 L537.2,444.0 L535.0,445.5 L532.8,446.8 L530.6,448.2 L523.1,435.3 L525.1,434.1 L527.0,432.9 L528.9,431.7 L530.8,430.4Z" fill="#6820ef" stroke="#6820ef" stroke-width="0.6"/>
<path d="M530.6,448.2 L528.3,449.4 L526.0,450.7 L523.7,451.8 L521.3,453.0 L515.0,439.5 L517.1,438.5 L519.1,437.4 L521.1,436.4 L523.1,435.3Z" fill="#6821ef" stroke="#6821ef" stroke-width="0.6"/>
<path d="M521.3,453.0 L519.0,454.0 L516.6,455.0 L514.2,456.0 L511.7,456.9 L506.6,442.9 L508.8,442.1 L510.9,441.3 L513.0,440.4 L515.0,439.5Z" fill="#6721ef" stroke="#6721ef" stroke-width="0.6"/>
<path d="M511.7,456.9 L509.3,457.8 L506.8,458.6 L504.3,459.4 L501.8,460.1 L498.0,445.7 L500.2,445.1 L502.3,444.4 L504.5,443.7 L506.6,442.9Z" fill="#6721ef" stroke="#6721ef" stroke-width="0.6"/>
<path d="M501.8,460.1 L499.3,460.7 L496.8,461.3 L494.2,461.8 L491.7,462.3 L489.1,447.6 L491.3,447.2 L493.6,446.8 L495.8,446.2 L498.0,445.7Z" fill="#6721ef" stroke="#6721ef" stroke-width="0.6"/>
<path d="M491.7,462.3 L489.1,462.7 L486.5,463.1 L484.0,463.4 L481.4,463.7 L480.1,448.8 L482.3,448.6 L484.6,448.3 L486.9,448.0 L489.1,447.6Z" fill="#6721ef" stroke="#6721ef" stroke-width="0.6"/>
<path d="M481.4,463.7 L478.8,463.9 L476.2,464.0 L473.6,464.1 L471.0,464.1 L471.0,449.2 L473.3,449.2 L475.5,449.1 L477.8,449.0 L480.1,448.8Z" fill="#6721ef" stroke="#6721ef" stroke-width="0.6"/>
<path d="M471.0,464.1 L468.4,464.1 L465.8,464.0 L463.2,463.9 L460.6,463.7 L461.9,448.8 L464.2,449.0 L466.5,449.1 L468.7,449.2 L471.0,449.2Z" fill="#6721ef" stroke="#6721ef" stroke-width="0.6"/>
<path d="M460.6,463.7 L458.0,463.4 L455.5,463.1 L452.9,462.7 L450.3,462.3 L452.9,447.6 L455.1,448.0 L457.4,448.3 L459.7,448.6 L461.9,448.8Z" fill="#6721ef" stroke="#6721ef" stroke-width="0.6"/>
<path d="M450.3,462.3 L447.8,461.8 L445.2,461.3 L442.7,460.7 L440.2,460.1 L444.0,445.7 L446.2,446.2 L448.4,446.8 L450.7,447.2 L452.9,447.6Z" fill="#6721ef" stroke="#6721ef" stroke-width="0.6"/>
<path d="M440.2,460.1 L437.7,459.4 L435.2,458.6 L432.7,457.8 L430.3,456.9 L435.4,442.9 L437.5,443.7 L439.7,444.4 L441.8,445.1 L444.0,445.7Z" fill="#6721ef" stroke="#6721ef" stroke-width="0.6"/>
<path d="M430.3,456.9 L427.8,456.0 L425.4,455.0 L423.0,454.0 L420.7,453.0 L427.0,439.5 L429.0,440.4 L431.1,441.3 L433.2,442.1 L435.4,442.9Z" fill="#6721ef" stroke="#6721ef" stroke-width="0.6"/>
<path d="M420.7,453.0 L418.3,451.8 L416.0,450.7 L413.7,449.4 L411.4,448.2 L418.9,435.3 L420.9,436.4 L422.9,437.4 L424.9,438.5 L427.0,439.5Z" fill="#6821ef" stroke="#6821ef" stroke-width="0.6"/>
<path d="M411.4,448.2 L409.2,446.8 L407.0,445.5 L404.8,444.0 L402.7,442.6 L411.2,430.4 L413.1,431.7 L415.0,432.9 L416.9,434.1 L418.9,435.3Z" fill="#6820ef" stroke="#6820ef" stroke-width="0.6"/>
<path d="M402.7,442.6 L400.6,441.1 L398.5,439.5 L396.4,437.9 L394.4,436.2 L404.0,424.8 L405.8,426.3 L407.6,427.7 L409.4,429.0 L411.2,430.4Z" fill="#6820ef" stroke="#6820ef" stroke-width="0.6"/>
<path d="M394.4,436.2 L392.5,434.6 L390.5,432.8 L388.6,431.0 L386.8,429.2 L397.3,418.7 L398.9,420.3 L400.6,421.8 L402.3,423.4 L404.0,424.8Z" fill="#6920ef" stroke="#6920ef" stroke-width="0.6"/>
<path d="M386.8,429.2 L385.0,427.4 L383.2,425.5 L381.4,423.5 L379.8,421.6 L391.2,412.0 L392.6,413.7 L394.2,415.4 L395.7,417.1 L397.3,418.7Z" fill="#691fef" stroke="#691fef" stroke-width="0.6"/>
<path d="M379.8,421.6 L378.1,419.6 L376.5,417.5 L374.9,415.4 L373.4,413.3 L385.6,404.8 L387.0,406.6 L388.3,408.4 L389.7,410.2 L391.2,412.0Z" fill="#691fef" stroke="#691fef" stroke-width="0.6"/>
<path d="M373.4,413.3 L372.0,411.2 L370.5,409.0 L369.2,406.8 L367.8,404.6 L380.7,397.1 L381.9,399.1 L383.1,401.0 L384.3,402.9 L385.6,404.8Z" fill="#6a1eef" stroke="#6a1eef" stroke-width="0.6"/>
<path d="M367.8,404.6 L366.6,402.3 L365.3,400.0 L364.2,397.7 L363.0,395.3 L376.5,389.0 L377.5,391.1 L378.6,393.1 L379.6,395.1 L380.7,397.1Z" fill="#6b1eef" stroke="#6b1eef" stroke-width="0.6"/>
<path d="M519.1,437.4 L517.1,438.5 L515.0,439.5 L513.0,440.4 L510.9,441.3 L505.2,427.5 L507.0,426.8 L508.8,426.0 L510.5,425.1 L512.2,424.2Z" fill="#6b1eef" stroke="#6b1eef" stroke-width="0.6"/>
<path d="M510.9,441.3 L508.8,442.1 L506.6,442.9 L504.5,443.7 L502.3,444.4 L497.9,430.2 L499.7,429.6 L501.6,428.9 L503.4,428.3 L505.2,427.5Z" fill="#6a1eef" stroke="#6a1eef" stroke-width="0.6"/>
<path d="M502.3,444.4 L500.2,445.1 L498.0,445.7 L495.8,446.2 L493.6,446.8 L490.3,432.2 L492.2,431.8 L494.1,431.3 L496.0,430.8 L497.9,430.2Z" fill="#6a1eef" stroke="#6a1eef" stroke-width="0.6"/>
<path d="M493.6,446.8 L491.3,447.2 L489.1,447.6 L486.9,448.0 L484.6,448.3 L482.7,433.6 L484.6,433.3 L486.5,433.0 L488.4,432.6 L490.3,432.2Z" fill="#6a1eef" stroke="#6a1eef" stroke-width="0.6"/>
<path d="M484.6,448.3 L482.3,448.6 L480.1,448.8 L477.8,449.0 L475.5,449.1 L474.9,434.2 L476.8,434.1 L478.8,434.0 L480.7,433.8 L482.7,433.6Z" fill="#6a1eef" stroke="#6a1eef" stroke-width="0.6"/>
<path d="M475.5,449.1 L473.3,449.2 L471.0,449.2 L468.7,449.2 L466.5,449.1 L467.1,434.2 L469.1,434.3 L471.0,434.3 L472.9,434.3 L474.9,434.2Z" fill="#6a1eef" stroke="#6a1eef" stroke-width="0.6"/>
<path d="M466.5,449.1 L464.2,449.0 L461.9,448.8 L459.7,448.6 L457.4,448.3 L459.3,433.6 L461.3,433.8 L463.2,434.0 L465.2,434.1 L467.1,434.2Z" fill="#6a1eef" stroke="#6a1eef" stroke-width="0.6"/>
<path d="M457.4,448.3 L455.1,448.0 L452.9,447.6 L450.7,447.2 L448.4,446.8 L451.7,432.2 L453.6,432.6 L455.5,433.0 L457.4,433.3 L459.3,433.6Z" fill="#6a1eef" stroke="#6a1eef" stroke-width="0.6"/>
<path d="M448.4,446.8 L446.2,446.2 L444.0,445.7 L441.8,445.1 L439.7,444.4 L444.1,430.2 L446.0,430.8 L447.9,431.3 L449.8,431.8 L451.7,432.2Z" fill="#6a1eef" stroke="#6a1eef" stroke-width="0.6"/>
<path d="M439.7,444.4 L437.5,443.7 L435.4,442.9 L433.2,442.1 L431.1,441.3 L436.8,427.5 L438.6,428.3 L440.4,428.9 L442.3,429.6 L444.1,430.2Z" fill="#6a1eef" stroke="#6a1eef" stroke-width="0.6"/>
<path d="M431.1,441.3 L429.0,440.4 L427.0,439.5 L424.9,438.5 L422.9,437.4 L429.8,424.2 L431.5,425.1 L433.2,426.0 L435.0,426.8 L436.8,427.5Z" fill="#6b1eef" stroke="#6b1eef" stroke-width="0.6"/>
</g>
<g fill="none" stroke="#ffffff" stroke-opacity="0.11" stroke-width="1"><circle cx="471.0" cy="345.0" r="238.2"/><circle cx="471.0" cy="345.0" r="208.4"/><circle cx="471.0" cy="345.0" r="178.7"/><circle cx="471.0" cy="345.0" r="148.9"/><circle cx="471.0" cy="345.0" r="119.1"/><circle cx="471.0" cy="345.0" r="89.3"/><circle cx="471.0" cy="345.0" r="59.6"/><circle cx="471.0" cy="345.0" r="29.8"/><line x1="476.2" y1="315.7" x2="517.5" y2="81.1"/><line x1="481.2" y1="317.0" x2="562.7" y2="93.2"/><line x1="485.9" y1="319.2" x2="605.0" y2="112.9"/><line x1="490.1" y1="322.2" x2="643.3" y2="139.7"/><line x1="493.8" y1="325.9" x2="676.3" y2="172.7"/><line x1="496.8" y1="330.1" x2="703.1" y2="211.0"/><line x1="499.0" y1="334.8" x2="722.8" y2="253.3"/><line x1="500.3" y1="339.8" x2="734.9" y2="298.5"/><line x1="500.3" y1="350.2" x2="734.9" y2="391.5"/><line x1="499.0" y1="355.2" x2="722.8" y2="436.7"/><line x1="496.8" y1="359.9" x2="703.1" y2="479.0"/><line x1="493.8" y1="364.1" x2="676.3" y2="517.3"/><line x1="490.1" y1="367.8" x2="643.3" y2="550.3"/><line x1="485.9" y1="370.8" x2="605.0" y2="577.1"/><line x1="481.2" y1="373.0" x2="562.7" y2="596.8"/><line x1="476.2" y1="374.3" x2="517.5" y2="608.9"/><line x1="465.8" y1="374.3" x2="424.5" y2="608.9"/><line x1="460.8" y1="373.0" x2="379.3" y2="596.8"/><line x1="456.1" y1="370.8" x2="337.0" y2="577.1"/><line x1="451.9" y1="367.8" x2="298.7" y2="550.3"/><line x1="448.2" y1="364.1" x2="265.7" y2="517.3"/><line x1="445.2" y1="359.9" x2="238.9" y2="479.0"/><line x1="443.0" y1="355.2" x2="219.2" y2="436.7"/><line x1="441.7" y1="350.2" x2="207.1" y2="391.5"/><line x1="441.7" y1="339.8" x2="207.1" y2="298.5"/><line x1="443.0" y1="334.8" x2="219.2" y2="253.3"/><line x1="445.2" y1="330.1" x2="238.9" y2="211.0"/><line x1="448.2" y1="325.9" x2="265.7" y2="172.7"/><line x1="451.9" y1="322.2" x2="298.7" y2="139.7"/><line x1="456.1" y1="319.2" x2="337.0" y2="112.9"/><line x1="460.8" y1="317.0" x2="379.3" y2="93.2"/><line x1="465.8" y1="315.7" x2="424.5" y2="81.1"/></g>
<g stroke="#e09080" stroke-opacity="0.42" stroke-width="1"><line x1="471.0" y1="77.0" x2="471.0" y2="613.0"/><line x1="203.0" y1="345.0" x2="739.0" y2="345.0"/></g>
<g font-family="Liberation Sans" font-size="8.2" fill="#c8a8f8" fill-opacity="0.8"><text x="473.5" y="110.0">10°</text><text x="473.5" y="139.8">20°</text><text x="473.5" y="169.5">30°</text><text x="473.5" y="199.3">40°</text><text x="473.5" y="229.1">50°</text><text x="473.5" y="258.9">60°</text><text x="473.5" y="288.6">70°</text><text x="473.5" y="318.4">80°</text></g>
<g clip-path="url(#dc)"><path d="M679.9,511.6 L674.7,514.9 L669.5,518.1 L664.3,521.2 L659.0,524.2 L653.7,527.1 L648.4,529.9 L643.0,532.6 L637.6,535.2 L632.2,537.8 L626.8,540.2 L621.3,542.5 L615.8,544.8 L610.3,546.9 L604.8,549.0 L599.2,550.9 L593.6,552.8 L588.0,554.6 L582.4,556.3 L576.8,557.9 L571.2,559.4 L565.5,560.9 L559.9,562.2 L554.2,563.5 L548.5,564.6 L542.8,565.7 L537.1,566.7 L531.4,567.7 L525.7,568.5 L520.0,569.2 L514.2,569.9 L508.5,570.5 L502.8,571.0 L497.0,571.4 L491.3,571.7 L485.5,572.0 L479.7,572.2 L474.0,572.2 L468.2,572.2 L462.5,572.2 L456.7,572.0 L451.0,571.7 L445.2,571.4 L439.5,571.0 L433.7,570.5 L428.0,569.9 L422.3,569.2 L416.5,568.5 L410.8,567.6 L405.1,566.7 L399.4,565.7 L393.7,564.6 L388.0,563.4 L382.3,562.2 L376.7,560.8 L371.0,559.4 L365.4,557.9 L359.8,556.2 L354.2,554.5 L348.6,552.8 L343.0,550.9 L337.5,548.9 L331.9,546.8 L326.4,544.7 L320.9,542.5 L315.5,540.1 L310.0,537.7 L304.6,535.2 L299.2,532.6 L293.9,529.8 L288.5,527.0 L283.2,524.1 L278.0,521.1 L272.7,518.0 L267.5,514.8 L262.4,511.5" fill="none" stroke="#f09c60" stroke-opacity="1" stroke-width="1.6" stroke-dasharray="1.8,3.2"/><path d="M723.1,435.0 L718.9,439.6 L714.7,444.2 L710.3,448.6 L705.9,452.9 L701.5,457.1 L696.9,461.2 L692.4,465.2 L687.7,469.1 L683.0,472.9 L678.3,476.5 L673.5,480.1 L668.6,483.5 L663.8,486.9 L658.8,490.1 L653.9,493.3 L648.9,496.3 L643.8,499.3 L638.7,502.1 L633.6,504.9 L628.5,507.5 L623.3,510.1 L618.1,512.6 L612.8,514.9 L607.6,517.2 L602.3,519.4 L597.0,521.4 L591.6,523.4 L586.3,525.3 L580.9,527.1 L575.5,528.8 L570.1,530.5 L564.6,532.0 L559.2,533.4 L553.7,534.8 L548.2,536.0 L542.7,537.2 L537.2,538.3 L531.7,539.3 L526.2,540.2 L520.6,541.0 L515.1,541.7 L509.5,542.4 L504.0,542.9 L498.4,543.4 L492.9,543.8 L487.3,544.1 L481.7,544.3 L476.1,544.4 L470.6,544.4 L465.0,544.4 L459.4,544.2 L453.8,544.0 L448.3,543.7 L442.7,543.3 L437.1,542.8 L431.6,542.2 L426.0,541.6 L420.5,540.8 L414.9,540.0 L409.4,539.0 L403.9,538.0 L398.4,536.9 L392.9,535.7 L387.4,534.4 L382.0,533.1 L376.5,531.6 L371.1,530.0 L365.7,528.4 L360.3,526.7 L354.9,524.8 L349.5,522.9 L344.2,520.9 L338.9,518.8 L333.6,516.6 L328.4,514.3 L323.1,511.9 L317.9,509.4 L312.8,506.8 L307.6,504.2 L302.5,501.4 L297.5,498.5 L292.4,495.5 L287.4,492.5 L282.5,489.3 L277.6,486.0 L272.7,482.6 L267.9,479.2 L263.1,475.6 L258.4,471.9 L253.7,468.1 L249.1,464.2 L244.5,460.2 L240.0,456.0 L235.6,451.8 L231.2,447.5 L226.9,443.0 L222.6,438.4 L218.4,433.7" fill="none" stroke="#f09c60" stroke-opacity="1" stroke-width="1.6" stroke-dasharray="1.8,3.2"/><path d="M738.3,345.4 L735.8,351.2 L733.1,356.9 L730.3,362.4 L727.4,367.9 L724.4,373.2 L721.3,378.4 L718.1,383.6 L714.8,388.6 L711.3,393.5 L707.9,398.3 L704.3,403.0 L700.6,407.6 L696.8,412.0 L693.0,416.4 L689.1,420.7 L685.1,424.8 L681.1,428.9 L677.0,432.9 L672.8,436.7 L668.6,440.5 L664.3,444.1 L659.9,447.7 L655.5,451.1 L651.1,454.5 L646.6,457.7 L642.0,460.9 L637.4,463.9 L632.8,466.9 L628.1,469.7 L623.4,472.5 L618.6,475.2 L613.8,477.7 L609.0,480.2 L604.1,482.6 L599.2,484.9 L594.2,487.0 L589.3,489.1 L584.3,491.1 L579.3,493.1 L574.2,494.9 L569.2,496.6 L564.1,498.2 L559.0,499.8 L553.9,501.2 L548.7,502.6 L543.6,503.9 L538.4,505.0 L533.2,506.1 L528.0,507.1 L522.8,508.1 L517.5,508.9 L512.3,509.6 L507.1,510.3 L501.8,510.8 L496.6,511.3 L491.3,511.7 L486.0,512.0 L480.8,512.2 L475.5,512.3 L470.2,512.3 L464.9,512.2 L459.7,512.1 L454.4,511.8 L449.1,511.5 L443.9,511.1 L438.6,510.6 L433.4,510.0 L428.1,509.3 L422.9,508.6 L417.7,507.7 L412.5,506.7 L407.3,505.7 L402.1,504.6 L396.9,503.4 L391.8,502.1 L386.6,500.7 L381.5,499.2 L376.4,497.6 L371.4,495.9 L366.3,494.1 L361.3,492.3 L356.3,490.3 L351.3,488.3 L346.3,486.2 L341.4,483.9 L336.5,481.6 L331.7,479.2 L326.9,476.7 L322.1,474.1 L317.3,471.4 L312.6,468.6 L308.0,465.7 L303.3,462.7 L298.8,459.6 L294.2,456.4 L289.7,453.1 L285.3,449.7 L280.9,446.3 L276.6,442.7 L272.3,439.0 L268.1,435.2 L264.0,431.3 L259.9,427.3 L255.9,423.2 L252.0,419.0 L248.1,414.7 L244.3,410.3 L240.6,405.7 L237.0,401.1 L233.4,396.4 L230.0,391.6 L226.6,386.6 L223.3,381.6 L220.2,376.4 L217.1,371.1 L214.1,365.8 L211.3,360.3 L208.5,354.7 L205.9,349.0 L203.4,343.2" fill="none" stroke="#f09c60" stroke-opacity="1" stroke-width="1.6" stroke-dasharray="1.8,3.2"/><path d="M720.1,250.8 L719.9,257.0 L719.5,263.2 L719.0,269.3 L718.3,275.3 L717.4,281.2 L716.4,287.1 L715.2,292.9 L713.9,298.6 L712.4,304.2 L710.8,309.8 L709.1,315.2 L707.2,320.6 L705.3,325.9 L703.1,331.1 L700.9,336.2 L698.6,341.3 L696.1,346.2 L693.6,351.1 L690.9,355.8 L688.2,360.5 L685.3,365.1 L682.4,369.6 L679.3,374.0 L676.2,378.3 L673.0,382.5 L669.7,386.6 L666.4,390.6 L662.9,394.6 L659.4,398.4 L655.8,402.1 L652.2,405.8 L648.5,409.4 L644.7,412.8 L640.8,416.2 L636.9,419.5 L633.0,422.7 L629.0,425.8 L624.9,428.8 L620.8,431.7 L616.6,434.5 L612.4,437.2 L608.2,439.9 L603.9,442.4 L599.6,444.9 L595.2,447.3 L590.8,449.5 L586.3,451.7 L581.9,453.8 L577.4,455.8 L572.8,457.7 L568.3,459.6 L563.7,461.3 L559.1,463.0 L554.4,464.5 L549.7,466.0 L545.1,467.4 L540.4,468.7 L535.6,469.9 L530.9,471.0 L526.1,472.1 L521.4,473.0 L516.6,473.9 L511.8,474.6 L507.0,475.3 L502.2,475.9 L497.3,476.4 L492.5,476.9 L487.7,477.2 L482.8,477.4 L478.0,477.6 L473.1,477.7 L468.3,477.7 L463.4,477.6 L458.6,477.4 L453.8,477.1 L448.9,476.8 L444.1,476.3 L439.3,475.8 L434.5,475.2 L429.7,474.5 L424.9,473.7 L420.1,472.8 L415.3,471.8 L410.6,470.8 L405.8,469.6 L401.1,468.4 L396.4,467.1 L391.7,465.7 L387.1,464.2 L382.4,462.6 L377.8,460.9 L373.2,459.2 L368.7,457.3 L364.1,455.4 L359.7,453.4 L355.2,451.3 L350.8,449.1 L346.4,446.8 L342.0,444.4 L337.7,441.9 L333.4,439.3 L329.2,436.7 L325.0,433.9 L320.8,431.1 L316.7,428.2 L312.7,425.1 L308.7,422.0 L304.8,418.8 L300.9,415.5 L297.0,412.1 L293.3,408.6 L289.6,405.1 L286.0,401.4 L282.4,397.6 L278.9,393.8 L275.5,389.8 L272.1,385.8 L268.9,381.6 L265.7,377.4 L262.6,373.1 L259.6,368.7 L256.6,364.2 L253.8,359.6 L251.1,354.9 L248.5,350.1 L245.9,345.3 L243.5,340.3 L241.2,335.3 L239.0,330.1 L236.9,324.9 L235.0,319.6 L233.2,314.2 L231.5,308.7 L229.9,303.2 L228.5,297.6 L227.2,291.8 L226.0,286.0 L225.1,280.2 L224.2,274.2 L223.5,268.2 L223.0,262.2 L222.7,256.0 L222.5,249.8" fill="none" stroke="#f09c60" stroke-opacity="1" stroke-width="1.6" stroke-dasharray="1.8,3.2"/><path d="M681.4,179.8 L683.4,185.6 L685.2,191.4 L686.8,197.2 L688.2,202.9 L689.4,208.7 L690.4,214.5 L691.3,220.2 L692.0,225.9 L692.5,231.6 L692.8,237.3 L693.0,242.9 L693.0,248.4 L692.9,254.0 L692.6,259.4 L692.1,264.9 L691.5,270.2 L690.8,275.6 L689.9,280.8 L688.9,286.0 L687.8,291.2 L686.5,296.2 L685.1,301.2 L683.6,306.2 L682.0,311.0 L680.2,315.8 L678.4,320.5 L676.4,325.2 L674.3,329.7 L672.1,334.2 L669.8,338.7 L667.5,343.0 L665.0,347.2 L662.4,351.4 L659.8,355.5 L657.0,359.5 L654.2,363.5 L651.3,367.3 L648.3,371.1 L645.3,374.7 L642.1,378.3 L638.9,381.9 L635.7,385.3 L632.3,388.6 L628.9,391.9 L625.5,395.1 L621.9,398.2 L618.4,401.2 L614.7,404.1 L611.1,406.9 L607.3,409.7 L603.5,412.3 L599.7,414.9 L595.8,417.4 L591.9,419.8 L588.0,422.1 L584.0,424.4 L579.9,426.5 L575.9,428.6 L571.8,430.6 L567.6,432.5 L563.5,434.3 L559.3,436.0 L555.0,437.7 L550.8,439.2 L546.5,440.7 L542.2,442.1 L537.9,443.4 L533.5,444.6 L529.2,445.8 L524.8,446.8 L520.4,447.8 L516.0,448.7 L511.6,449.5 L507.1,450.2 L502.7,450.8 L498.2,451.4 L493.7,451.8 L489.3,452.2 L484.8,452.5 L480.3,452.7 L475.8,452.9 L471.4,452.9 L466.9,452.9 L462.4,452.7 L457.9,452.5 L453.4,452.2 L449.0,451.9 L444.5,451.4 L440.0,450.9 L435.6,450.3 L431.1,449.5 L426.7,448.8 L422.3,447.9 L417.9,446.9 L413.5,445.9 L409.2,444.7 L404.8,443.5 L400.5,442.2 L396.2,440.9 L391.9,439.4 L387.7,437.8 L383.4,436.2 L379.2,434.5 L375.1,432.7 L370.9,430.8 L366.8,428.8 L362.7,426.8 L358.7,424.6 L354.7,422.4 L350.7,420.1 L346.8,417.7 L343.0,415.2 L339.1,412.6 L335.3,410.0 L331.6,407.2 L327.9,404.4 L324.3,401.5 L320.7,398.5 L317.2,395.4 L313.7,392.2 L310.3,389.0 L307.0,385.6 L303.7,382.2 L300.5,378.7 L297.4,375.1 L294.3,371.5 L291.3,367.7 L288.4,363.9 L285.6,360.0 L282.8,356.0 L280.2,351.9 L277.6,347.7 L275.1,343.5 L272.7,339.1 L270.5,334.7 L268.3,330.3 L266.2,325.7 L264.2,321.1 L262.3,316.4 L260.6,311.6 L258.9,306.7 L257.4,301.8 L256.0,296.8 L254.7,291.8 L253.5,286.7 L252.5,281.5 L251.6,276.2 L250.9,270.9 L250.3,265.6 L249.8,260.2 L249.5,254.7 L249.4,249.2 L249.4,243.6 L249.6,238.0 L249.9,232.4 L250.4,226.7 L251.0,221.0 L251.9,215.3 L252.9,209.6 L254.1,203.8 L255.5,198.0 L257.0,192.2 L258.8,186.5 L260.7,180.7" fill="none" stroke="#f09c60" stroke-opacity="1" stroke-width="1.6" stroke-dasharray="1.8,3.2"/><path d="M654.4,539.2 L649.0,541.9 L643.5,544.6 L638.0,547.1 L632.5,549.5 L627.0,551.9 L621.5,554.2 L615.9,556.3 L610.3,558.4 L604.7,560.4 L599.1,562.3 L593.5,564.1 L587.8,565.9 L582.2,567.5 L576.5,569.1 L570.8,570.5 L565.1,571.9 L559.4,573.2 L553.6,574.4 L547.9,575.6 L542.2,576.6 L536.4,577.6 L530.7,578.5 L524.9,579.3 L519.1,580.0 L513.3,580.6 L507.5,581.2 L501.8,581.6 L496.0,582.0 L490.2,582.3 L484.4,582.6 L478.6,582.7 L472.8,582.8 L467.0,582.8 L461.2,582.7 L455.4,582.5 L449.6,582.2 L443.8,581.9 L438.0,581.5 L432.2,581.0 L426.4,580.4 L420.6,579.7 L414.9,579.0 L409.1,578.1 L403.3,577.2 L397.6,576.2 L391.8,575.1 L386.1,574.0 L380.4,572.7 L374.7,571.4 L369.0,570.0 L363.3,568.5 L357.6,566.9 L352.0,565.2 L346.3,563.4 L340.7,561.6 L335.1,559.6 L329.5,557.6 L323.9,555.5 L318.4,553.3 L312.8,551.0 L307.3,548.6 L301.8,546.1 L296.4,543.5 L290.9,540.9 L285.5,538.1" fill="none" stroke="#f09c60" stroke-opacity="1" stroke-width="1.6" stroke-dasharray="1.8,3.2"/><path d="M654.1,149.3 L658.0,153.6 L660.9,158.9 L663.5,164.3 L666.0,169.7 L668.3,175.2 L670.5,180.6 L672.4,186.1 L674.2,191.5 L675.7,197.0 L677.1,202.5 L678.4,208.0 L679.4,213.4 L680.3,218.9 L681.0,224.3 L681.6,229.7 L682.0,235.1 L682.2,240.4 L682.3,245.8 L682.3,251.0 L682.1,256.3 L681.7,261.4 L681.2,266.6 L680.6,271.7 L679.8,276.7 L678.9,281.7 L677.9,286.6 L676.8,291.5 L675.5,296.3 L674.1,301.0 L672.6,305.7 L671.0,310.3 L669.2,314.9 L667.4,319.3 L665.5,323.7 L663.4,328.1 L661.3,332.3 L659.0,336.5 L656.7,340.6 L654.3,344.7 L651.8,348.6 L649.2,352.5 L646.5,356.3 L643.8,360.1 L640.9,363.7 L638.0,367.3 L635.1,370.8 L632.0,374.2 L628.9,377.5 L625.7,380.8 L622.5,383.9 L619.2,387.0 L615.8,390.0 L612.4,392.9 L608.9,395.8 L605.4,398.5 L601.8,401.2 L598.2,403.8 L594.5,406.3 L590.8,408.7 L587.0,411.1 L583.2,413.3 L579.4,415.5 L575.5,417.6 L571.6,419.6 L567.6,421.6 L563.7,423.4 L559.6,425.2 L555.6,426.9 L551.5,428.5 L547.4,430.0 L543.3,431.4 L539.1,432.8 L535.0,434.0 L530.8,435.2 L526.6,436.3 L522.3,437.4 L518.1,438.3 L513.8,439.2 L509.6,439.9 L505.3,440.6 L501.0,441.2 L496.7,441.8 L492.4,442.2 L488.0,442.6 L483.7,442.9 L479.4,443.1 L475.1,443.2 L470.7,443.2 L466.4,443.2 L462.1,443.0 L457.7,442.8 L453.4,442.5 L449.1,442.2 L444.8,441.7 L440.5,441.2 L436.2,440.5 L431.9,439.8 L427.6,439.1 L423.4,438.2 L419.1,437.2 L414.9,436.2 L410.7,435.1 L406.5,433.9 L402.3,432.6 L398.2,431.2 L394.1,429.8 L390.0,428.3 L385.9,426.7 L381.9,425.0 L377.8,423.2 L373.9,421.3 L369.9,419.4 L366.0,417.4 L362.1,415.3 L358.3,413.1 L354.5,410.8 L350.7,408.4 L347.0,406.0 L343.4,403.5 L339.7,400.9 L336.2,398.2 L332.7,395.4 L329.2,392.6 L325.8,389.6 L322.4,386.6 L319.1,383.5 L315.9,380.3 L312.7,377.1 L309.6,373.8 L306.6,370.3 L303.6,366.8 L300.7,363.3 L297.9,359.6 L295.1,355.9 L292.5,352.0 L289.9,348.1 L287.4,344.2 L285.0,340.1 L282.7,336.0 L280.5,331.8 L278.3,327.5 L276.3,323.2 L274.4,318.8 L272.5,314.3 L270.8,309.8 L269.2,305.1 L267.7,300.4 L266.3,295.7 L265.1,290.9 L264.0,286.0 L262.9,281.1 L262.1,276.1 L261.3,271.0 L260.7,265.9 L260.2,260.8 L259.9,255.6 L259.7,250.4 L259.7,245.1 L259.8,239.8 L260.0,234.4 L260.5,229.0 L261.0,223.6 L261.8,218.2 L262.7,212.8 L263.8,207.3 L265.0,201.8 L266.5,196.3 L268.1,190.9 L269.8,185.4 L271.8,179.9 L273.9,174.5 L276.3,169.0 L278.8,163.6 L281.5,158.3 L284.4,153.0 L288.5,148.8" fill="none" stroke="#ff9a40" stroke-width="1.8"/><path d="M676.5,173.7 L674.0,173.4 L671.9,172.9 L670.0,172.4 L668.5,171.7 L667.3,171.0 L666.4,170.3 L665.9,169.5 L665.8,168.7 L666.1,167.9 L666.7,167.2 L667.8,166.4 L669.2,165.8" fill="none" stroke="#f09c60" stroke-opacity="1" stroke-width="1.6" stroke-dasharray="1.8,3.2"/><path d="M713.5,237.0 L709.4,236.1 L705.5,235.3 L701.9,234.4 L698.5,233.5 L695.3,232.6 L692.5,231.6 L689.9,230.6 L687.6,229.7 L685.7,228.7 L684.1,227.7 L682.8,226.7 L681.8,225.8 L681.2,224.9 L681.0,224.1 L681.2,223.4 L681.7,222.8 L682.5,222.3 L683.8,221.9 L685.3,221.7 L687.3,221.7 L689.6,221.9 L692.2,222.3 L695.1,223.0 L698.3,223.9 L701.8,225.1 L705.6,226.6 L709.6,228.4" fill="none" stroke="#f09c60" stroke-opacity="1" stroke-width="1.6" stroke-dasharray="1.8,3.2"/><path d="M733.8,307.4 L729.2,305.3 L724.6,303.3 L720.2,301.4 L716.0,299.5 L711.8,297.7 L707.9,295.9 L704.2,294.2 L700.6,292.5 L697.3,290.8 L694.3,289.2 L691.5,287.6 L688.9,286.0 L686.7,284.5 L684.8,283.1 L683.1,281.7 L681.8,280.5 L680.8,279.3 L680.2,278.2 L679.9,277.3 L679.9,276.5 L680.2,275.9 L680.9,275.5 L681.8,275.2 L683.1,275.2 L684.7,275.4 L686.6,275.9 L688.8,276.7 L691.2,277.7 L693.8,279.0 L696.7,280.6 L699.8,282.6 L703.1,284.8 L706.5,287.4 L710.0,290.3 L713.6,293.5 L717.4,297.1 L721.1,300.9 L724.9,305.0 L728.7,309.4 L732.5,314.0 L736.3,318.9" fill="none" stroke="#f09c60" stroke-opacity="1" stroke-width="1.6" stroke-dasharray="1.8,3.2"/><path d="M735.4,382.6 L731.5,379.1 L727.5,375.7 L723.4,372.4 L719.3,369.2 L715.2,366.2 L711.1,363.2 L707.0,360.4 L703.0,357.6 L699.2,354.9 L695.4,352.3 L691.8,349.8 L688.4,347.3 L685.1,345.0 L682.0,342.6 L679.2,340.4 L676.6,338.3 L674.2,336.2 L672.1,334.2 L670.3,332.4 L668.7,330.7 L667.5,329.1 L666.5,327.6 L665.8,326.3 L665.4,325.2 L665.3,324.3 L665.5,323.6 L666.0,323.1 L666.7,322.9 L667.8,322.9 L669.0,323.2 L670.5,323.7 L672.2,324.6 L674.2,325.7 L676.3,327.2 L678.6,329.0 L681.0,331.1 L683.5,333.6 L686.2,336.3 L688.9,339.4 L691.7,342.8 L694.5,346.5 L697.4,350.5 L700.2,354.8 L703.0,359.3 L705.8,364.1 L708.5,369.0 L711.2,374.2 L713.8,379.4 L716.3,384.9 L718.7,390.4 L721.0,395.9 L723.2,401.5 L725.4,407.0 L727.5,412.5" fill="none" stroke="#f09c60" stroke-opacity="1" stroke-width="1.6" stroke-dasharray="1.8,3.2"/><path d="M714.1,456.1 L712.0,451.8 L709.7,447.5 L707.2,443.3 L704.4,439.2 L701.4,435.1 L698.3,431.2 L695.1,427.3 L691.7,423.5 L688.3,419.8 L684.8,416.1 L681.3,412.6 L677.8,409.1 L674.3,405.7 L670.9,402.4 L667.7,399.2 L664.5,396.1 L661.4,393.0 L658.5,390.1 L655.8,387.3 L653.2,384.5 L650.9,381.9 L648.8,379.4 L646.9,377.0 L645.3,374.7 L643.8,372.7 L642.7,370.8 L641.8,369.0 L641.1,367.5 L640.7,366.2 L640.6,365.1 L640.7,364.2 L641.0,363.6 L641.6,363.2 L642.4,363.2 L643.4,363.4 L644.6,363.9 L645.9,364.8 L647.4,365.9 L649.0,367.4 L650.8,369.2 L652.7,371.3 L654.6,373.8 L656.6,376.6 L658.6,379.6 L660.7,383.0 L662.7,386.7 L664.8,390.7 L666.8,394.9 L668.7,399.4 L670.7,404.0 L672.5,408.9 L674.3,414.0 L676.0,419.2 L677.6,424.5 L679.1,429.9 L680.6,435.3 L682.0,440.8 L683.3,446.2 L684.6,451.7 L685.8,457.0 L687.0,462.2 L688.2,467.3 L689.4,472.1 L690.6,476.8 L691.9,481.1 L693.1,485.2 L694.5,489.0" fill="none" stroke="#f09c60" stroke-opacity="1" stroke-width="1.6" stroke-dasharray="1.8,3.2"/><path d="M667.2,527.5 L668.2,524.7 L669.0,521.5 L669.5,518.1 L669.8,514.5 L669.7,510.7 L669.4,506.7 L668.7,502.7 L667.8,498.5 L666.6,494.3 L665.1,490.1 L663.3,485.8 L661.3,481.6 L659.1,477.3 L656.7,473.1 L654.2,469.0 L651.5,464.8 L648.7,460.7 L645.9,456.7 L643.0,452.7 L640.1,448.8 L637.2,445.0 L634.3,441.3 L631.5,437.6 L628.8,434.0 L626.2,430.5 L623.7,427.1 L621.3,423.8 L619.2,420.6 L617.1,417.6 L615.3,414.7 L613.7,411.9 L612.3,409.3 L611.1,406.9 L610.1,404.7 L609.3,402.7 L608.7,400.9 L608.4,399.3 L608.3,398.0 L608.3,397.0 L608.6,396.2 L609.0,395.7 L609.7,395.5 L610.4,395.6 L611.4,396.0 L612.4,396.7 L613.6,397.8 L614.8,399.1 L616.2,400.9 L617.6,402.9 L619.0,405.2 L620.4,407.9 L621.9,410.9 L623.3,414.2 L624.7,417.7 L626.1,421.5 L627.4,425.6 L628.7,429.9 L629.9,434.4 L631.0,439.1 L632.0,444.0 L633.0,449.0 L633.8,454.1 L634.6,459.3 L635.4,464.6 L636.0,469.9 L636.7,475.2 L637.2,480.4 L637.8,485.6 L638.3,490.8 L638.9,495.8 L639.5,500.6 L640.1,505.3 L640.8,509.7 L641.6,514.0 L642.4,517.9 L643.4,521.5 L644.5,524.9 L645.7,527.8 L647.0,530.4 L648.5,532.6 L650.1,534.4 L651.7,535.8 L653.4,536.7 L655.2,537.2 L657.0,537.2" fill="none" stroke="#f09c60" stroke-opacity="1" stroke-width="1.6" stroke-dasharray="1.8,3.2"/><path d="M609.7,557.2 L611.3,555.4 L612.7,553.2 L614.0,550.7 L615.0,547.8 L615.8,544.8 L616.3,541.4 L616.6,537.9 L616.6,534.2 L616.3,530.3 L615.7,526.3 L614.9,522.3 L613.8,518.1 L612.5,513.9 L611.0,509.6 L609.2,505.3 L607.3,501.0 L605.3,496.6 L603.1,492.3 L600.9,488.1 L598.6,483.8 L596.3,479.6 L593.9,475.4 L591.6,471.3 L589.3,467.3 L587.1,463.3 L584.9,459.4 L582.9,455.7 L580.9,452.0 L579.1,448.5 L577.5,445.1 L576.0,441.8 L574.7,438.7 L573.5,435.8 L572.5,433.1 L571.8,430.6 L571.2,428.3 L570.8,426.2 L570.5,424.4 L570.4,422.9 L570.5,421.6 L570.8,420.6 L571.2,420.0 L571.7,419.6 L572.4,419.5 L573.1,419.7 L574.0,420.3 L574.9,421.2 L575.8,422.4 L576.8,424.0 L577.9,425.9 L578.9,428.1 L579.9,430.6 L580.9,433.4 L581.8,436.4 L582.7,439.8 L583.5,443.4 L584.2,447.3 L584.9,451.4 L585.5,455.6 L586.0,460.1 L586.4,464.7 L586.7,469.5 L586.9,474.4 L587.1,479.4 L587.2,484.4 L587.2,489.5 L587.2,494.6 L587.2,499.7 L587.1,504.8 L587.1,509.7 L587.1,514.7 L587.1,519.4 L587.2,524.1 L587.4,528.6 L587.6,532.9 L588.0,537.0 L588.6,540.8 L589.3,544.3 L590.1,547.6 L591.1,550.5 L592.3,553.2 L593.6,555.4 L595.0,557.3 L596.6,558.8 L598.3,559.9 L600.1,560.5 L601.9,560.8 L603.8,560.6 L605.7,560.1 L607.5,559.1 L609.2,557.7" fill="none" stroke="#f09c60" stroke-opacity="1" stroke-width="1.6" stroke-dasharray="1.8,3.2"/><path d="M553.1,573.2 L554.8,571.7 L556.3,569.8 L557.7,567.6 L558.9,565.0 L559.9,562.2 L560.6,559.1 L561.1,555.8 L561.4,552.3 L561.4,548.6 L561.1,544.7 L560.6,540.7 L559.9,536.6 L558.9,532.4 L557.8,528.1 L556.5,523.7 L555.0,519.3 L553.5,514.8 L551.8,510.4 L550.1,505.9 L548.3,501.5 L546.5,497.1 L544.6,492.7 L542.9,488.4 L541.1,484.1 L539.4,479.9 L537.8,475.8 L536.3,471.8 L535.0,468.0 L533.7,464.3 L532.6,460.7 L531.6,457.3 L530.8,454.1 L530.1,451.1 L529.5,448.3 L529.2,445.8 L528.9,443.5 L528.9,441.4 L528.9,439.6 L529.1,438.1 L529.4,436.9 L529.8,436.0 L530.3,435.5 L530.9,435.2 L531.6,435.3 L532.3,435.6 L533.0,436.4 L533.8,437.4 L534.5,438.8 L535.2,440.4 L535.9,442.4 L536.6,444.7 L537.2,447.3 L537.7,450.2 L538.1,453.3 L538.5,456.7 L538.8,460.3 L538.9,464.1 L539.0,468.2 L538.9,472.4 L538.8,476.7 L538.6,481.3 L538.2,485.9 L537.8,490.6 L537.4,495.4 L536.8,500.3 L536.3,505.1 L535.7,510.0 L535.1,514.9 L534.5,519.8 L534.0,524.5 L533.5,529.3 L533.0,533.9 L532.7,538.3 L532.5,542.7 L532.5,546.8 L532.6,550.8 L532.8,554.6 L533.3,558.1 L533.9,561.3 L534.7,564.3 L535.7,566.9 L536.9,569.3 L538.3,571.3 L539.8,572.9 L541.5,574.2 L543.2,575.1 L545.1,575.6 L547.0,575.7 L548.9,575.4 L550.7,574.7 L552.6,573.6" fill="none" stroke="#f09c60" stroke-opacity="1" stroke-width="1.6" stroke-dasharray="1.8,3.2"/><path d="M495.5,580.8 L497.2,579.5 L498.8,577.9 L500.3,575.9 L501.6,573.6 L502.8,571.0 L503.7,568.1 L504.3,565.0 L504.8,561.6 L505.0,558.0 L505.0,554.2 L504.8,550.2 L504.4,546.1 L503.8,541.9 L503.1,537.5 L502.2,533.1 L501.1,528.5 L500.0,524.0 L498.8,519.4 L497.5,514.8 L496.2,510.1 L494.9,505.5 L493.7,501.0 L492.4,496.4 L491.2,492.0 L490.1,487.6 L489.0,483.4 L488.1,479.2 L487.3,475.2 L486.5,471.4 L485.9,467.7 L485.4,464.2 L485.1,460.9 L484.9,457.9 L484.8,455.1 L484.8,452.5 L484.9,450.2 L485.2,448.2 L485.5,446.5 L485.9,445.1 L486.4,444.0 L487.0,443.2 L487.6,442.7 L488.2,442.6 L488.8,442.8 L489.5,443.3 L490.1,444.1 L490.6,445.3 L491.2,446.7 L491.6,448.5 L492.0,450.6 L492.3,452.9 L492.5,455.5 L492.6,458.4 L492.5,461.6 L492.4,464.9 L492.1,468.5 L491.7,472.2 L491.2,476.2 L490.6,480.3 L489.9,484.5 L489.0,488.9 L488.1,493.3 L487.2,497.9 L486.1,502.5 L485.0,507.1 L483.9,511.8 L482.8,516.5 L481.7,521.2 L480.6,525.8 L479.6,530.4 L478.7,534.9 L477.9,539.4 L477.2,543.7 L476.7,547.9 L476.3,552.0 L476.1,555.9 L476.1,559.6 L476.4,563.1 L476.8,566.4 L477.5,569.5 L478.3,572.2 L479.4,574.7 L480.7,576.8 L482.2,578.6 L483.8,580.1 L485.5,581.2 L487.3,582.0 L489.2,582.3 L491.1,582.3 L493.0,581.9 L494.9,581.1" fill="none" stroke="#f09c60" stroke-opacity="1" stroke-width="1.6" stroke-dasharray="1.8,3.2"/><path d="M437.5,580.1 L439.3,579.1 L441.0,577.7 L442.6,575.9 L444.0,573.8 L445.2,571.4 L446.3,568.7 L447.1,565.6 L447.8,562.3 L448.2,558.8 L448.5,555.0 L448.5,551.1 L448.4,546.9 L448.2,542.6 L447.8,538.2 L447.3,533.6 L446.6,529.0 L446.0,524.3 L445.2,519.5 L444.5,514.7 L443.7,509.9 L442.9,505.1 L442.2,500.4 L441.5,495.7 L440.8,491.1 L440.3,486.5 L439.8,482.1 L439.4,477.9 L439.1,473.8 L439.0,469.8 L438.9,466.1 L438.9,462.6 L439.1,459.3 L439.3,456.2 L439.6,453.4 L440.0,450.9 L440.5,448.6 L441.1,446.7 L441.7,445.1 L442.3,443.8 L443.0,442.8 L443.6,442.1 L444.3,441.8 L444.9,441.7 L445.5,442.0 L446.1,442.7 L446.5,443.6 L446.9,444.9 L447.2,446.4 L447.4,448.2 L447.4,450.3 L447.3,452.7 L447.1,455.3 L446.8,458.2 L446.3,461.3 L445.6,464.6 L444.9,468.1 L443.9,471.7 L442.9,475.5 L441.7,479.5 L440.5,483.5 L439.1,487.7 L437.6,492.0 L436.1,496.3 L434.5,500.7 L432.9,505.1 L431.3,509.6 L429.7,514.1 L428.1,518.5 L426.6,523.0 L425.2,527.4 L423.8,531.8 L422.6,536.1 L421.6,540.4 L420.7,544.5 L420.1,548.5 L419.6,552.4 L419.4,556.2 L419.4,559.7 L419.6,563.1 L420.1,566.2 L420.9,569.1 L421.8,571.8 L423.0,574.1 L424.4,576.1 L425.9,577.8 L427.6,579.2 L429.4,580.2 L431.2,580.8 L433.2,581.0 L435.1,580.9 L437.0,580.4" fill="none" stroke="#f09c60" stroke-opacity="1" stroke-width="1.6" stroke-dasharray="1.8,3.2"/><path d="M380.0,571.3 L381.8,570.5 L383.6,569.3 L385.2,567.7 L386.7,565.7 L388.0,563.4 L389.2,560.8 L390.2,557.8 L391.1,554.6 L391.7,551.0 L392.2,547.2 L392.6,543.2 L392.8,539.0 L392.9,534.6 L392.9,530.0 L392.8,525.3 L392.6,520.6 L392.4,515.7 L392.2,510.7 L391.9,505.8 L391.7,500.8 L391.5,495.9 L391.4,490.9 L391.3,486.1 L391.2,481.3 L391.3,476.7 L391.4,472.2 L391.6,467.8 L391.9,463.6 L392.3,459.6 L392.7,455.9 L393.3,452.3 L393.9,449.1 L394.6,446.0 L395.4,443.3 L396.2,440.9 L397.0,438.7 L397.9,436.9 L398.7,435.4 L399.6,434.2 L400.4,433.3 L401.2,432.8 L401.9,432.6 L402.5,432.7 L403.0,433.1 L403.4,433.8 L403.7,434.8 L403.9,436.2 L403.9,437.8 L403.8,439.6 L403.5,441.8 L403.1,444.1 L402.5,446.7 L401.7,449.5 L400.7,452.5 L399.6,455.7 L398.3,459.0 L396.9,462.5 L395.3,466.1 L393.6,469.9 L391.8,473.8 L389.9,477.7 L387.9,481.8 L385.8,485.9 L383.7,490.0 L381.6,494.2 L379.5,498.5 L377.4,502.8 L375.4,507.0 L373.4,511.3 L371.5,515.6 L369.8,519.8 L368.2,524.1 L366.8,528.2 L365.6,532.3 L364.6,536.4 L363.9,540.3 L363.4,544.1 L363.1,547.7 L363.2,551.2 L363.5,554.5 L364.0,557.6 L364.8,560.5 L365.9,563.0 L367.1,565.3 L368.6,567.3 L370.2,568.9 L371.9,570.2 L373.7,571.1 L375.6,571.6 L377.5,571.7 L379.4,571.4" fill="none" stroke="#f09c60" stroke-opacity="1" stroke-width="1.6" stroke-dasharray="1.8,3.2"/><path d="M323.6,553.9 L325.4,553.3 L327.2,552.3 L328.9,550.9 L330.5,549.1 L331.9,546.8 L333.3,544.3 L334.5,541.3 L335.5,538.1 L336.5,534.5 L337.3,530.6 L337.9,526.5 L338.5,522.2 L339.0,517.6 L339.4,512.9 L339.8,508.1 L340.2,503.1 L340.5,498.1 L340.8,492.9 L341.1,487.8 L341.5,482.7 L341.9,477.5 L342.4,472.5 L343.0,467.5 L343.6,462.6 L344.3,457.9 L345.1,453.3 L345.9,448.9 L346.8,444.7 L347.8,440.7 L348.9,437.0 L350.0,433.5 L351.1,430.3 L352.3,427.3 L353.5,424.7 L354.7,422.4 L355.9,420.4 L357.0,418.7 L358.1,417.3 L359.2,416.3 L360.1,415.6 L360.9,415.2 L361.7,415.1 L362.3,415.3 L362.7,415.9 L363.0,416.7 L363.1,417.8 L363.1,419.2 L362.8,420.8 L362.4,422.7 L361.7,424.8 L360.9,427.1 L359.9,429.6 L358.7,432.3 L357.2,435.1 L355.6,438.1 L353.8,441.3 L351.9,444.6 L349.8,448.0 L347.6,451.5 L345.2,455.1 L342.8,458.8 L340.2,462.6 L337.6,466.4 L335.0,470.3 L332.4,474.2 L329.7,478.3 L327.2,482.3 L324.6,486.4 L322.2,490.5 L319.9,494.6 L317.7,498.7 L315.7,502.8 L313.9,506.9 L312.3,511.0 L310.9,515.1 L309.9,519.1 L309.0,523.0 L308.5,526.8 L308.3,530.4 L308.3,534.0 L308.7,537.3 L309.3,540.4 L310.2,543.3 L311.3,545.8 L312.6,548.1 L314.1,550.1 L315.7,551.6 L317.5,552.8 L319.3,553.6 L321.1,554.0 L323.0,554.0" fill="none" stroke="#f09c60" stroke-opacity="1" stroke-width="1.6" stroke-dasharray="1.8,3.2"/><path d="M274.7,525.0 L276.4,523.3 L278.0,521.1 L279.5,518.6 L280.9,515.6 L282.2,512.3 L283.5,508.7 L284.6,504.7 L285.7,500.5 L286.7,496.0 L287.7,491.3 L288.6,486.4 L289.5,481.4 L290.5,476.2 L291.4,471.0 L292.4,465.7 L293.4,460.4 L294.5,455.1 L295.6,449.9 L296.9,444.7 L298.1,439.6 L299.5,434.7 L300.9,429.9 L302.4,425.3 L304.0,420.9 L305.6,416.8 L307.2,412.8 L308.9,409.2 L310.6,405.8 L312.3,402.8 L314.0,400.0 L315.6,397.5 L317.2,395.4 L318.7,393.6 L320.1,392.1 L321.5,390.9 L322.7,390.1 L323.7,389.5 L324.6,389.3 L325.4,389.4 L325.9,389.8 L326.2,390.4 L326.4,391.3 L326.3,392.4 L326.0,393.8 L325.4,395.4 L324.6,397.3 L323.6,399.3 L322.4,401.5 L320.9,403.8 L319.3,406.3 L317.4,409.0 L315.3,411.8 L313.0,414.7 L310.5,417.7 L307.9,420.8 L305.1,424.0 L302.2,427.3 L299.2,430.6 L296.2,434.1 L293.0,437.6 L289.8,441.1 L286.7,444.8 L283.5,448.5 L280.4,452.3 L277.3,456.1 L274.4,460.0 L271.5,463.9 L268.9,467.9 L266.4,471.9 L264.1,476.0 L262.1,480.0 L260.3,484.1 L258.8,488.2 L257.6,492.2 L256.7,496.2 L256.1,500.1 L255.9,503.9" fill="none" stroke="#f09c60" stroke-opacity="1" stroke-width="1.6" stroke-dasharray="1.8,3.2"/><path d="M235.7,468.7 L237.3,464.3 L238.8,459.7 L240.4,454.8 L242.0,449.8 L243.6,444.6 L245.2,439.2 L246.9,433.9 L248.7,428.4 L250.5,423.0 L252.5,417.6 L254.4,412.3 L256.5,407.1 L258.6,402.1 L260.8,397.2 L263.1,392.4 L265.4,387.9 L267.7,383.7 L270.0,379.7 L272.4,375.9 L274.7,372.5 L277.1,369.4 L279.3,366.5 L281.5,364.0 L283.6,361.8 L285.6,360.0 L287.4,358.4 L289.1,357.2 L290.7,356.3 L292.0,355.6 L293.2,355.3 L294.1,355.3 L294.8,355.5 L295.2,356.0 L295.4,356.7 L295.4,357.7 L295.1,358.9 L294.5,360.2 L293.6,361.8 L292.5,363.5 L291.1,365.4 L289.5,367.4 L287.6,369.5 L285.4,371.7 L283.0,374.1 L280.5,376.6 L277.7,379.1 L274.7,381.7 L271.5,384.4 L268.2,387.2 L264.8,390.0 L261.2,393.0 L257.6,395.9 L253.9,399.0 L250.2,402.2 L246.4,405.4 L242.7,408.7 L239.0,412.1 L235.4,415.6 L231.8,419.2 L228.5,422.8 L225.2,426.6 L222.2,430.5 L219.4,434.4" fill="none" stroke="#f09c60" stroke-opacity="1" stroke-width="1.6" stroke-dasharray="1.8,3.2"/><path d="M209.4,386.0 L212.1,380.6 L214.9,375.2 L217.8,369.8 L220.8,364.6 L223.8,359.5 L226.9,354.6 L230.1,349.8 L233.3,345.4 L236.4,341.1 L239.6,337.1 L242.8,333.5 L245.9,330.1 L248.9,327.0 L251.9,324.2 L254.7,321.8 L257.4,319.7 L260.0,317.9 L262.3,316.4 L264.5,315.2 L266.4,314.3 L268.1,313.7 L269.6,313.4 L270.7,313.3 L271.7,313.5 L272.3,313.9 L272.6,314.5 L272.6,315.3 L272.3,316.3 L271.8,317.4 L270.9,318.7 L269.7,320.1 L268.2,321.6 L266.4,323.2 L264.4,325.0 L262.0,326.8 L259.5,328.6 L256.6,330.6 L253.6,332.5 L250.3,334.6 L246.8,336.7 L243.1,338.8 L239.3,341.0 L235.4,343.3 L231.3,345.6 L227.1,347.9 L222.8,350.4 L218.6,353.0 L214.2,355.6 L209.9,358.3 L205.6,361.2" fill="none" stroke="#f09c60" stroke-opacity="1" stroke-width="1.6" stroke-dasharray="1.8,3.2"/><path d="M210.7,292.9 L214.8,288.9 L219.0,285.2 L223.0,281.8 L227.0,278.7 L230.9,275.9 L234.6,273.4 L238.2,271.2 L241.6,269.3 L244.7,267.8 L247.6,266.5 L250.3,265.6 L252.7,264.9 L254.8,264.4 L256.6,264.2 L258.1,264.2 L259.2,264.5 L260.1,264.9 L260.6,265.4 L260.7,266.1 L260.5,267.0 L260.0,267.9 L259.1,269.0 L257.9,270.1 L256.4,271.3 L254.6,272.5 L252.5,273.8 L250.0,275.0 L247.3,276.3 L244.3,277.7 L241.1,279.0 L237.6,280.3 L233.9,281.7 L230.0,283.0 L226.0,284.4 L221.7,285.8 L217.3,287.2 L212.8,288.7" fill="none" stroke="#f09c60" stroke-opacity="1" stroke-width="1.6" stroke-dasharray="1.8,3.2"/><path d="M239.7,212.1 L243.4,211.1 L246.9,210.4 L250.1,209.8 L252.9,209.6 L255.4,209.5 L257.5,209.6 L259.3,209.9 L260.7,210.3 L261.7,210.8 L262.4,211.5 L262.7,212.2 L262.6,213.0 L262.2,213.8 L261.4,214.6 L260.3,215.5 L258.8,216.3 L257.0,217.1 L254.9,217.9 L252.5,218.7 L249.8,219.4 L246.8,220.0 L243.6,220.6 L240.1,221.1 L236.4,221.6" fill="none" stroke="#f09c60" stroke-opacity="1" stroke-width="1.6" stroke-dasharray="1.8,3.2"/><path d="M281.3,156.0 L281.7,156.9 L281.7,157.7 L281.4,158.5 L280.7,159.2 L279.7,159.8 L278.3,160.4 L276.6,160.8" fill="none" stroke="#f09c60" stroke-opacity="1" stroke-width="1.6" stroke-dasharray="1.8,3.2"/></g>
<path d="M657.8,490.9 L660.3,487.6 L662.8,484.3 L665.2,481.0 L667.5,477.5 L669.8,474.1 L672.0,470.6 L674.2,467.1 L676.3,463.5 L678.3,459.9 L680.3,456.3 L682.2,452.6 L684.0,448.9 L685.8,445.2 L687.5,441.4 L689.2,437.6 L690.8,433.8 L692.3,429.9 L693.7,426.1 L695.1,422.2 L696.4,418.2 L697.7,414.3 L698.8,410.3 L700.0,406.3 L701.0,402.3 L702.0,398.3 L702.9,394.3 L703.7,390.2 L704.4,386.2 L705.1,382.1 L705.7,378.0 L706.3,373.9 L706.7,369.8 L707.1,365.7 L707.5,361.5 L707.7,357.4 L707.9,353.3 L708.0,349.1 L708.0,345.0 L708.0,340.9 L707.9,336.7 L707.7,332.6 L707.5,328.5 L707.1,324.3 L706.7,320.2 L706.3,316.1 L705.7,312.0 L705.1,307.9 L704.4,303.8 L703.7,299.8 L702.9,295.7 L702.0,291.7 L701.0,287.7 L700.0,283.7 L698.8,279.7 L697.7,275.7 L696.4,271.8 L695.1,267.8 L693.7,263.9 L692.3,260.1 L690.8,256.2 L689.2,252.4 L687.5,248.6 L685.8,244.8 L684.0,241.1 L682.2,237.4 L680.3,233.7 L678.3,230.1 L676.3,226.5 L674.2,222.9 L672.0,219.4 L669.8,215.9 L667.5,212.5 L665.2,209.0 L662.8,205.7 L660.3,202.4 L657.8,199.1 L655.2,195.8 L652.6,192.6 L649.9,189.5 L647.1,186.4 L644.4,183.3 L641.5,180.3 L638.6,177.4 L635.7,174.5 L632.7,171.6 L629.6,168.9 L626.5,166.1 L623.4,163.4 L620.2,160.8 L616.9,158.2 L613.6,155.7 L610.3,153.2 L607.0,150.8 L603.5,148.5 L600.1,146.2 L596.6,144.0 L593.1,141.8 L589.5,139.7 L585.9,137.7 L582.3,135.7 L578.6,133.8 L574.9,132.0 L571.2,130.2 L567.4,128.5 L563.6,126.8 L559.8,125.2 L555.9,123.7 L552.1,122.3 L548.2,120.9 L544.2,119.6 L540.3,118.3 L536.3,117.2 L532.3,116.0 L528.3,115.0 L524.3,114.0 L520.3,113.1 L516.2,112.3 L512.2,111.6 L508.1,110.9 L504.0,110.3 L499.9,109.7 L495.8,109.3 L491.7,108.9 L487.5,108.5 L483.4,108.3 L479.3,108.1 L475.1,108.0 L471.0,108.0 L466.9,108.0 L462.7,108.1 L458.6,108.3 L454.5,108.5 L450.3,108.9 L446.2,109.3 L442.1,109.7 L438.0,110.3 L433.9,110.9 L429.8,111.6 L425.8,112.3 L421.7,113.1 L417.7,114.0 L413.7,115.0 L409.7,116.0 L405.7,117.2 L401.7,118.3 L397.8,119.6 L393.8,120.9 L389.9,122.3 L386.1,123.7 L382.2,125.2 L378.4,126.8 L374.6,128.5 L370.8,130.2 L367.1,132.0 L363.4,133.8 L359.7,135.7 L356.1,137.7 L352.5,139.7 L348.9,141.8 L345.4,144.0 L341.9,146.2 L338.5,148.5 L335.0,150.8 L331.7,153.2 L328.4,155.7 L325.1,158.2 L321.8,160.8 L318.6,163.4 L315.5,166.1 L312.4,168.9 L309.3,171.6 L306.3,174.5 L303.4,177.4 L300.5,180.3 L297.6,183.3 L294.9,186.4 L292.1,189.5 L289.4,192.6 L286.8,195.8 L284.2,199.1 L281.7,202.4 L279.2,205.7 L276.8,209.0 L274.5,212.5 L272.2,215.9 L270.0,219.4 L267.8,222.9 L265.7,226.5 L263.7,230.1 L261.7,233.7 L259.8,237.4 L258.0,241.1 L256.2,244.8 L254.5,248.6 L252.8,252.4 L251.2,256.2 L249.7,260.1 L248.3,263.9 L246.9,267.8 L245.6,271.8 L244.3,275.7 L243.2,279.7 L242.0,283.7 L241.0,287.7 L240.0,291.7 L239.1,295.7 L238.3,299.8 L237.6,303.8 L236.9,307.9 L236.3,312.0 L235.7,316.1 L235.3,320.2 L234.9,324.3 L234.5,328.5 L234.3,332.6 L234.1,336.7 L234.0,340.9 L234.0,345.0 L234.0,349.1 L234.1,353.3 L234.3,357.4 L234.5,361.5 L234.9,365.7 L235.3,369.8 L235.7,373.9 L236.3,378.0 L236.9,382.1 L237.6,386.2 L238.3,390.2 L239.1,394.3 L240.0,398.3 L241.0,402.3 L242.0,406.3 L243.2,410.3 L244.3,414.3 L245.6,418.2 L246.9,422.2 L248.3,426.1 L249.7,429.9 L251.2,433.8 L252.8,437.6 L254.5,441.4 L256.2,445.2 L258.0,448.9 L259.8,452.6 L261.7,456.3 L263.7,459.9 L265.7,463.5 L267.8,467.1 L270.0,470.6 L272.2,474.1 L274.5,477.5 L276.8,481.0 L279.2,484.3 L281.7,487.6 L284.2,490.9" fill="none" stroke="#e0205a" stroke-width="1" stroke-opacity="0.75"/>
<path d="M657.8,490.9 L655.2,494.2 L652.6,497.4 L649.9,500.5 L647.1,503.6 L644.4,506.7 L641.5,509.7 L638.6,512.6 L635.7,515.5 L632.7,518.4 L629.6,521.1 L626.5,523.9 L623.4,526.6 L620.2,529.2 L616.9,531.8 L613.6,534.3 L610.3,536.8 L607.0,539.2 L603.5,541.5 L600.1,543.8 L596.6,546.0 L593.1,548.2 L589.5,550.3 L585.9,552.3 L582.3,554.3 L578.6,556.2 L574.9,558.0 L571.2,559.8 L567.4,561.5 L563.6,563.2 L559.8,564.8 L555.9,566.3 L552.1,567.7 L548.2,569.1 L544.2,570.4 L540.3,571.7 L536.3,572.8 L532.3,574.0 L528.3,575.0 L524.3,576.0 L520.3,576.9 L516.2,577.7 L512.2,578.4 L508.1,579.1 L504.0,579.7 L499.9,580.3 L495.8,580.7 L491.7,581.1 L487.5,581.5 L483.4,581.7 L479.3,581.9 L475.1,582.0 L471.0,582.0 L466.9,582.0 L462.7,581.9 L458.6,581.7 L454.5,581.5 L450.3,581.1 L446.2,580.7 L442.1,580.3 L438.0,579.7 L433.9,579.1 L429.8,578.4 L425.8,577.7 L421.7,576.9 L417.7,576.0 L413.7,575.0 L409.7,574.0 L405.7,572.8 L401.7,571.7 L397.8,570.4 L393.8,569.1 L389.9,567.7 L386.1,566.3 L382.2,564.8 L378.4,563.2 L374.6,561.5 L370.8,559.8 L367.1,558.0 L363.4,556.2 L359.7,554.3 L356.1,552.3 L352.5,550.3 L348.9,548.2 L345.4,546.0 L341.9,543.8 L338.5,541.5 L335.0,539.2 L331.7,536.8 L328.4,534.3 L325.1,531.8 L321.8,529.2 L318.6,526.6 L315.5,523.9 L312.4,521.1 L309.3,518.4 L306.3,515.5 L303.4,512.6 L300.5,509.7 L297.6,506.7 L294.9,503.6 L292.1,500.5 L289.4,497.4 L286.8,494.2 L284.2,490.9" fill="none" stroke="#a03040" stroke-width="1" stroke-dasharray="4,3" stroke-opacity="0.8"/>
<circle cx="471.0" cy="108.0" r="2.1" fill="#f01020"/>
<path d="M498.6,610.6 L494.6,603.9 L501.0,603.3 Z" fill="#e8102a"/>
<line x1="471.8" y1="353.0" x2="498.7" y2="611.6" stroke="#e0205a" stroke-width="1.3" stroke-opacity="0.6" stroke-dasharray="6,3"/>
<path d="M663.6,531.4 L661.5,533.5 L659.1,535.2 L656.4,536.6 L653.7,538.0 L651.0,539.4 L648.3,540.8 L645.6,542.1 L642.9,543.4 L640.1,544.7 L637.4,545.9 L634.7,547.2 L631.9,548.4 L629.2,549.6 L626.4,550.7 L623.6,551.9 L620.9,553.0 L618.1,554.1 L615.3,555.1 L612.5,556.2 L609.7,557.2 L606.9,558.2 L604.1,559.2 L601.3,560.2 L598.5,561.1 L595.7,562.0 L592.9,562.9 L590.1,563.8 L587.3,564.7 L584.4,565.5 L581.6,566.3 L578.8,567.1 L575.9,567.9 L573.1,568.6 L570.2,569.3 L567.4,570.0 L564.5,570.7 L561.7,571.4 L558.8,572.0 L556.0,572.6 L553.1,573.2 L550.2,573.8 L547.4,574.3 L544.5,574.9 L541.6,575.4 L538.8,575.9 L535.9,576.4 L533.0,576.8 L530.1,577.2 L527.2,577.6 L524.4,578.0 L521.5,578.4 L518.6,578.7 L515.7,579.1 L512.8,579.4 L509.9,579.7 L507.0,579.9 L504.1,580.2 L501.2,580.4 L498.4,580.6 L495.5,580.8 L492.6,580.9 L489.7,581.1 L486.8,581.2 L483.9,581.3 L481.0,581.4 L478.1,581.4 L475.2,581.5 L472.3,581.5 L469.4,581.5 L466.5,581.5 L463.6,581.4 L460.7,581.4 L457.8,581.3 L454.9,581.2 L452.0,581.0 L449.1,580.9 L446.2,580.7 L443.3,580.6 L440.4,580.3 L437.5,580.1 L434.6,579.9 L431.7,579.6 L428.9,579.3 L426.0,579.0 L423.1,578.7 L420.2,578.3 L417.3,578.0 L414.4,577.6 L411.5,577.2 L408.7,576.7 L405.8,576.3 L402.9,575.8 L400.0,575.3 L397.2,574.8 L394.3,574.3 L391.4,573.7 L388.6,573.1 L385.7,572.5 L382.9,571.9 L380.0,571.3 L377.1,570.6 L374.3,569.9 L371.4,569.2 L368.6,568.5 L365.8,567.7 L362.9,567.0 L360.1,566.2 L357.3,565.4 L354.4,564.5 L351.6,563.7 L348.8,562.8 L346.0,561.9 L343.2,561.0 L340.4,560.0 L337.5,559.1 L334.8,558.1 L332.0,557.1 L329.2,556.0 L326.4,555.0 L323.6,553.9 L320.8,552.8 L318.1,551.7 L315.3,550.5 L312.5,549.4 L309.8,548.2 L307.0,547.0 L304.3,545.7 L301.6,544.5 L298.8,543.2 L296.1,541.9 L293.4,540.5 L290.7,539.2 L288.0,537.8 L285.3,536.4 L282.6,535.0 L280.2,533.2 L278.2,531.1" fill="none" stroke="#ff2a1a" stroke-width="2.6" clip-path="url(#dc)"/>
<circle cx="662.9" cy="530.8" r="3.6" fill="#fff" stroke="#e8201a" stroke-width="1.6"/><text x="662.9" y="524.8" text-anchor="middle" font-family="Liberation Sans" font-size="10" fill="#c03040">09</text><circle cx="609.7" cy="557.2" r="3.6" fill="#fff" stroke="#e8201a" stroke-width="1.6"/><text x="609.7" y="551.2" text-anchor="middle" font-family="Liberation Sans" font-size="10" fill="#c03040">10</text><circle cx="553.1" cy="573.2" r="3.6" fill="#fff" stroke="#e8201a" stroke-width="1.6"/><text x="553.1" y="567.2" text-anchor="middle" font-family="Liberation Sans" font-size="10" fill="#c03040">11</text><circle cx="437.5" cy="580.1" r="3.6" fill="#fff" stroke="#e8201a" stroke-width="1.6"/><text x="437.5" y="574.1" text-anchor="middle" font-family="Liberation Sans" font-size="10" fill="#c03040">13</text><circle cx="380.0" cy="571.3" r="3.6" fill="#fff" stroke="#e8201a" stroke-width="1.6"/><text x="380.0" y="565.3" text-anchor="middle" font-family="Liberation Sans" font-size="10" fill="#c03040">14</text><circle cx="323.6" cy="553.9" r="3.6" fill="#fff" stroke="#e8201a" stroke-width="1.6"/><text x="323.6" y="547.9" text-anchor="middle" font-family="Liberation Sans" font-size="10" fill="#c03040">15</text>
<circle cx="495.5" cy="580.8" r="7.6" fill="none" stroke="#f8e040" stroke-width="2.4" stroke-opacity="0.75"/>
<circle cx="495.5" cy="580.8" r="4.7" fill="#fff" stroke="#e00010" stroke-width="3.8"/>
<text x="495.5" y="572.8" text-anchor="middle" font-family="Liberation Sans" font-size="10" fill="#c03040">12</text>
<circle cx="471.0" cy="345.0" r="268.0" fill="none" stroke="#111" stroke-width="1.7"/>
<path d="M471.0,77.0L471.0,70.8M494.4,78.0L494.9,71.8M517.5,81.1L518.6,75.0M540.4,86.1L542.0,80.1M562.7,93.2L564.8,87.3M584.3,102.1L586.9,96.5M605.0,112.9L608.1,107.5M624.7,125.5L628.3,120.4M643.3,139.7L647.3,135.0M660.5,155.5L664.9,151.1M676.3,172.7L681.0,168.7M690.5,191.3L695.6,187.7M703.1,211.0L708.5,207.9M713.9,231.7L719.5,229.1M722.8,253.3L728.7,251.2M729.9,275.6L735.9,274.0M734.9,298.5L741.0,297.4M738.0,321.6L744.2,321.1M739.0,345.0L745.2,345.0M738.0,368.4L744.2,368.9M734.9,391.5L741.0,392.6M729.9,414.4L735.9,416.0M722.8,436.7L728.7,438.8M713.9,458.3L719.5,460.9M703.1,479.0L708.5,482.1M690.5,498.7L695.6,502.3M676.3,517.3L681.0,521.3M660.5,534.5L664.9,538.9M643.3,550.3L647.3,555.0M624.7,564.5L628.3,569.6M605.0,577.1L608.1,582.5M584.3,587.9L586.9,593.5M562.7,596.8L564.8,602.7M540.4,603.9L542.0,609.9M517.5,608.9L518.6,615.0M494.4,612.0L494.9,618.2M471.0,613.0L471.0,619.2M447.6,612.0L447.1,618.2M424.5,608.9L423.4,615.0M401.6,603.9L400.0,609.9M379.3,596.8L377.2,602.7M357.7,587.9L355.1,593.5M337.0,577.1L333.9,582.5M317.3,564.5L313.7,569.6M298.7,550.3L294.7,555.0M281.5,534.5L277.1,538.9M265.7,517.3L261.0,521.3M251.5,498.7L246.4,502.3M238.9,479.0L233.5,482.1M228.1,458.3L222.5,460.9M219.2,436.7L213.3,438.8M212.1,414.4L206.1,416.0M207.1,391.5L201.0,392.6M204.0,368.4L197.8,368.9M203.0,345.0L196.8,345.0M204.0,321.6L197.8,321.1M207.1,298.5L201.0,297.4M212.1,275.6L206.1,274.0M219.2,253.3L213.3,251.2M228.1,231.7L222.5,229.1M238.9,211.0L233.5,207.9M251.5,191.3L246.4,187.7M265.7,172.7L261.0,168.7M281.5,155.5L277.1,151.1M298.7,139.7L294.7,135.0M317.3,125.5L313.7,120.4M337.0,112.9L333.9,107.5M357.7,102.1L355.1,96.5M379.3,93.2L377.2,87.3M401.6,86.1L400.0,80.1M424.5,81.1L423.4,75.0M447.6,78.0L447.1,71.8" stroke="#111" stroke-width="1.15" fill="none"/>
<path d="M475.7,77.0L475.8,72.6M480.4,77.2L480.5,72.8M485.0,77.4L485.3,73.0M489.7,77.7L490.0,73.3M499.0,78.5L499.5,74.1M503.7,79.0L504.2,74.6M508.3,79.6L508.9,75.3M512.9,80.3L513.6,76.0M522.1,81.9L523.0,77.6M526.7,82.9L527.6,78.6M531.3,83.9L532.3,79.6M535.8,85.0L536.9,80.7M544.9,87.4L546.1,83.2M549.4,88.7L550.6,84.5M553.8,90.1L555.2,85.9M558.3,91.6L559.7,87.4M567.0,94.8L568.6,90.7M571.4,96.5L573.0,92.4M575.7,98.3L577.4,94.3M580.0,100.2L581.8,96.2M588.5,104.1L590.4,100.2M592.7,106.2L594.7,102.3M596.8,108.4L598.9,104.5M600.9,110.6L603.1,106.8M609.0,115.3L611.3,111.5M613.0,117.7L615.4,114.0M617.0,120.2L619.4,116.5M620.9,122.8L623.3,119.2M628.5,128.2L631.1,124.6M632.3,131.0L634.9,127.5M636.0,133.8L638.7,130.3M639.7,136.7L642.4,133.3M646.8,142.7L649.7,139.4M650.3,145.8L653.3,142.6M653.8,149.0L656.8,145.8M657.2,152.2L660.2,149.1M663.8,158.8L666.9,155.8M667.0,162.2L670.2,159.2M670.2,165.7L673.4,162.7M673.3,169.2L676.6,166.3M679.3,176.3L682.7,173.6M682.2,180.0L685.7,177.3M685.0,183.7L688.5,181.1M687.8,187.5L691.4,184.9M693.2,195.1L696.8,192.7M695.8,199.0L699.5,196.6M698.3,203.0L702.0,200.6M700.7,207.0L704.5,204.7M705.4,215.1L709.2,212.9M707.6,219.2L711.5,217.1M709.8,223.3L713.7,221.3M711.9,227.5L715.8,225.6M715.8,236.0L719.8,234.2M717.7,240.3L721.7,238.6M719.5,244.6L723.6,243.0M721.2,249.0L725.3,247.4M724.4,257.7L728.6,256.3M725.9,262.2L730.1,260.8M727.3,266.6L731.5,265.4M728.6,271.1L732.8,269.9M731.0,280.2L735.3,279.1M732.1,284.7L736.4,283.7M733.1,289.3L737.4,288.4M734.1,293.9L738.4,293.0M735.7,303.1L740.0,302.4M736.4,307.7L740.7,307.1M737.0,312.3L741.4,311.8M737.5,317.0L741.9,316.5M738.3,326.3L742.7,326.0M738.6,331.0L743.0,330.7M738.8,335.6L743.2,335.5M739.0,340.3L743.4,340.2M739.0,349.7L743.4,349.8M738.8,354.4L743.2,354.5M738.6,359.0L743.0,359.3M738.3,363.7L742.7,364.0M737.5,373.0L741.9,373.5M737.0,377.7L741.4,378.2M736.4,382.3L740.7,382.9M735.7,386.9L740.0,387.6M734.1,396.1L738.4,397.0M733.1,400.7L737.4,401.6M732.1,405.3L736.4,406.3M731.0,409.8L735.3,410.9M728.6,418.9L732.8,420.1M727.3,423.4L731.5,424.6M725.9,427.8L730.1,429.2M724.4,432.3L728.6,433.7M721.2,441.0L725.3,442.6M719.5,445.4L723.6,447.0M717.7,449.7L721.7,451.4M715.8,454.0L719.8,455.8M711.9,462.5L715.8,464.4M709.8,466.7L713.7,468.7M707.6,470.8L711.5,472.9M705.4,474.9L709.2,477.1M700.7,483.0L704.5,485.3M698.3,487.0L702.0,489.4M695.8,491.0L699.5,493.4M693.2,494.9L696.8,497.3M687.8,502.5L691.4,505.1M685.0,506.3L688.5,508.9M682.2,510.0L685.7,512.7M679.3,513.7L682.7,516.4M673.3,520.8L676.6,523.7M670.2,524.3L673.4,527.3M667.0,527.8L670.2,530.8M663.8,531.2L666.9,534.2M657.2,537.8L660.2,540.9M653.8,541.0L656.8,544.2M650.3,544.2L653.3,547.4M646.8,547.3L649.7,550.6M639.7,553.3L642.4,556.7M636.0,556.2L638.7,559.7M632.3,559.0L634.9,562.5M628.5,561.8L631.1,565.4M620.9,567.2L623.3,570.8M617.0,569.8L619.4,573.5M613.0,572.3L615.4,576.0M609.0,574.7L611.3,578.5M600.9,579.4L603.1,583.2M596.8,581.6L598.9,585.5M592.7,583.8L594.7,587.7M588.5,585.9L590.4,589.8M580.0,589.8L581.8,593.8M575.7,591.7L577.4,595.7M571.4,593.5L573.0,597.6M567.0,595.2L568.6,599.3M558.3,598.4L559.7,602.6M553.8,599.9L555.2,604.1M549.4,601.3L550.6,605.5M544.9,602.6L546.1,606.8M535.8,605.0L536.9,609.3M531.3,606.1L532.3,610.4M526.7,607.1L527.6,611.4M522.1,608.1L523.0,612.4M512.9,609.7L513.6,614.0M508.3,610.4L508.9,614.7M503.7,611.0L504.2,615.4M499.0,611.5L499.5,615.9M489.7,612.3L490.0,616.7M485.0,612.6L485.3,617.0M480.4,612.8L480.5,617.2M475.7,613.0L475.8,617.4M466.3,613.0L466.2,617.4M461.6,612.8L461.5,617.2M457.0,612.6L456.7,617.0M452.3,612.3L452.0,616.7M443.0,611.5L442.5,615.9M438.3,611.0L437.8,615.4M433.7,610.4L433.1,614.7M429.1,609.7L428.4,614.0M419.9,608.1L419.0,612.4M415.3,607.1L414.4,611.4M410.7,606.1L409.7,610.4M406.2,605.0L405.1,609.3M397.1,602.6L395.9,606.8M392.6,601.3L391.4,605.5M388.2,599.9L386.8,604.1M383.7,598.4L382.3,602.6M375.0,595.2L373.4,599.3M370.6,593.5L369.0,597.6M366.3,591.7L364.6,595.7M362.0,589.8L360.2,593.8M353.5,585.9L351.6,589.8M349.3,583.8L347.3,587.7M345.2,581.6L343.1,585.5M341.1,579.4L338.9,583.2M333.0,574.7L330.7,578.5M329.0,572.3L326.6,576.0M325.0,569.8L322.6,573.5M321.1,567.2L318.7,570.8M313.5,561.8L310.9,565.4M309.7,559.0L307.1,562.5M306.0,556.2L303.3,559.7M302.3,553.3L299.6,556.7M295.2,547.3L292.3,550.6M291.7,544.2L288.7,547.4M288.2,541.0L285.2,544.2M284.8,537.8L281.8,540.9M278.2,531.2L275.1,534.2M275.0,527.8L271.8,530.8M271.8,524.3L268.6,527.3M268.7,520.8L265.4,523.7M262.7,513.7L259.3,516.4M259.8,510.0L256.3,512.7M257.0,506.3L253.5,508.9M254.2,502.5L250.6,505.1M248.8,494.9L245.2,497.3M246.2,491.0L242.5,493.4M243.7,487.0L240.0,489.4M241.3,483.0L237.5,485.3M236.6,474.9L232.8,477.1M234.4,470.8L230.5,472.9M232.2,466.7L228.3,468.7M230.1,462.5L226.2,464.4M226.2,454.0L222.2,455.8M224.3,449.7L220.3,451.4M222.5,445.4L218.4,447.0M220.8,441.0L216.7,442.6M217.6,432.3L213.4,433.7M216.1,427.8L211.9,429.2M214.7,423.4L210.5,424.6M213.4,418.9L209.2,420.1M211.0,409.8L206.7,410.9M209.9,405.3L205.6,406.3M208.9,400.7L204.6,401.6M207.9,396.1L203.6,397.0M206.3,386.9L202.0,387.6M205.6,382.3L201.3,382.9M205.0,377.7L200.6,378.2M204.5,373.0L200.1,373.5M203.7,363.7L199.3,364.0M203.4,359.0L199.0,359.3M203.2,354.4L198.8,354.5M203.0,349.7L198.6,349.8M203.0,340.3L198.6,340.2M203.2,335.6L198.8,335.5M203.4,331.0L199.0,330.7M203.7,326.3L199.3,326.0M204.5,317.0L200.1,316.5M205.0,312.3L200.6,311.8M205.6,307.7L201.3,307.1M206.3,303.1L202.0,302.4M207.9,293.9L203.6,293.0M208.9,289.3L204.6,288.4M209.9,284.7L205.6,283.7M211.0,280.2L206.7,279.1M213.4,271.1L209.2,269.9M214.7,266.6L210.5,265.4M216.1,262.2L211.9,260.8M217.6,257.7L213.4,256.3M220.8,249.0L216.7,247.4M222.5,244.6L218.4,243.0M224.3,240.3L220.3,238.6M226.2,236.0L222.2,234.2M230.1,227.5L226.2,225.6M232.2,223.3L228.3,221.3M234.4,219.2L230.5,217.1M236.6,215.1L232.8,212.9M241.3,207.0L237.5,204.7M243.7,203.0L240.0,200.6M246.2,199.0L242.5,196.6M248.8,195.1L245.2,192.7M254.2,187.5L250.6,184.9M257.0,183.7L253.5,181.1M259.8,180.0L256.3,177.3M262.7,176.3L259.3,173.6M268.7,169.2L265.4,166.3M271.8,165.7L268.6,162.7M275.0,162.2L271.8,159.2M278.2,158.8L275.1,155.8M284.8,152.2L281.8,149.1M288.2,149.0L285.2,145.8M291.7,145.8L288.7,142.6M295.2,142.7L292.3,139.4M302.3,136.7L299.6,133.3M306.0,133.8L303.3,130.3M309.7,131.0L307.1,127.5M313.5,128.2L310.9,124.6M321.1,122.8L318.7,119.2M325.0,120.2L322.6,116.5M329.0,117.7L326.6,114.0M333.0,115.3L330.7,111.5M341.1,110.6L338.9,106.8M345.2,108.4L343.1,104.5M349.3,106.2L347.3,102.3M353.5,104.1L351.6,100.2M362.0,100.2L360.2,96.2M366.3,98.3L364.6,94.3M370.6,96.5L369.0,92.4M375.0,94.8L373.4,90.7M383.7,91.6L382.3,87.4M388.2,90.1L386.8,85.9M392.6,88.7L391.4,84.5M397.1,87.4L395.9,83.2M406.2,85.0L405.1,80.7M410.7,83.9L409.7,79.6M415.3,82.9L414.4,78.6M419.9,81.9L419.0,77.6M429.1,80.3L428.4,76.0M433.7,79.6L433.1,75.3M438.3,79.0L437.8,74.6M443.0,78.5L442.5,74.1M452.3,77.7L452.0,73.3M457.0,77.4L456.7,73.0M461.6,77.2L461.5,72.8M466.3,77.0L466.2,72.6" stroke="#555" stroke-width="1" fill="none"/>
<g font-family="Liberation Sans" font-size="11" fill="#111"><text transform="translate(545.3,67.8) rotate(15)" x="0" y="4" text-anchor="middle">15<tspan font-size="9">•</tspan></text><text transform="translate(614.5,96.5) rotate(30)" x="0" y="4" text-anchor="middle">30<tspan font-size="9">•</tspan></text><text transform="translate(673.9,142.1) rotate(45)" x="0" y="4" text-anchor="middle">45<tspan font-size="9">•</tspan></text><text transform="translate(719.5,201.5) rotate(60)" x="0" y="4" text-anchor="middle">60<tspan font-size="9">•</tspan></text><text transform="translate(748.2,270.7) rotate(75)" x="0" y="4" text-anchor="middle">75<tspan font-size="9">•</tspan></text><text transform="translate(748.2,419.3) rotate(105)" x="0" y="4" text-anchor="middle">105<tspan font-size="9">•</tspan></text><text transform="translate(719.5,488.5) rotate(120)" x="0" y="4" text-anchor="middle">120<tspan font-size="9">•</tspan></text><text transform="translate(673.9,547.9) rotate(135)" x="0" y="4" text-anchor="middle">135<tspan font-size="9">•</tspan></text><text transform="translate(614.5,593.5) rotate(150)" x="0" y="4" text-anchor="middle">150<tspan font-size="9">•</tspan></text><text transform="translate(545.3,622.2) rotate(165)" x="0" y="4" text-anchor="middle">165<tspan font-size="9">•</tspan></text><text transform="translate(396.7,622.2) rotate(195)" x="0" y="4" text-anchor="middle">-165<tspan font-size="9">•</tspan></text><text transform="translate(327.5,593.5) rotate(210)" x="0" y="4" text-anchor="middle">-150<tspan font-size="9">•</tspan></text><text transform="translate(268.1,547.9) rotate(225)" x="0" y="4" text-anchor="middle">-135<tspan font-size="9">•</tspan></text><text transform="translate(222.5,488.5) rotate(240)" x="0" y="4" text-anchor="middle">-120<tspan font-size="9">•</tspan></text><text transform="translate(193.8,419.3) rotate(255)" x="0" y="4" text-anchor="middle">-105<tspan font-size="9">•</tspan></text><text transform="translate(193.8,270.7) rotate(285)" x="0" y="4" text-anchor="middle">-75<tspan font-size="9">•</tspan></text><text transform="translate(222.5,201.5) rotate(300)" x="0" y="4" text-anchor="middle">-60<tspan font-size="9">•</tspan></text><text transform="translate(268.1,142.1) rotate(315)" x="0" y="4" text-anchor="middle">-45<tspan font-size="9">•</tspan></text><text transform="translate(327.5,96.5) rotate(330)" x="0" y="4" text-anchor="middle">-30<tspan font-size="9">•</tspan></text><text transform="translate(396.7,67.8) rotate(345)" x="0" y="4" text-anchor="middle">-15<tspan font-size="9">•</tspan></text></g>
<g font-family="Liberation Sans" font-size="14" font-weight="bold" fill="#111"><text transform="translate(471.0,59.0) rotate(0)" x="0" y="5" text-anchor="middle">N</text><text transform="translate(757.0,345.0) rotate(90)" x="0" y="5" text-anchor="middle">E</text><text transform="translate(471.0,631.0) rotate(180)" x="0" y="5" text-anchor="middle">S</text><text transform="translate(185.0,345.0) rotate(270)" x="0" y="5" text-anchor="middle">W</text></g>
</svg><svg width="1360" height="647" style="position:absolute;left:0;top:0"><defs><linearGradient id="lg" x1="0" y1="0" x2="0" y2="1"><stop offset="0.00" stop-color="#ff2a6a"/><stop offset="0.10" stop-color="#ff5030"/><stop offset="0.20" stop-color="#ff8018"/><stop offset="0.30" stop-color="#c0b414"/><stop offset="0.40" stop-color="#8ce020"/><stop offset="0.50" stop-color="#40f040"/><stop offset="0.60" stop-color="#18e098"/><stop offset="0.70" stop-color="#14b0c8"/><stop offset="0.80" stop-color="#2a6ef0"/><stop offset="0.90" stop-color="#4a3cf0"/><stop offset="1.00" stop-color="#6f1aef"/></linearGradient></defs><rect x="926" y="63" width="15" height="93" fill="url(#lg)" stroke="#666" stroke-width="1"/><g font-family="Liberation Sans" font-size="10.6" fill="#111" text-anchor="end"><text x="941" y="57.5" font-size="12">cd.h/m2</text><text x="923" y="73">160714.70</text><text x="923" y="116">80357.35</text><text x="923" y="156">0.00</text></g></svg>
<div id="gap"></div>
<div id="panel"></div>
<div class="lbl" style="left:968px;top:45px;font-size:13.6px;color:#111">SKY COEFFICIENTS</div>
<div class="lbl" style="left:968px;top:63.5px">A: Horizon-Zenith Gradient</div><div class="val" style="right:15px;top:63.5px">-1.10</div>
<div class="lbl" style="left:968px;top:118.5px">B: Gradient Intensity</div><div class="val" style="right:15px;top:118.5px">-0.93</div>
<div class="lbl" style="left:968px;top:173.5px">C: Circumsolar Intensity</div><div class="val" style="right:15px;top:173.5px">11.06</div>
<div class="lbl" style="left:968px;top:228.5px">D: Circumsolar Radius</div><div class="val" style="right:15px;top:228.5px">-3.03</div>
<div class="lbl" style="left:968px;top:283.5px">E: Backscattering Effect</div><div class="val" style="right:15px;top:283.5px">0.07</div>
<svg width="1360" height="647" style="position:absolute;left:0;top:0"><g font-family="Liberation Sans" font-size="7.5" fill="#7a7a7a"><rect x="969" y="85.4" width="376" height="9.2" rx="3" fill="#dedede"/><line x1="989.5" y1="97.3" x2="989.5" y2="101.3" stroke="#c8c8c8" stroke-width="1"/><line x1="1027.5" y1="97.3" x2="1027.5" y2="101.3" stroke="#c8c8c8" stroke-width="1"/><line x1="1064.5" y1="97.3" x2="1064.5" y2="101.3" stroke="#c8c8c8" stroke-width="1"/><line x1="1101.5" y1="97.3" x2="1101.5" y2="101.3" stroke="#c8c8c8" stroke-width="1"/><line x1="1139.5" y1="97.3" x2="1139.5" y2="101.3" stroke="#c8c8c8" stroke-width="1"/><line x1="1176.5" y1="97.3" x2="1176.5" y2="101.3" stroke="#c8c8c8" stroke-width="1"/><line x1="1214.5" y1="97.3" x2="1214.5" y2="101.3" stroke="#c8c8c8" stroke-width="1"/><line x1="1251.5" y1="97.3" x2="1251.5" y2="101.3" stroke="#c8c8c8" stroke-width="1"/><line x1="1289.5" y1="97.3" x2="1289.5" y2="101.3" stroke="#c8c8c8" stroke-width="1"/><line x1="1326.5" y1="97.3" x2="1326.5" y2="101.3" stroke="#c8c8c8" stroke-width="1"/><line x1="970.5" y1="97.3" x2="970.5" y2="104.6" stroke="#a8a8a8" stroke-width="1"/><line x1="1008.5" y1="97.3" x2="1008.5" y2="104.6" stroke="#a8a8a8" stroke-width="1"/><line x1="1045.5" y1="97.3" x2="1045.5" y2="104.6" stroke="#a8a8a8" stroke-width="1"/><line x1="1083.5" y1="97.3" x2="1083.5" y2="104.6" stroke="#a8a8a8" stroke-width="1"/><line x1="1120.5" y1="97.3" x2="1120.5" y2="104.6" stroke="#a8a8a8" stroke-width="1"/><line x1="1158.5" y1="97.3" x2="1158.5" y2="104.6" stroke="#a8a8a8" stroke-width="1"/><line x1="1195.5" y1="97.3" x2="1195.5" y2="104.6" stroke="#a8a8a8" stroke-width="1"/><line x1="1233.5" y1="97.3" x2="1233.5" y2="104.6" stroke="#a8a8a8" stroke-width="1"/><line x1="1270.5" y1="97.3" x2="1270.5" y2="104.6" stroke="#a8a8a8" stroke-width="1"/><line x1="1308.5" y1="97.3" x2="1308.5" y2="104.6" stroke="#a8a8a8" stroke-width="1"/><line x1="1345.5" y1="97.3" x2="1345.5" y2="104.6" stroke="#a8a8a8" stroke-width="1"/><text x="970.3" y="112.0" text-anchor="middle">-5</text><text x="1007.8" y="112.0" text-anchor="middle">-4</text><text x="1045.2" y="112.0" text-anchor="middle">-3</text><text x="1082.7" y="112.0" text-anchor="middle">-2</text><text x="1120.2" y="112.0" text-anchor="middle">-1</text><text x="1157.7" y="112.0" text-anchor="middle">0</text><text x="1195.1" y="112.0" text-anchor="middle">1</text><text x="1232.6" y="112.0" text-anchor="middle">2</text><text x="1270.1" y="112.0" text-anchor="middle">3</text><text x="1307.5" y="112.0" text-anchor="middle">4</text><text x="1345.0" y="112.0" text-anchor="middle">5</text><rect x="1103.4" y="77.0" width="26" height="26" rx="5" fill="#f2f2f2" stroke="#8a8a8a" stroke-width="1"/><line x1="1116.4" y1="84.5" x2="1116.4" y2="95.5" stroke="#8a8a8a" stroke-width="1.3"/><line x1="1113.0" y1="87.5" x2="1113.0" y2="92.5" stroke="#8a8a8a" stroke-width="1.3"/><line x1="1119.8" y1="87.5" x2="1119.8" y2="92.5" stroke="#8a8a8a" stroke-width="1.3"/><rect x="969" y="140.4" width="376" height="9.2" rx="3" fill="#dedede"/><line x1="989.5" y1="152.3" x2="989.5" y2="156.3" stroke="#c8c8c8" stroke-width="1"/><line x1="1027.5" y1="152.3" x2="1027.5" y2="156.3" stroke="#c8c8c8" stroke-width="1"/><line x1="1064.5" y1="152.3" x2="1064.5" y2="156.3" stroke="#c8c8c8" stroke-width="1"/><line x1="1101.5" y1="152.3" x2="1101.5" y2="156.3" stroke="#c8c8c8" stroke-width="1"/><line x1="1139.5" y1="152.3" x2="1139.5" y2="156.3" stroke="#c8c8c8" stroke-width="1"/><line x1="1176.5" y1="152.3" x2="1176.5" y2="156.3" stroke="#c8c8c8" stroke-width="1"/><line x1="1214.5" y1="152.3" x2="1214.5" y2="156.3" stroke="#c8c8c8" stroke-width="1"/><line x1="1251.5" y1="152.3" x2="1251.5" y2="156.3" stroke="#c8c8c8" stroke-width="1"/><line x1="1289.5" y1="152.3" x2="1289.5" y2="156.3" stroke="#c8c8c8" stroke-width="1"/><line x1="1326.5" y1="152.3" x2="1326.5" y2="156.3" stroke="#c8c8c8" stroke-width="1"/><line x1="970.5" y1="152.3" x2="970.5" y2="159.6" stroke="#a8a8a8" stroke-width="1"/><line x1="1008.5" y1="152.3" x2="1008.5" y2="159.6" stroke="#a8a8a8" stroke-width="1"/><line x1="1045.5" y1="152.3" x2="1045.5" y2="159.6" stroke="#a8a8a8" stroke-width="1"/><line x1="1083.5" y1="152.3" x2="1083.5" y2="159.6" stroke="#a8a8a8" stroke-width="1"/><line x1="1120.5" y1="152.3" x2="1120.5" y2="159.6" stroke="#a8a8a8" stroke-width="1"/><line x1="1158.5" y1="152.3" x2="1158.5" y2="159.6" stroke="#a8a8a8" stroke-width="1"/><line x1="1195.5" y1="152.3" x2="1195.5" y2="159.6" stroke="#a8a8a8" stroke-width="1"/><line x1="1233.5" y1="152.3" x2="1233.5" y2="159.6" stroke="#a8a8a8" stroke-width="1"/><line x1="1270.5" y1="152.3" x2="1270.5" y2="159.6" stroke="#a8a8a8" stroke-width="1"/><line x1="1308.5" y1="152.3" x2="1308.5" y2="159.6" stroke="#a8a8a8" stroke-width="1"/><line x1="1345.5" y1="152.3" x2="1345.5" y2="159.6" stroke="#a8a8a8" stroke-width="1"/><text x="970.3" y="167.0" text-anchor="middle">-10</text><text x="1007.8" y="167.0" text-anchor="middle">-9</text><text x="1045.2" y="167.0" text-anchor="middle">-8</text><text x="1082.7" y="167.0" text-anchor="middle">-7</text><text x="1120.2" y="167.0" text-anchor="middle">-6</text><text x="1157.7" y="167.0" text-anchor="middle">-5</text><text x="1195.1" y="167.0" text-anchor="middle">-4</text><text x="1232.6" y="167.0" text-anchor="middle">-3</text><text x="1270.1" y="167.0" text-anchor="middle">-2</text><text x="1307.5" y="167.0" text-anchor="middle">-1</text><text x="1345.0" y="167.0" text-anchor="middle">0</text><rect x="1297.2" y="132.0" width="26" height="26" rx="5" fill="#f2f2f2" stroke="#8a8a8a" stroke-width="1"/><line x1="1310.2" y1="139.5" x2="1310.2" y2="150.5" stroke="#8a8a8a" stroke-width="1.3"/><line x1="1306.8" y1="142.5" x2="1306.8" y2="147.5" stroke="#8a8a8a" stroke-width="1.3"/><line x1="1313.6" y1="142.5" x2="1313.6" y2="147.5" stroke="#8a8a8a" stroke-width="1.3"/><rect x="969" y="195.4" width="376" height="9.2" rx="3" fill="#dedede"/><line x1="985.5" y1="207.3" x2="985.5" y2="211.3" stroke="#c8c8c8" stroke-width="1"/><line x1="1000.5" y1="207.3" x2="1000.5" y2="211.3" stroke="#c8c8c8" stroke-width="1"/><line x1="1030.5" y1="207.3" x2="1030.5" y2="211.3" stroke="#c8c8c8" stroke-width="1"/><line x1="1045.5" y1="207.3" x2="1045.5" y2="211.3" stroke="#c8c8c8" stroke-width="1"/><line x1="1075.5" y1="207.3" x2="1075.5" y2="211.3" stroke="#c8c8c8" stroke-width="1"/><line x1="1090.5" y1="207.3" x2="1090.5" y2="211.3" stroke="#c8c8c8" stroke-width="1"/><line x1="1120.5" y1="207.3" x2="1120.5" y2="211.3" stroke="#c8c8c8" stroke-width="1"/><line x1="1135.5" y1="207.3" x2="1135.5" y2="211.3" stroke="#c8c8c8" stroke-width="1"/><line x1="1165.5" y1="207.3" x2="1165.5" y2="211.3" stroke="#c8c8c8" stroke-width="1"/><line x1="1180.5" y1="207.3" x2="1180.5" y2="211.3" stroke="#c8c8c8" stroke-width="1"/><line x1="1210.5" y1="207.3" x2="1210.5" y2="211.3" stroke="#c8c8c8" stroke-width="1"/><line x1="1225.5" y1="207.3" x2="1225.5" y2="211.3" stroke="#c8c8c8" stroke-width="1"/><line x1="1255.5" y1="207.3" x2="1255.5" y2="211.3" stroke="#c8c8c8" stroke-width="1"/><line x1="1270.5" y1="207.3" x2="1270.5" y2="211.3" stroke="#c8c8c8" stroke-width="1"/><line x1="1300.5" y1="207.3" x2="1300.5" y2="211.3" stroke="#c8c8c8" stroke-width="1"/><line x1="1315.5" y1="207.3" x2="1315.5" y2="211.3" stroke="#c8c8c8" stroke-width="1"/><line x1="1345.5" y1="207.3" x2="1345.5" y2="211.3" stroke="#c8c8c8" stroke-width="1"/><line x1="970.5" y1="207.3" x2="970.5" y2="214.6" stroke="#a8a8a8" stroke-width="1"/><line x1="1015.5" y1="207.3" x2="1015.5" y2="214.6" stroke="#a8a8a8" stroke-width="1"/><line x1="1060.5" y1="207.3" x2="1060.5" y2="214.6" stroke="#a8a8a8" stroke-width="1"/><line x1="1105.5" y1="207.3" x2="1105.5" y2="214.6" stroke="#a8a8a8" stroke-width="1"/><line x1="1150.5" y1="207.3" x2="1150.5" y2="214.6" stroke="#a8a8a8" stroke-width="1"/><line x1="1195.5" y1="207.3" x2="1195.5" y2="214.6" stroke="#a8a8a8" stroke-width="1"/><line x1="1240.5" y1="207.3" x2="1240.5" y2="214.6" stroke="#a8a8a8" stroke-width="1"/><line x1="1285.5" y1="207.3" x2="1285.5" y2="214.6" stroke="#a8a8a8" stroke-width="1"/><line x1="1330.5" y1="207.3" x2="1330.5" y2="214.6" stroke="#a8a8a8" stroke-width="1"/><text x="970.3" y="222.0" text-anchor="middle">0</text><text x="1015.3" y="222.0" text-anchor="middle">3</text><text x="1060.2" y="222.0" text-anchor="middle">6</text><text x="1105.2" y="222.0" text-anchor="middle">9</text><text x="1150.2" y="222.0" text-anchor="middle">12</text><text x="1195.1" y="222.0" text-anchor="middle">15</text><text x="1240.1" y="222.0" text-anchor="middle">18</text><text x="1285.0" y="222.0" text-anchor="middle">21</text><text x="1330.0" y="222.0" text-anchor="middle">24</text><rect x="1123.1" y="187.0" width="26" height="26" rx="5" fill="#f2f2f2" stroke="#8a8a8a" stroke-width="1"/><line x1="1136.1" y1="194.5" x2="1136.1" y2="205.5" stroke="#8a8a8a" stroke-width="1.3"/><line x1="1132.7" y1="197.5" x2="1132.7" y2="202.5" stroke="#8a8a8a" stroke-width="1.3"/><line x1="1139.5" y1="197.5" x2="1139.5" y2="202.5" stroke="#8a8a8a" stroke-width="1.3"/><rect x="969" y="250.4" width="376" height="9.2" rx="3" fill="#dedede"/><line x1="989.5" y1="262.3" x2="989.5" y2="266.3" stroke="#c8c8c8" stroke-width="1"/><line x1="1027.5" y1="262.3" x2="1027.5" y2="266.3" stroke="#c8c8c8" stroke-width="1"/><line x1="1064.5" y1="262.3" x2="1064.5" y2="266.3" stroke="#c8c8c8" stroke-width="1"/><line x1="1101.5" y1="262.3" x2="1101.5" y2="266.3" stroke="#c8c8c8" stroke-width="1"/><line x1="1139.5" y1="262.3" x2="1139.5" y2="266.3" stroke="#c8c8c8" stroke-width="1"/><line x1="1176.5" y1="262.3" x2="1176.5" y2="266.3" stroke="#c8c8c8" stroke-width="1"/><line x1="1214.5" y1="262.3" x2="1214.5" y2="266.3" stroke="#c8c8c8" stroke-width="1"/><line x1="1251.5" y1="262.3" x2="1251.5" y2="266.3" stroke="#c8c8c8" stroke-width="1"/><line x1="1289.5" y1="262.3" x2="1289.5" y2="266.3" stroke="#c8c8c8" stroke-width="1"/><line x1="1326.5" y1="262.3" x2="1326.5" y2="266.3" stroke="#c8c8c8" stroke-width="1"/><line x1="970.5" y1="262.3" x2="970.5" y2="269.6" stroke="#a8a8a8" stroke-width="1"/><line x1="1008.5" y1="262.3" x2="1008.5" y2="269.6" stroke="#a8a8a8" stroke-width="1"/><line x1="1045.5" y1="262.3" x2="1045.5" y2="269.6" stroke="#a8a8a8" stroke-width="1"/><line x1="1083.5" y1="262.3" x2="1083.5" y2="269.6" stroke="#a8a8a8" stroke-width="1"/><line x1="1120.5" y1="262.3" x2="1120.5" y2="269.6" stroke="#a8a8a8" stroke-width="1"/><line x1="1158.5" y1="262.3" x2="1158.5" y2="269.6" stroke="#a8a8a8" stroke-width="1"/><line x1="1195.5" y1="262.3" x2="1195.5" y2="269.6" stroke="#a8a8a8" stroke-width="1"/><line x1="1233.5" y1="262.3" x2="1233.5" y2="269.6" stroke="#a8a8a8" stroke-width="1"/><line x1="1270.5" y1="262.3" x2="1270.5" y2="269.6" stroke="#a8a8a8" stroke-width="1"/><line x1="1308.5" y1="262.3" x2="1308.5" y2="269.6" stroke="#a8a8a8" stroke-width="1"/><line x1="1345.5" y1="262.3" x2="1345.5" y2="269.6" stroke="#a8a8a8" stroke-width="1"/><text x="970.3" y="277.0" text-anchor="middle">-10</text><text x="1007.8" y="277.0" text-anchor="middle">-9</text><text x="1045.2" y="277.0" text-anchor="middle">-8</text><text x="1082.7" y="277.0" text-anchor="middle">-7</text><text x="1120.2" y="277.0" text-anchor="middle">-6</text><text x="1157.7" y="277.0" text-anchor="middle">-5</text><text x="1195.1" y="277.0" text-anchor="middle">-4</text><text x="1232.6" y="277.0" text-anchor="middle">-3</text><text x="1270.1" y="277.0" text-anchor="middle">-2</text><text x="1307.5" y="277.0" text-anchor="middle">-1</text><text x="1345.0" y="277.0" text-anchor="middle">0</text><rect x="1218.5" y="242.0" width="26" height="26" rx="5" fill="#f2f2f2" stroke="#8a8a8a" stroke-width="1"/><line x1="1231.5" y1="249.5" x2="1231.5" y2="260.5" stroke="#8a8a8a" stroke-width="1.3"/><line x1="1228.1" y1="252.5" x2="1228.1" y2="257.5" stroke="#8a8a8a" stroke-width="1.3"/><line x1="1234.9" y1="252.5" x2="1234.9" y2="257.5" stroke="#8a8a8a" stroke-width="1.3"/><rect x="969" y="305.4" width="376" height="9.2" rx="3" fill="#dedede"/><line x1="1002.5" y1="317.3" x2="1002.5" y2="321.3" stroke="#c8c8c8" stroke-width="1"/><line x1="1064.5" y1="317.3" x2="1064.5" y2="321.3" stroke="#c8c8c8" stroke-width="1"/><line x1="1126.5" y1="317.3" x2="1126.5" y2="321.3" stroke="#c8c8c8" stroke-width="1"/><line x1="1189.5" y1="317.3" x2="1189.5" y2="321.3" stroke="#c8c8c8" stroke-width="1"/><line x1="1251.5" y1="317.3" x2="1251.5" y2="321.3" stroke="#c8c8c8" stroke-width="1"/><line x1="1314.5" y1="317.3" x2="1314.5" y2="321.3" stroke="#c8c8c8" stroke-width="1"/><line x1="970.5" y1="317.3" x2="970.5" y2="324.6" stroke="#a8a8a8" stroke-width="1"/><line x1="1033.5" y1="317.3" x2="1033.5" y2="324.6" stroke="#a8a8a8" stroke-width="1"/><line x1="1095.5" y1="317.3" x2="1095.5" y2="324.6" stroke="#a8a8a8" stroke-width="1"/><line x1="1158.5" y1="317.3" x2="1158.5" y2="324.6" stroke="#a8a8a8" stroke-width="1"/><line x1="1220.5" y1="317.3" x2="1220.5" y2="324.6" stroke="#a8a8a8" stroke-width="1"/><line x1="1283.5" y1="317.3" x2="1283.5" y2="324.6" stroke="#a8a8a8" stroke-width="1"/><line x1="1345.5" y1="317.3" x2="1345.5" y2="324.6" stroke="#a8a8a8" stroke-width="1"/><text x="970.3" y="332.0" text-anchor="middle">-1</text><text x="1032.8" y="332.0" text-anchor="middle">0</text><text x="1095.2" y="332.0" text-anchor="middle">1</text><text x="1157.7" y="332.0" text-anchor="middle">2</text><text x="1220.1" y="332.0" text-anchor="middle">3</text><text x="1282.5" y="332.0" text-anchor="middle">4</text><text x="1345.0" y="332.0" text-anchor="middle">5</text><rect x="1024.1" y="297.0" width="26" height="26" rx="5" fill="#f2f2f2" stroke="#8a8a8a" stroke-width="1"/><line x1="1037.1" y1="304.5" x2="1037.1" y2="315.5" stroke="#8a8a8a" stroke-width="1.3"/><line x1="1033.7" y1="307.5" x2="1033.7" y2="312.5" stroke="#8a8a8a" stroke-width="1.3"/><line x1="1040.5" y1="307.5" x2="1040.5" y2="312.5" stroke="#8a8a8a" stroke-width="1.3"/></g></svg>
<div id="tabs">
 <div class="tab act" style="left:0px;width:80px"><span style="position:absolute;left:15px;top:12px;font-size:13.6px">CIE Sky</span></div>
 <div class="tab" style="left:99px"><span style="position:absolute;left:0;top:12px;font-size:13.5px">Metric</span></div>
 <div class="tab" style="left:171px"><span style="position:absolute;left:0;top:12px;font-size:13.6px">Weather</span></div>
 <div class="tab" style="left:327px"><span style="position:absolute;left:0;top:12px">Options</span><span style="position:absolute;left:56px;top:18px;width:0;height:0;border-left:4px solid transparent;border-right:4px solid transparent;border-top:4px solid #337ab7"></span></div>
</div>
<div id="content">
 <div style="position:absolute;left:5px;top:6px;font-size:13.6px;color:#222;white-space:nowrap;line-height:16px">CIE STANDARD GENERAL SKY TYPES</div>
 <div id="lb">
  <div class="it" style="top:-4px;letter-spacing:0.1px">15. White-blue turbid sky, broad corona</div>
  <div class="it" style="top:13px;letter-spacing:0.05px">16. Traditional CIE Overcast Sky</div>
  <div style="position:absolute;left:6px;top:29px;width:352px;height:17px;background:#3399ff"></div>
  <div class="it" style="top:30px;color:#fff;font-size:13.6px">USE HOURLY WEATHER DATA</div>
  <div style="position:absolute;left:365px;top:0;width:17px;height:46px;background:#f0f0f0"><div style="position:absolute;left:5px;top:7px;width:0;height:0;border-left:3.5px solid transparent;border-right:3.5px solid transparent;border-bottom:4px solid #333"></div><div style="position:absolute;left:5px;top:35px;width:0;height:0;border-left:3.5px solid transparent;border-right:3.5px solid transparent;border-top:4px solid #333"></div></div>
 </div>
 <p class="j" style="top:79px;font-style:italic;color:#777;text-align:left;letter-spacing:0.17px">The sky distribution is calculated by linearly interpolating hourly weather data.</p>
 <div class="jl" style="top:123.5px;">The Commission Internationale de l'Éclairage (CIE) has defined a set</div><div class="jl" style="top:140.5px;">of 15 standard sky types for modelling the radiance/luminance</div><div class="jl" style="top:157.5px;">distribution under a wide range of weather conditions from overcast to</div><div class="jl" style="top:174.5px;">cloudless, and with or without direct sunlight. The 16th varient</div><div class="jl" style="top:191.5px;">corresponds to a much simpler mathematical model for overcast</div><div class="jl" style="top:208.5px;text-align-last:left">skies defined and used by CIE prior to this standard.</div><div class="jl" style="top:235px;">The various sky types are generated using different values for each of</div><div class="jl" style="top:252px;text-align-last:left">the 5 sky coefficients shown in the panel above.</div>
</div>
<div id="sbar"><div style="position:absolute;left:3px;top:7px;width:0;height:0;border-left:4px solid transparent;border-right:4px solid transparent;border-bottom:4px solid #333"></div><div style="position:absolute;left:1px;top:20px;width:12px;height:210px;background:#c8c8c8;border:1px solid #b0b0b0;border-radius:1px"></div><div style="position:absolute;left:4px;top:120px;width:6px;height:1px;background:#777;box-shadow:0 2px 0 #777,0 4px 0 #777"></div></div>
</body></html>
